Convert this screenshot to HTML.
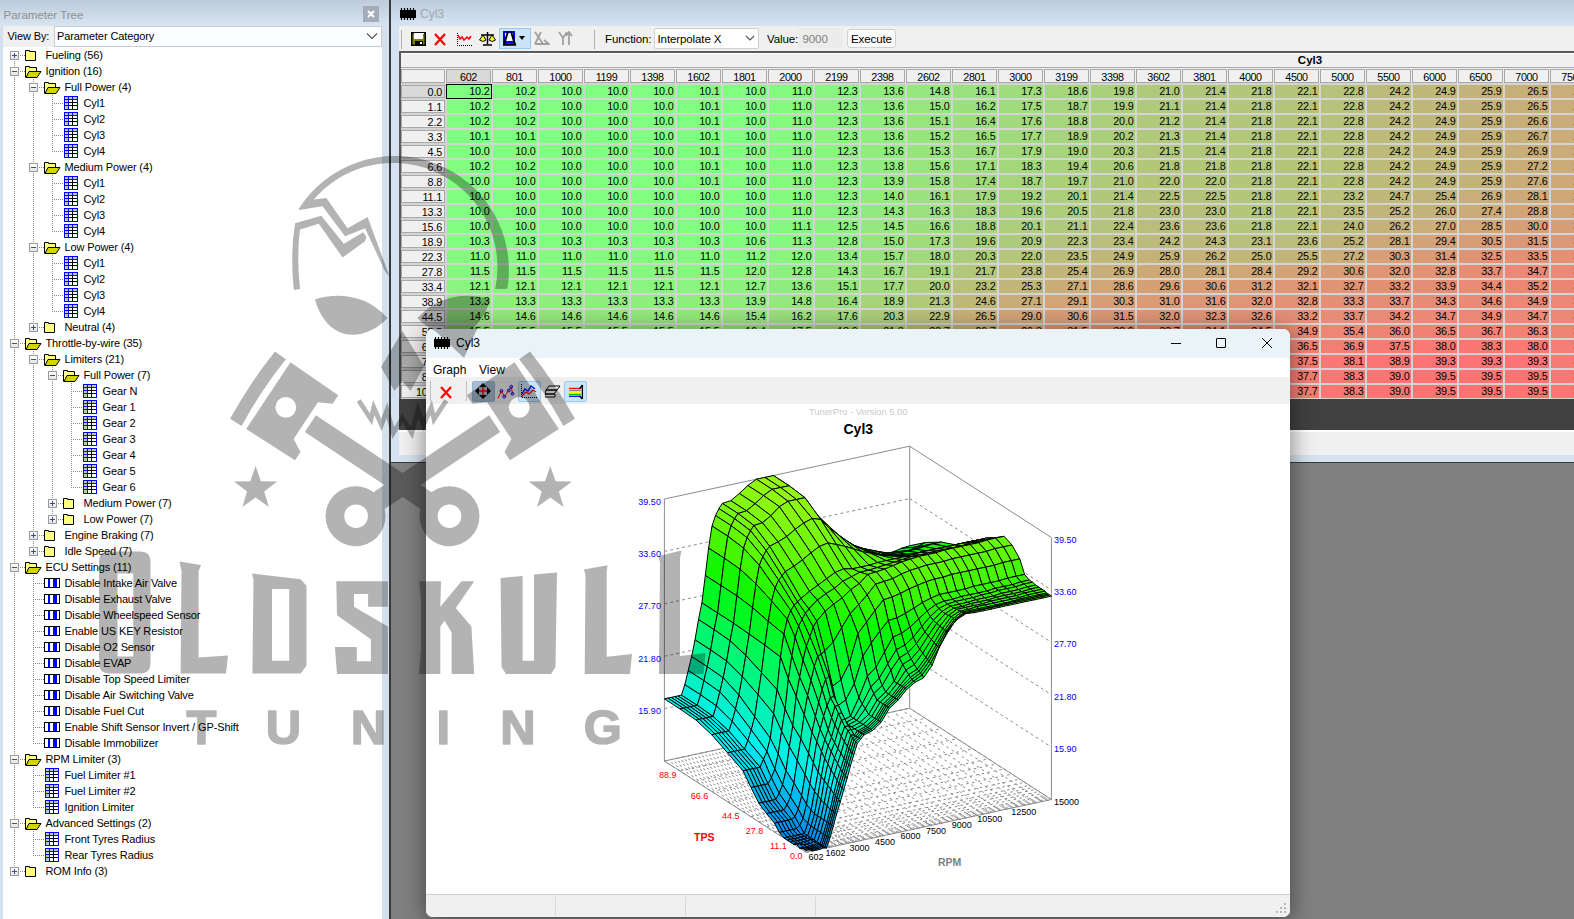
<!DOCTYPE html><html><head><meta charset="utf-8"><style>
*{margin:0;padding:0;box-sizing:content-box}
html,body{width:1574px;height:919px;overflow:hidden;background:#808080;font-family:"Liberation Sans",sans-serif}
.a{position:absolute}
.tt{position:absolute;font-size:11px;line-height:16px;white-space:nowrap;color:#000;letter-spacing:-0.12px}
.c{position:absolute;width:42.5px;height:13px;padding-right:1.5px;font-size:10.8px;line-height:13px;text-align:right;letter-spacing:-0.2px;color:#000;overflow:hidden}
.hc{position:absolute;border:1px solid #a8a8a8;font-size:10.8px;line-height:15px;text-align:center;letter-spacing:-0.4px;color:#000;background:#f0f0f0;overflow:hidden}
.hr{position:absolute;border:1px solid #a8a8a8;font-size:10.8px;line-height:12px;text-align:right;padding-right:2px;letter-spacing:-0.2px;color:#000;background:#f0f0f0;overflow:hidden}
.tb{position:absolute;white-space:nowrap}
</style></head><body><div class="a" style="left:0;top:0;width:391px;height:919px;background:#d4e0ec"></div><div class="a" style="left:0;top:0;width:389px;height:26px;background:linear-gradient(#bdcbdb,#d8e4f0)"></div><div class="tb" style="left:3.5px;top:7px;font-size:11.5px;color:#909090;line-height:16px">Parameter Tree</div><div class="a" style="left:363px;top:6px;width:16px;height:16px;background:#a3acb8"></div><svg class="a" style="left:363px;top:6px" width="16" height="16"><path d="M5 5L11 11M11 5L5 11" stroke="#fff" stroke-width="2"/></svg><div class="a" style="left:3px;top:26px;width:379px;height:21px;background:#f0f0f0"></div><div class="tb" style="left:7.5px;top:28px;font-size:11px;line-height:16px;letter-spacing:-0.1px">View By:</div><div class="a" style="left:54px;top:26px;width:326px;height:19px;background:#fcfdfe;border:1px solid #c8ccd2"></div><div class="tb" style="left:57px;top:28px;font-size:11px;line-height:16px;letter-spacing:-0.1px">Parameter Category</div><svg class="a" style="left:366px;top:32px" width="12" height="8"><path d="M1 1.5L6 6.5L11 1.5" fill="none" stroke="#505050" stroke-width="1.1"/></svg><div class="a" style="left:3px;top:47px;width:379px;height:872px;background:#fff"></div><div style="position:absolute;left:14px;top:55px;width:1px;height:16px;background:repeating-linear-gradient(#8c8c8c 0 1px,transparent 1px 2px)"></div><div style="position:absolute;left:14px;top:71px;width:1px;height:272px;background:repeating-linear-gradient(#8c8c8c 0 1px,transparent 1px 2px)"></div><div style="position:absolute;left:33px;top:77px;width:1px;height:10px;background:repeating-linear-gradient(#8c8c8c 0 1px,transparent 1px 2px)"></div><div style="position:absolute;left:33px;top:87px;width:1px;height:80px;background:repeating-linear-gradient(#8c8c8c 0 1px,transparent 1px 2px)"></div><div style="position:absolute;left:52px;top:93px;width:1px;height:10px;background:repeating-linear-gradient(#8c8c8c 0 1px,transparent 1px 2px)"></div><div style="position:absolute;left:52px;top:103px;width:1px;height:16px;background:repeating-linear-gradient(#8c8c8c 0 1px,transparent 1px 2px)"></div><div style="position:absolute;left:52px;top:119px;width:1px;height:16px;background:repeating-linear-gradient(#8c8c8c 0 1px,transparent 1px 2px)"></div><div style="position:absolute;left:52px;top:135px;width:1px;height:16px;background:repeating-linear-gradient(#8c8c8c 0 1px,transparent 1px 2px)"></div><div style="position:absolute;left:33px;top:167px;width:1px;height:80px;background:repeating-linear-gradient(#8c8c8c 0 1px,transparent 1px 2px)"></div><div style="position:absolute;left:52px;top:173px;width:1px;height:10px;background:repeating-linear-gradient(#8c8c8c 0 1px,transparent 1px 2px)"></div><div style="position:absolute;left:52px;top:183px;width:1px;height:16px;background:repeating-linear-gradient(#8c8c8c 0 1px,transparent 1px 2px)"></div><div style="position:absolute;left:52px;top:199px;width:1px;height:16px;background:repeating-linear-gradient(#8c8c8c 0 1px,transparent 1px 2px)"></div><div style="position:absolute;left:52px;top:215px;width:1px;height:16px;background:repeating-linear-gradient(#8c8c8c 0 1px,transparent 1px 2px)"></div><div style="position:absolute;left:33px;top:247px;width:1px;height:80px;background:repeating-linear-gradient(#8c8c8c 0 1px,transparent 1px 2px)"></div><div style="position:absolute;left:52px;top:253px;width:1px;height:10px;background:repeating-linear-gradient(#8c8c8c 0 1px,transparent 1px 2px)"></div><div style="position:absolute;left:52px;top:263px;width:1px;height:16px;background:repeating-linear-gradient(#8c8c8c 0 1px,transparent 1px 2px)"></div><div style="position:absolute;left:52px;top:279px;width:1px;height:16px;background:repeating-linear-gradient(#8c8c8c 0 1px,transparent 1px 2px)"></div><div style="position:absolute;left:52px;top:295px;width:1px;height:16px;background:repeating-linear-gradient(#8c8c8c 0 1px,transparent 1px 2px)"></div><div style="position:absolute;left:14px;top:343px;width:1px;height:224px;background:repeating-linear-gradient(#8c8c8c 0 1px,transparent 1px 2px)"></div><div style="position:absolute;left:33px;top:349px;width:1px;height:10px;background:repeating-linear-gradient(#8c8c8c 0 1px,transparent 1px 2px)"></div><div style="position:absolute;left:33px;top:359px;width:1px;height:176px;background:repeating-linear-gradient(#8c8c8c 0 1px,transparent 1px 2px)"></div><div style="position:absolute;left:52px;top:365px;width:1px;height:10px;background:repeating-linear-gradient(#8c8c8c 0 1px,transparent 1px 2px)"></div><div style="position:absolute;left:52px;top:375px;width:1px;height:128px;background:repeating-linear-gradient(#8c8c8c 0 1px,transparent 1px 2px)"></div><div style="position:absolute;left:71px;top:381px;width:1px;height:10px;background:repeating-linear-gradient(#8c8c8c 0 1px,transparent 1px 2px)"></div><div style="position:absolute;left:71px;top:391px;width:1px;height:16px;background:repeating-linear-gradient(#8c8c8c 0 1px,transparent 1px 2px)"></div><div style="position:absolute;left:71px;top:407px;width:1px;height:16px;background:repeating-linear-gradient(#8c8c8c 0 1px,transparent 1px 2px)"></div><div style="position:absolute;left:71px;top:423px;width:1px;height:16px;background:repeating-linear-gradient(#8c8c8c 0 1px,transparent 1px 2px)"></div><div style="position:absolute;left:71px;top:439px;width:1px;height:16px;background:repeating-linear-gradient(#8c8c8c 0 1px,transparent 1px 2px)"></div><div style="position:absolute;left:71px;top:455px;width:1px;height:16px;background:repeating-linear-gradient(#8c8c8c 0 1px,transparent 1px 2px)"></div><div style="position:absolute;left:71px;top:471px;width:1px;height:16px;background:repeating-linear-gradient(#8c8c8c 0 1px,transparent 1px 2px)"></div><div style="position:absolute;left:52px;top:503px;width:1px;height:16px;background:repeating-linear-gradient(#8c8c8c 0 1px,transparent 1px 2px)"></div><div style="position:absolute;left:33px;top:535px;width:1px;height:16px;background:repeating-linear-gradient(#8c8c8c 0 1px,transparent 1px 2px)"></div><div style="position:absolute;left:14px;top:567px;width:1px;height:192px;background:repeating-linear-gradient(#8c8c8c 0 1px,transparent 1px 2px)"></div><div style="position:absolute;left:33px;top:573px;width:1px;height:10px;background:repeating-linear-gradient(#8c8c8c 0 1px,transparent 1px 2px)"></div><div style="position:absolute;left:33px;top:583px;width:1px;height:16px;background:repeating-linear-gradient(#8c8c8c 0 1px,transparent 1px 2px)"></div><div style="position:absolute;left:33px;top:599px;width:1px;height:16px;background:repeating-linear-gradient(#8c8c8c 0 1px,transparent 1px 2px)"></div><div style="position:absolute;left:33px;top:615px;width:1px;height:16px;background:repeating-linear-gradient(#8c8c8c 0 1px,transparent 1px 2px)"></div><div style="position:absolute;left:33px;top:631px;width:1px;height:16px;background:repeating-linear-gradient(#8c8c8c 0 1px,transparent 1px 2px)"></div><div style="position:absolute;left:33px;top:647px;width:1px;height:16px;background:repeating-linear-gradient(#8c8c8c 0 1px,transparent 1px 2px)"></div><div style="position:absolute;left:33px;top:663px;width:1px;height:16px;background:repeating-linear-gradient(#8c8c8c 0 1px,transparent 1px 2px)"></div><div style="position:absolute;left:33px;top:679px;width:1px;height:16px;background:repeating-linear-gradient(#8c8c8c 0 1px,transparent 1px 2px)"></div><div style="position:absolute;left:33px;top:695px;width:1px;height:16px;background:repeating-linear-gradient(#8c8c8c 0 1px,transparent 1px 2px)"></div><div style="position:absolute;left:33px;top:711px;width:1px;height:16px;background:repeating-linear-gradient(#8c8c8c 0 1px,transparent 1px 2px)"></div><div style="position:absolute;left:33px;top:727px;width:1px;height:16px;background:repeating-linear-gradient(#8c8c8c 0 1px,transparent 1px 2px)"></div><div style="position:absolute;left:14px;top:759px;width:1px;height:64px;background:repeating-linear-gradient(#8c8c8c 0 1px,transparent 1px 2px)"></div><div style="position:absolute;left:33px;top:765px;width:1px;height:10px;background:repeating-linear-gradient(#8c8c8c 0 1px,transparent 1px 2px)"></div><div style="position:absolute;left:33px;top:775px;width:1px;height:16px;background:repeating-linear-gradient(#8c8c8c 0 1px,transparent 1px 2px)"></div><div style="position:absolute;left:33px;top:791px;width:1px;height:16px;background:repeating-linear-gradient(#8c8c8c 0 1px,transparent 1px 2px)"></div><div style="position:absolute;left:14px;top:823px;width:1px;height:48px;background:repeating-linear-gradient(#8c8c8c 0 1px,transparent 1px 2px)"></div><div style="position:absolute;left:33px;top:829px;width:1px;height:10px;background:repeating-linear-gradient(#8c8c8c 0 1px,transparent 1px 2px)"></div><div style="position:absolute;left:33px;top:839px;width:1px;height:16px;background:repeating-linear-gradient(#8c8c8c 0 1px,transparent 1px 2px)"></div><div style="position:absolute;left:14px;top:55px;width:11px;height:1px;background:repeating-linear-gradient(90deg,#8c8c8c 0 1px,transparent 1px 2px)"></div><div style="position:absolute;left:10px;top:51px;width:7px;height:7px;border:1px solid #9a9a9a;background:linear-gradient(#fff,#e6e6e6)"></div><div style="position:absolute;left:12px;top:55px;width:5px;height:1px;background:#3b4c8a"></div><div style="position:absolute;left:14px;top:53px;width:1px;height:5px;background:#3b4c8a"></div><svg style="position:absolute;left:25px;top:50px" width="11" height="11" viewBox="0 0 11 11"><path d="M1 1H4V2H10V10H1Z" fill="#ffff80"/><path d="M0.5 10.5V0.5H4.5V1.5H10.5V10.5Z" fill="none" stroke="#000" stroke-width="1"/></svg><div class="tt" style="left:45.5px;top:47px">Fueling (56)</div><div style="position:absolute;left:14px;top:71px;width:11px;height:1px;background:repeating-linear-gradient(90deg,#8c8c8c 0 1px,transparent 1px 2px)"></div><div style="position:absolute;left:10px;top:67px;width:7px;height:7px;border:1px solid #9a9a9a;background:linear-gradient(#fff,#e6e6e6)"></div><div style="position:absolute;left:12px;top:71px;width:5px;height:1px;background:#3b4c8a"></div><svg style="position:absolute;left:25px;top:66px" width="17" height="12" viewBox="0 0 17 12"><path d="M1 11V1H4V2H11V5H4L1 11Z" fill="#ffff80"/><path d="M0.5 11.5V0.5H4.5V1.5H11.5V5.5" fill="none" stroke="#000" stroke-width="1"/><path d="M1 11.5L4 5.5H16L12 11.5Z" fill="#d4d400" stroke="#000" stroke-width="1" stroke-linejoin="miter"/></svg><div class="tt" style="left:45.5px;top:63px">Ignition (16)</div><div style="position:absolute;left:33px;top:87px;width:11px;height:1px;background:repeating-linear-gradient(90deg,#8c8c8c 0 1px,transparent 1px 2px)"></div><div style="position:absolute;left:29px;top:83px;width:7px;height:7px;border:1px solid #9a9a9a;background:linear-gradient(#fff,#e6e6e6)"></div><div style="position:absolute;left:31px;top:87px;width:5px;height:1px;background:#3b4c8a"></div><svg style="position:absolute;left:44px;top:82px" width="17" height="12" viewBox="0 0 17 12"><path d="M1 11V1H4V2H11V5H4L1 11Z" fill="#ffff80"/><path d="M0.5 11.5V0.5H4.5V1.5H11.5V5.5" fill="none" stroke="#000" stroke-width="1"/><path d="M1 11.5L4 5.5H16L12 11.5Z" fill="#d4d400" stroke="#000" stroke-width="1" stroke-linejoin="miter"/></svg><div class="tt" style="left:64.5px;top:79px">Full Power (4)</div><div style="position:absolute;left:52px;top:103px;width:11px;height:1px;background:repeating-linear-gradient(90deg,#8c8c8c 0 1px,transparent 1px 2px)"></div><svg style="position:absolute;left:64px;top:96px" width="14" height="14" viewBox="0 0 14 14" shape-rendering="crispEdges"><rect x="0" y="0" width="14" height="14" fill="#0000ff"/><rect x="1" y="1" width="3" height="2" fill="#c8c8a8"/><rect x="5" y="1" width="3" height="2" fill="#c8c8a8"/><rect x="9" y="1" width="4" height="2" fill="#c8c8a8"/><rect x="1" y="4" width="3" height="2" fill="#c8c8a8"/><rect x="1" y="7" width="3" height="2" fill="#c8c8a8"/><rect x="1" y="10" width="3" height="3" fill="#c8c8a8"/><rect x="5" y="4" width="3" height="2" fill="#fff"/><rect x="9" y="4" width="4" height="2" fill="#fff"/><rect x="5" y="7" width="3" height="2" fill="#fff"/><rect x="9" y="7" width="4" height="2" fill="#fff"/><rect x="5" y="10" width="3" height="3" fill="#fff"/><rect x="9" y="10" width="4" height="3" fill="#fff"/><rect x="8" y="4" width="1" height="9" fill="#000"/><rect x="5" y="6" width="8" height="1" fill="#000"/><rect x="5" y="9" width="8" height="1" fill="#000"/></svg><div class="tt" style="left:83.5px;top:95px">Cyl1</div><div style="position:absolute;left:52px;top:119px;width:11px;height:1px;background:repeating-linear-gradient(90deg,#8c8c8c 0 1px,transparent 1px 2px)"></div><svg style="position:absolute;left:64px;top:112px" width="14" height="14" viewBox="0 0 14 14" shape-rendering="crispEdges"><rect x="0" y="0" width="14" height="14" fill="#0000ff"/><rect x="1" y="1" width="3" height="2" fill="#c8c8a8"/><rect x="5" y="1" width="3" height="2" fill="#c8c8a8"/><rect x="9" y="1" width="4" height="2" fill="#c8c8a8"/><rect x="1" y="4" width="3" height="2" fill="#c8c8a8"/><rect x="1" y="7" width="3" height="2" fill="#c8c8a8"/><rect x="1" y="10" width="3" height="3" fill="#c8c8a8"/><rect x="5" y="4" width="3" height="2" fill="#fff"/><rect x="9" y="4" width="4" height="2" fill="#fff"/><rect x="5" y="7" width="3" height="2" fill="#fff"/><rect x="9" y="7" width="4" height="2" fill="#fff"/><rect x="5" y="10" width="3" height="3" fill="#fff"/><rect x="9" y="10" width="4" height="3" fill="#fff"/><rect x="8" y="4" width="1" height="9" fill="#000"/><rect x="5" y="6" width="8" height="1" fill="#000"/><rect x="5" y="9" width="8" height="1" fill="#000"/></svg><div class="tt" style="left:83.5px;top:111px">Cyl2</div><div style="position:absolute;left:52px;top:135px;width:11px;height:1px;background:repeating-linear-gradient(90deg,#8c8c8c 0 1px,transparent 1px 2px)"></div><svg style="position:absolute;left:64px;top:128px" width="14" height="14" viewBox="0 0 14 14" shape-rendering="crispEdges"><rect x="0" y="0" width="14" height="14" fill="#0000ff"/><rect x="1" y="1" width="3" height="2" fill="#c8c8a8"/><rect x="5" y="1" width="3" height="2" fill="#c8c8a8"/><rect x="9" y="1" width="4" height="2" fill="#c8c8a8"/><rect x="1" y="4" width="3" height="2" fill="#c8c8a8"/><rect x="1" y="7" width="3" height="2" fill="#c8c8a8"/><rect x="1" y="10" width="3" height="3" fill="#c8c8a8"/><rect x="5" y="4" width="3" height="2" fill="#fff"/><rect x="9" y="4" width="4" height="2" fill="#fff"/><rect x="5" y="7" width="3" height="2" fill="#fff"/><rect x="9" y="7" width="4" height="2" fill="#fff"/><rect x="5" y="10" width="3" height="3" fill="#fff"/><rect x="9" y="10" width="4" height="3" fill="#fff"/><rect x="8" y="4" width="1" height="9" fill="#000"/><rect x="5" y="6" width="8" height="1" fill="#000"/><rect x="5" y="9" width="8" height="1" fill="#000"/></svg><div class="tt" style="left:83.5px;top:127px">Cyl3</div><div style="position:absolute;left:52px;top:151px;width:11px;height:1px;background:repeating-linear-gradient(90deg,#8c8c8c 0 1px,transparent 1px 2px)"></div><svg style="position:absolute;left:64px;top:144px" width="14" height="14" viewBox="0 0 14 14" shape-rendering="crispEdges"><rect x="0" y="0" width="14" height="14" fill="#0000ff"/><rect x="1" y="1" width="3" height="2" fill="#c8c8a8"/><rect x="5" y="1" width="3" height="2" fill="#c8c8a8"/><rect x="9" y="1" width="4" height="2" fill="#c8c8a8"/><rect x="1" y="4" width="3" height="2" fill="#c8c8a8"/><rect x="1" y="7" width="3" height="2" fill="#c8c8a8"/><rect x="1" y="10" width="3" height="3" fill="#c8c8a8"/><rect x="5" y="4" width="3" height="2" fill="#fff"/><rect x="9" y="4" width="4" height="2" fill="#fff"/><rect x="5" y="7" width="3" height="2" fill="#fff"/><rect x="9" y="7" width="4" height="2" fill="#fff"/><rect x="5" y="10" width="3" height="3" fill="#fff"/><rect x="9" y="10" width="4" height="3" fill="#fff"/><rect x="8" y="4" width="1" height="9" fill="#000"/><rect x="5" y="6" width="8" height="1" fill="#000"/><rect x="5" y="9" width="8" height="1" fill="#000"/></svg><div class="tt" style="left:83.5px;top:143px">Cyl4</div><div style="position:absolute;left:33px;top:167px;width:11px;height:1px;background:repeating-linear-gradient(90deg,#8c8c8c 0 1px,transparent 1px 2px)"></div><div style="position:absolute;left:29px;top:163px;width:7px;height:7px;border:1px solid #9a9a9a;background:linear-gradient(#fff,#e6e6e6)"></div><div style="position:absolute;left:31px;top:167px;width:5px;height:1px;background:#3b4c8a"></div><svg style="position:absolute;left:44px;top:162px" width="17" height="12" viewBox="0 0 17 12"><path d="M1 11V1H4V2H11V5H4L1 11Z" fill="#ffff80"/><path d="M0.5 11.5V0.5H4.5V1.5H11.5V5.5" fill="none" stroke="#000" stroke-width="1"/><path d="M1 11.5L4 5.5H16L12 11.5Z" fill="#d4d400" stroke="#000" stroke-width="1" stroke-linejoin="miter"/></svg><div class="tt" style="left:64.5px;top:159px">Medium Power (4)</div><div style="position:absolute;left:52px;top:183px;width:11px;height:1px;background:repeating-linear-gradient(90deg,#8c8c8c 0 1px,transparent 1px 2px)"></div><svg style="position:absolute;left:64px;top:176px" width="14" height="14" viewBox="0 0 14 14" shape-rendering="crispEdges"><rect x="0" y="0" width="14" height="14" fill="#0000ff"/><rect x="1" y="1" width="3" height="2" fill="#c8c8a8"/><rect x="5" y="1" width="3" height="2" fill="#c8c8a8"/><rect x="9" y="1" width="4" height="2" fill="#c8c8a8"/><rect x="1" y="4" width="3" height="2" fill="#c8c8a8"/><rect x="1" y="7" width="3" height="2" fill="#c8c8a8"/><rect x="1" y="10" width="3" height="3" fill="#c8c8a8"/><rect x="5" y="4" width="3" height="2" fill="#fff"/><rect x="9" y="4" width="4" height="2" fill="#fff"/><rect x="5" y="7" width="3" height="2" fill="#fff"/><rect x="9" y="7" width="4" height="2" fill="#fff"/><rect x="5" y="10" width="3" height="3" fill="#fff"/><rect x="9" y="10" width="4" height="3" fill="#fff"/><rect x="8" y="4" width="1" height="9" fill="#000"/><rect x="5" y="6" width="8" height="1" fill="#000"/><rect x="5" y="9" width="8" height="1" fill="#000"/></svg><div class="tt" style="left:83.5px;top:175px">Cyl1</div><div style="position:absolute;left:52px;top:199px;width:11px;height:1px;background:repeating-linear-gradient(90deg,#8c8c8c 0 1px,transparent 1px 2px)"></div><svg style="position:absolute;left:64px;top:192px" width="14" height="14" viewBox="0 0 14 14" shape-rendering="crispEdges"><rect x="0" y="0" width="14" height="14" fill="#0000ff"/><rect x="1" y="1" width="3" height="2" fill="#c8c8a8"/><rect x="5" y="1" width="3" height="2" fill="#c8c8a8"/><rect x="9" y="1" width="4" height="2" fill="#c8c8a8"/><rect x="1" y="4" width="3" height="2" fill="#c8c8a8"/><rect x="1" y="7" width="3" height="2" fill="#c8c8a8"/><rect x="1" y="10" width="3" height="3" fill="#c8c8a8"/><rect x="5" y="4" width="3" height="2" fill="#fff"/><rect x="9" y="4" width="4" height="2" fill="#fff"/><rect x="5" y="7" width="3" height="2" fill="#fff"/><rect x="9" y="7" width="4" height="2" fill="#fff"/><rect x="5" y="10" width="3" height="3" fill="#fff"/><rect x="9" y="10" width="4" height="3" fill="#fff"/><rect x="8" y="4" width="1" height="9" fill="#000"/><rect x="5" y="6" width="8" height="1" fill="#000"/><rect x="5" y="9" width="8" height="1" fill="#000"/></svg><div class="tt" style="left:83.5px;top:191px">Cyl2</div><div style="position:absolute;left:52px;top:215px;width:11px;height:1px;background:repeating-linear-gradient(90deg,#8c8c8c 0 1px,transparent 1px 2px)"></div><svg style="position:absolute;left:64px;top:208px" width="14" height="14" viewBox="0 0 14 14" shape-rendering="crispEdges"><rect x="0" y="0" width="14" height="14" fill="#0000ff"/><rect x="1" y="1" width="3" height="2" fill="#c8c8a8"/><rect x="5" y="1" width="3" height="2" fill="#c8c8a8"/><rect x="9" y="1" width="4" height="2" fill="#c8c8a8"/><rect x="1" y="4" width="3" height="2" fill="#c8c8a8"/><rect x="1" y="7" width="3" height="2" fill="#c8c8a8"/><rect x="1" y="10" width="3" height="3" fill="#c8c8a8"/><rect x="5" y="4" width="3" height="2" fill="#fff"/><rect x="9" y="4" width="4" height="2" fill="#fff"/><rect x="5" y="7" width="3" height="2" fill="#fff"/><rect x="9" y="7" width="4" height="2" fill="#fff"/><rect x="5" y="10" width="3" height="3" fill="#fff"/><rect x="9" y="10" width="4" height="3" fill="#fff"/><rect x="8" y="4" width="1" height="9" fill="#000"/><rect x="5" y="6" width="8" height="1" fill="#000"/><rect x="5" y="9" width="8" height="1" fill="#000"/></svg><div class="tt" style="left:83.5px;top:207px">Cyl3</div><div style="position:absolute;left:52px;top:231px;width:11px;height:1px;background:repeating-linear-gradient(90deg,#8c8c8c 0 1px,transparent 1px 2px)"></div><svg style="position:absolute;left:64px;top:224px" width="14" height="14" viewBox="0 0 14 14" shape-rendering="crispEdges"><rect x="0" y="0" width="14" height="14" fill="#0000ff"/><rect x="1" y="1" width="3" height="2" fill="#c8c8a8"/><rect x="5" y="1" width="3" height="2" fill="#c8c8a8"/><rect x="9" y="1" width="4" height="2" fill="#c8c8a8"/><rect x="1" y="4" width="3" height="2" fill="#c8c8a8"/><rect x="1" y="7" width="3" height="2" fill="#c8c8a8"/><rect x="1" y="10" width="3" height="3" fill="#c8c8a8"/><rect x="5" y="4" width="3" height="2" fill="#fff"/><rect x="9" y="4" width="4" height="2" fill="#fff"/><rect x="5" y="7" width="3" height="2" fill="#fff"/><rect x="9" y="7" width="4" height="2" fill="#fff"/><rect x="5" y="10" width="3" height="3" fill="#fff"/><rect x="9" y="10" width="4" height="3" fill="#fff"/><rect x="8" y="4" width="1" height="9" fill="#000"/><rect x="5" y="6" width="8" height="1" fill="#000"/><rect x="5" y="9" width="8" height="1" fill="#000"/></svg><div class="tt" style="left:83.5px;top:223px">Cyl4</div><div style="position:absolute;left:33px;top:247px;width:11px;height:1px;background:repeating-linear-gradient(90deg,#8c8c8c 0 1px,transparent 1px 2px)"></div><div style="position:absolute;left:29px;top:243px;width:7px;height:7px;border:1px solid #9a9a9a;background:linear-gradient(#fff,#e6e6e6)"></div><div style="position:absolute;left:31px;top:247px;width:5px;height:1px;background:#3b4c8a"></div><svg style="position:absolute;left:44px;top:242px" width="17" height="12" viewBox="0 0 17 12"><path d="M1 11V1H4V2H11V5H4L1 11Z" fill="#ffff80"/><path d="M0.5 11.5V0.5H4.5V1.5H11.5V5.5" fill="none" stroke="#000" stroke-width="1"/><path d="M1 11.5L4 5.5H16L12 11.5Z" fill="#d4d400" stroke="#000" stroke-width="1" stroke-linejoin="miter"/></svg><div class="tt" style="left:64.5px;top:239px">Low Power (4)</div><div style="position:absolute;left:52px;top:263px;width:11px;height:1px;background:repeating-linear-gradient(90deg,#8c8c8c 0 1px,transparent 1px 2px)"></div><svg style="position:absolute;left:64px;top:256px" width="14" height="14" viewBox="0 0 14 14" shape-rendering="crispEdges"><rect x="0" y="0" width="14" height="14" fill="#0000ff"/><rect x="1" y="1" width="3" height="2" fill="#c8c8a8"/><rect x="5" y="1" width="3" height="2" fill="#c8c8a8"/><rect x="9" y="1" width="4" height="2" fill="#c8c8a8"/><rect x="1" y="4" width="3" height="2" fill="#c8c8a8"/><rect x="1" y="7" width="3" height="2" fill="#c8c8a8"/><rect x="1" y="10" width="3" height="3" fill="#c8c8a8"/><rect x="5" y="4" width="3" height="2" fill="#fff"/><rect x="9" y="4" width="4" height="2" fill="#fff"/><rect x="5" y="7" width="3" height="2" fill="#fff"/><rect x="9" y="7" width="4" height="2" fill="#fff"/><rect x="5" y="10" width="3" height="3" fill="#fff"/><rect x="9" y="10" width="4" height="3" fill="#fff"/><rect x="8" y="4" width="1" height="9" fill="#000"/><rect x="5" y="6" width="8" height="1" fill="#000"/><rect x="5" y="9" width="8" height="1" fill="#000"/></svg><div class="tt" style="left:83.5px;top:255px">Cyl1</div><div style="position:absolute;left:52px;top:279px;width:11px;height:1px;background:repeating-linear-gradient(90deg,#8c8c8c 0 1px,transparent 1px 2px)"></div><svg style="position:absolute;left:64px;top:272px" width="14" height="14" viewBox="0 0 14 14" shape-rendering="crispEdges"><rect x="0" y="0" width="14" height="14" fill="#0000ff"/><rect x="1" y="1" width="3" height="2" fill="#c8c8a8"/><rect x="5" y="1" width="3" height="2" fill="#c8c8a8"/><rect x="9" y="1" width="4" height="2" fill="#c8c8a8"/><rect x="1" y="4" width="3" height="2" fill="#c8c8a8"/><rect x="1" y="7" width="3" height="2" fill="#c8c8a8"/><rect x="1" y="10" width="3" height="3" fill="#c8c8a8"/><rect x="5" y="4" width="3" height="2" fill="#fff"/><rect x="9" y="4" width="4" height="2" fill="#fff"/><rect x="5" y="7" width="3" height="2" fill="#fff"/><rect x="9" y="7" width="4" height="2" fill="#fff"/><rect x="5" y="10" width="3" height="3" fill="#fff"/><rect x="9" y="10" width="4" height="3" fill="#fff"/><rect x="8" y="4" width="1" height="9" fill="#000"/><rect x="5" y="6" width="8" height="1" fill="#000"/><rect x="5" y="9" width="8" height="1" fill="#000"/></svg><div class="tt" style="left:83.5px;top:271px">Cyl2</div><div style="position:absolute;left:52px;top:295px;width:11px;height:1px;background:repeating-linear-gradient(90deg,#8c8c8c 0 1px,transparent 1px 2px)"></div><svg style="position:absolute;left:64px;top:288px" width="14" height="14" viewBox="0 0 14 14" shape-rendering="crispEdges"><rect x="0" y="0" width="14" height="14" fill="#0000ff"/><rect x="1" y="1" width="3" height="2" fill="#c8c8a8"/><rect x="5" y="1" width="3" height="2" fill="#c8c8a8"/><rect x="9" y="1" width="4" height="2" fill="#c8c8a8"/><rect x="1" y="4" width="3" height="2" fill="#c8c8a8"/><rect x="1" y="7" width="3" height="2" fill="#c8c8a8"/><rect x="1" y="10" width="3" height="3" fill="#c8c8a8"/><rect x="5" y="4" width="3" height="2" fill="#fff"/><rect x="9" y="4" width="4" height="2" fill="#fff"/><rect x="5" y="7" width="3" height="2" fill="#fff"/><rect x="9" y="7" width="4" height="2" fill="#fff"/><rect x="5" y="10" width="3" height="3" fill="#fff"/><rect x="9" y="10" width="4" height="3" fill="#fff"/><rect x="8" y="4" width="1" height="9" fill="#000"/><rect x="5" y="6" width="8" height="1" fill="#000"/><rect x="5" y="9" width="8" height="1" fill="#000"/></svg><div class="tt" style="left:83.5px;top:287px">Cyl3</div><div style="position:absolute;left:52px;top:311px;width:11px;height:1px;background:repeating-linear-gradient(90deg,#8c8c8c 0 1px,transparent 1px 2px)"></div><svg style="position:absolute;left:64px;top:304px" width="14" height="14" viewBox="0 0 14 14" shape-rendering="crispEdges"><rect x="0" y="0" width="14" height="14" fill="#0000ff"/><rect x="1" y="1" width="3" height="2" fill="#c8c8a8"/><rect x="5" y="1" width="3" height="2" fill="#c8c8a8"/><rect x="9" y="1" width="4" height="2" fill="#c8c8a8"/><rect x="1" y="4" width="3" height="2" fill="#c8c8a8"/><rect x="1" y="7" width="3" height="2" fill="#c8c8a8"/><rect x="1" y="10" width="3" height="3" fill="#c8c8a8"/><rect x="5" y="4" width="3" height="2" fill="#fff"/><rect x="9" y="4" width="4" height="2" fill="#fff"/><rect x="5" y="7" width="3" height="2" fill="#fff"/><rect x="9" y="7" width="4" height="2" fill="#fff"/><rect x="5" y="10" width="3" height="3" fill="#fff"/><rect x="9" y="10" width="4" height="3" fill="#fff"/><rect x="8" y="4" width="1" height="9" fill="#000"/><rect x="5" y="6" width="8" height="1" fill="#000"/><rect x="5" y="9" width="8" height="1" fill="#000"/></svg><div class="tt" style="left:83.5px;top:303px">Cyl4</div><div style="position:absolute;left:33px;top:327px;width:11px;height:1px;background:repeating-linear-gradient(90deg,#8c8c8c 0 1px,transparent 1px 2px)"></div><div style="position:absolute;left:29px;top:323px;width:7px;height:7px;border:1px solid #9a9a9a;background:linear-gradient(#fff,#e6e6e6)"></div><div style="position:absolute;left:31px;top:327px;width:5px;height:1px;background:#3b4c8a"></div><div style="position:absolute;left:33px;top:325px;width:1px;height:5px;background:#3b4c8a"></div><svg style="position:absolute;left:44px;top:322px" width="11" height="11" viewBox="0 0 11 11"><path d="M1 1H4V2H10V10H1Z" fill="#ffff80"/><path d="M0.5 10.5V0.5H4.5V1.5H10.5V10.5Z" fill="none" stroke="#000" stroke-width="1"/></svg><div class="tt" style="left:64.5px;top:319px">Neutral (4)</div><div style="position:absolute;left:14px;top:343px;width:11px;height:1px;background:repeating-linear-gradient(90deg,#8c8c8c 0 1px,transparent 1px 2px)"></div><div style="position:absolute;left:10px;top:339px;width:7px;height:7px;border:1px solid #9a9a9a;background:linear-gradient(#fff,#e6e6e6)"></div><div style="position:absolute;left:12px;top:343px;width:5px;height:1px;background:#3b4c8a"></div><svg style="position:absolute;left:25px;top:338px" width="17" height="12" viewBox="0 0 17 12"><path d="M1 11V1H4V2H11V5H4L1 11Z" fill="#ffff80"/><path d="M0.5 11.5V0.5H4.5V1.5H11.5V5.5" fill="none" stroke="#000" stroke-width="1"/><path d="M1 11.5L4 5.5H16L12 11.5Z" fill="#d4d400" stroke="#000" stroke-width="1" stroke-linejoin="miter"/></svg><div class="tt" style="left:45.5px;top:335px">Throttle-by-wire (35)</div><div style="position:absolute;left:33px;top:359px;width:11px;height:1px;background:repeating-linear-gradient(90deg,#8c8c8c 0 1px,transparent 1px 2px)"></div><div style="position:absolute;left:29px;top:355px;width:7px;height:7px;border:1px solid #9a9a9a;background:linear-gradient(#fff,#e6e6e6)"></div><div style="position:absolute;left:31px;top:359px;width:5px;height:1px;background:#3b4c8a"></div><svg style="position:absolute;left:44px;top:354px" width="17" height="12" viewBox="0 0 17 12"><path d="M1 11V1H4V2H11V5H4L1 11Z" fill="#ffff80"/><path d="M0.5 11.5V0.5H4.5V1.5H11.5V5.5" fill="none" stroke="#000" stroke-width="1"/><path d="M1 11.5L4 5.5H16L12 11.5Z" fill="#d4d400" stroke="#000" stroke-width="1" stroke-linejoin="miter"/></svg><div class="tt" style="left:64.5px;top:351px">Limiters (21)</div><div style="position:absolute;left:52px;top:375px;width:11px;height:1px;background:repeating-linear-gradient(90deg,#8c8c8c 0 1px,transparent 1px 2px)"></div><div style="position:absolute;left:48px;top:371px;width:7px;height:7px;border:1px solid #9a9a9a;background:linear-gradient(#fff,#e6e6e6)"></div><div style="position:absolute;left:50px;top:375px;width:5px;height:1px;background:#3b4c8a"></div><svg style="position:absolute;left:63px;top:370px" width="17" height="12" viewBox="0 0 17 12"><path d="M1 11V1H4V2H11V5H4L1 11Z" fill="#ffff80"/><path d="M0.5 11.5V0.5H4.5V1.5H11.5V5.5" fill="none" stroke="#000" stroke-width="1"/><path d="M1 11.5L4 5.5H16L12 11.5Z" fill="#d4d400" stroke="#000" stroke-width="1" stroke-linejoin="miter"/></svg><div class="tt" style="left:83.5px;top:367px">Full Power (7)</div><div style="position:absolute;left:71px;top:391px;width:11px;height:1px;background:repeating-linear-gradient(90deg,#8c8c8c 0 1px,transparent 1px 2px)"></div><svg style="position:absolute;left:83px;top:384px" width="14" height="14" viewBox="0 0 14 14" shape-rendering="crispEdges"><rect x="0" y="0" width="14" height="14" fill="#0000ff"/><rect x="1" y="1" width="3" height="2" fill="#c8c8a8"/><rect x="5" y="1" width="3" height="2" fill="#c8c8a8"/><rect x="9" y="1" width="4" height="2" fill="#c8c8a8"/><rect x="1" y="4" width="3" height="2" fill="#c8c8a8"/><rect x="1" y="7" width="3" height="2" fill="#c8c8a8"/><rect x="1" y="10" width="3" height="3" fill="#c8c8a8"/><rect x="5" y="4" width="3" height="2" fill="#fff"/><rect x="9" y="4" width="4" height="2" fill="#fff"/><rect x="5" y="7" width="3" height="2" fill="#fff"/><rect x="9" y="7" width="4" height="2" fill="#fff"/><rect x="5" y="10" width="3" height="3" fill="#fff"/><rect x="9" y="10" width="4" height="3" fill="#fff"/><rect x="8" y="4" width="1" height="9" fill="#000"/><rect x="5" y="6" width="8" height="1" fill="#000"/><rect x="5" y="9" width="8" height="1" fill="#000"/></svg><div class="tt" style="left:102.5px;top:383px">Gear N</div><div style="position:absolute;left:71px;top:407px;width:11px;height:1px;background:repeating-linear-gradient(90deg,#8c8c8c 0 1px,transparent 1px 2px)"></div><svg style="position:absolute;left:83px;top:400px" width="14" height="14" viewBox="0 0 14 14" shape-rendering="crispEdges"><rect x="0" y="0" width="14" height="14" fill="#0000ff"/><rect x="1" y="1" width="3" height="2" fill="#c8c8a8"/><rect x="5" y="1" width="3" height="2" fill="#c8c8a8"/><rect x="9" y="1" width="4" height="2" fill="#c8c8a8"/><rect x="1" y="4" width="3" height="2" fill="#c8c8a8"/><rect x="1" y="7" width="3" height="2" fill="#c8c8a8"/><rect x="1" y="10" width="3" height="3" fill="#c8c8a8"/><rect x="5" y="4" width="3" height="2" fill="#fff"/><rect x="9" y="4" width="4" height="2" fill="#fff"/><rect x="5" y="7" width="3" height="2" fill="#fff"/><rect x="9" y="7" width="4" height="2" fill="#fff"/><rect x="5" y="10" width="3" height="3" fill="#fff"/><rect x="9" y="10" width="4" height="3" fill="#fff"/><rect x="8" y="4" width="1" height="9" fill="#000"/><rect x="5" y="6" width="8" height="1" fill="#000"/><rect x="5" y="9" width="8" height="1" fill="#000"/></svg><div class="tt" style="left:102.5px;top:399px">Gear 1</div><div style="position:absolute;left:71px;top:423px;width:11px;height:1px;background:repeating-linear-gradient(90deg,#8c8c8c 0 1px,transparent 1px 2px)"></div><svg style="position:absolute;left:83px;top:416px" width="14" height="14" viewBox="0 0 14 14" shape-rendering="crispEdges"><rect x="0" y="0" width="14" height="14" fill="#0000ff"/><rect x="1" y="1" width="3" height="2" fill="#c8c8a8"/><rect x="5" y="1" width="3" height="2" fill="#c8c8a8"/><rect x="9" y="1" width="4" height="2" fill="#c8c8a8"/><rect x="1" y="4" width="3" height="2" fill="#c8c8a8"/><rect x="1" y="7" width="3" height="2" fill="#c8c8a8"/><rect x="1" y="10" width="3" height="3" fill="#c8c8a8"/><rect x="5" y="4" width="3" height="2" fill="#fff"/><rect x="9" y="4" width="4" height="2" fill="#fff"/><rect x="5" y="7" width="3" height="2" fill="#fff"/><rect x="9" y="7" width="4" height="2" fill="#fff"/><rect x="5" y="10" width="3" height="3" fill="#fff"/><rect x="9" y="10" width="4" height="3" fill="#fff"/><rect x="8" y="4" width="1" height="9" fill="#000"/><rect x="5" y="6" width="8" height="1" fill="#000"/><rect x="5" y="9" width="8" height="1" fill="#000"/></svg><div class="tt" style="left:102.5px;top:415px">Gear 2</div><div style="position:absolute;left:71px;top:439px;width:11px;height:1px;background:repeating-linear-gradient(90deg,#8c8c8c 0 1px,transparent 1px 2px)"></div><svg style="position:absolute;left:83px;top:432px" width="14" height="14" viewBox="0 0 14 14" shape-rendering="crispEdges"><rect x="0" y="0" width="14" height="14" fill="#0000ff"/><rect x="1" y="1" width="3" height="2" fill="#c8c8a8"/><rect x="5" y="1" width="3" height="2" fill="#c8c8a8"/><rect x="9" y="1" width="4" height="2" fill="#c8c8a8"/><rect x="1" y="4" width="3" height="2" fill="#c8c8a8"/><rect x="1" y="7" width="3" height="2" fill="#c8c8a8"/><rect x="1" y="10" width="3" height="3" fill="#c8c8a8"/><rect x="5" y="4" width="3" height="2" fill="#fff"/><rect x="9" y="4" width="4" height="2" fill="#fff"/><rect x="5" y="7" width="3" height="2" fill="#fff"/><rect x="9" y="7" width="4" height="2" fill="#fff"/><rect x="5" y="10" width="3" height="3" fill="#fff"/><rect x="9" y="10" width="4" height="3" fill="#fff"/><rect x="8" y="4" width="1" height="9" fill="#000"/><rect x="5" y="6" width="8" height="1" fill="#000"/><rect x="5" y="9" width="8" height="1" fill="#000"/></svg><div class="tt" style="left:102.5px;top:431px">Gear 3</div><div style="position:absolute;left:71px;top:455px;width:11px;height:1px;background:repeating-linear-gradient(90deg,#8c8c8c 0 1px,transparent 1px 2px)"></div><svg style="position:absolute;left:83px;top:448px" width="14" height="14" viewBox="0 0 14 14" shape-rendering="crispEdges"><rect x="0" y="0" width="14" height="14" fill="#0000ff"/><rect x="1" y="1" width="3" height="2" fill="#c8c8a8"/><rect x="5" y="1" width="3" height="2" fill="#c8c8a8"/><rect x="9" y="1" width="4" height="2" fill="#c8c8a8"/><rect x="1" y="4" width="3" height="2" fill="#c8c8a8"/><rect x="1" y="7" width="3" height="2" fill="#c8c8a8"/><rect x="1" y="10" width="3" height="3" fill="#c8c8a8"/><rect x="5" y="4" width="3" height="2" fill="#fff"/><rect x="9" y="4" width="4" height="2" fill="#fff"/><rect x="5" y="7" width="3" height="2" fill="#fff"/><rect x="9" y="7" width="4" height="2" fill="#fff"/><rect x="5" y="10" width="3" height="3" fill="#fff"/><rect x="9" y="10" width="4" height="3" fill="#fff"/><rect x="8" y="4" width="1" height="9" fill="#000"/><rect x="5" y="6" width="8" height="1" fill="#000"/><rect x="5" y="9" width="8" height="1" fill="#000"/></svg><div class="tt" style="left:102.5px;top:447px">Gear 4</div><div style="position:absolute;left:71px;top:471px;width:11px;height:1px;background:repeating-linear-gradient(90deg,#8c8c8c 0 1px,transparent 1px 2px)"></div><svg style="position:absolute;left:83px;top:464px" width="14" height="14" viewBox="0 0 14 14" shape-rendering="crispEdges"><rect x="0" y="0" width="14" height="14" fill="#0000ff"/><rect x="1" y="1" width="3" height="2" fill="#c8c8a8"/><rect x="5" y="1" width="3" height="2" fill="#c8c8a8"/><rect x="9" y="1" width="4" height="2" fill="#c8c8a8"/><rect x="1" y="4" width="3" height="2" fill="#c8c8a8"/><rect x="1" y="7" width="3" height="2" fill="#c8c8a8"/><rect x="1" y="10" width="3" height="3" fill="#c8c8a8"/><rect x="5" y="4" width="3" height="2" fill="#fff"/><rect x="9" y="4" width="4" height="2" fill="#fff"/><rect x="5" y="7" width="3" height="2" fill="#fff"/><rect x="9" y="7" width="4" height="2" fill="#fff"/><rect x="5" y="10" width="3" height="3" fill="#fff"/><rect x="9" y="10" width="4" height="3" fill="#fff"/><rect x="8" y="4" width="1" height="9" fill="#000"/><rect x="5" y="6" width="8" height="1" fill="#000"/><rect x="5" y="9" width="8" height="1" fill="#000"/></svg><div class="tt" style="left:102.5px;top:463px">Gear 5</div><div style="position:absolute;left:71px;top:487px;width:11px;height:1px;background:repeating-linear-gradient(90deg,#8c8c8c 0 1px,transparent 1px 2px)"></div><svg style="position:absolute;left:83px;top:480px" width="14" height="14" viewBox="0 0 14 14" shape-rendering="crispEdges"><rect x="0" y="0" width="14" height="14" fill="#0000ff"/><rect x="1" y="1" width="3" height="2" fill="#c8c8a8"/><rect x="5" y="1" width="3" height="2" fill="#c8c8a8"/><rect x="9" y="1" width="4" height="2" fill="#c8c8a8"/><rect x="1" y="4" width="3" height="2" fill="#c8c8a8"/><rect x="1" y="7" width="3" height="2" fill="#c8c8a8"/><rect x="1" y="10" width="3" height="3" fill="#c8c8a8"/><rect x="5" y="4" width="3" height="2" fill="#fff"/><rect x="9" y="4" width="4" height="2" fill="#fff"/><rect x="5" y="7" width="3" height="2" fill="#fff"/><rect x="9" y="7" width="4" height="2" fill="#fff"/><rect x="5" y="10" width="3" height="3" fill="#fff"/><rect x="9" y="10" width="4" height="3" fill="#fff"/><rect x="8" y="4" width="1" height="9" fill="#000"/><rect x="5" y="6" width="8" height="1" fill="#000"/><rect x="5" y="9" width="8" height="1" fill="#000"/></svg><div class="tt" style="left:102.5px;top:479px">Gear 6</div><div style="position:absolute;left:52px;top:503px;width:11px;height:1px;background:repeating-linear-gradient(90deg,#8c8c8c 0 1px,transparent 1px 2px)"></div><div style="position:absolute;left:48px;top:499px;width:7px;height:7px;border:1px solid #9a9a9a;background:linear-gradient(#fff,#e6e6e6)"></div><div style="position:absolute;left:50px;top:503px;width:5px;height:1px;background:#3b4c8a"></div><div style="position:absolute;left:52px;top:501px;width:1px;height:5px;background:#3b4c8a"></div><svg style="position:absolute;left:63px;top:498px" width="11" height="11" viewBox="0 0 11 11"><path d="M1 1H4V2H10V10H1Z" fill="#ffff80"/><path d="M0.5 10.5V0.5H4.5V1.5H10.5V10.5Z" fill="none" stroke="#000" stroke-width="1"/></svg><div class="tt" style="left:83.5px;top:495px">Medium Power (7)</div><div style="position:absolute;left:52px;top:519px;width:11px;height:1px;background:repeating-linear-gradient(90deg,#8c8c8c 0 1px,transparent 1px 2px)"></div><div style="position:absolute;left:48px;top:515px;width:7px;height:7px;border:1px solid #9a9a9a;background:linear-gradient(#fff,#e6e6e6)"></div><div style="position:absolute;left:50px;top:519px;width:5px;height:1px;background:#3b4c8a"></div><div style="position:absolute;left:52px;top:517px;width:1px;height:5px;background:#3b4c8a"></div><svg style="position:absolute;left:63px;top:514px" width="11" height="11" viewBox="0 0 11 11"><path d="M1 1H4V2H10V10H1Z" fill="#ffff80"/><path d="M0.5 10.5V0.5H4.5V1.5H10.5V10.5Z" fill="none" stroke="#000" stroke-width="1"/></svg><div class="tt" style="left:83.5px;top:511px">Low Power (7)</div><div style="position:absolute;left:33px;top:535px;width:11px;height:1px;background:repeating-linear-gradient(90deg,#8c8c8c 0 1px,transparent 1px 2px)"></div><div style="position:absolute;left:29px;top:531px;width:7px;height:7px;border:1px solid #9a9a9a;background:linear-gradient(#fff,#e6e6e6)"></div><div style="position:absolute;left:31px;top:535px;width:5px;height:1px;background:#3b4c8a"></div><div style="position:absolute;left:33px;top:533px;width:1px;height:5px;background:#3b4c8a"></div><svg style="position:absolute;left:44px;top:530px" width="11" height="11" viewBox="0 0 11 11"><path d="M1 1H4V2H10V10H1Z" fill="#ffff80"/><path d="M0.5 10.5V0.5H4.5V1.5H10.5V10.5Z" fill="none" stroke="#000" stroke-width="1"/></svg><div class="tt" style="left:64.5px;top:527px">Engine Braking (7)</div><div style="position:absolute;left:33px;top:551px;width:11px;height:1px;background:repeating-linear-gradient(90deg,#8c8c8c 0 1px,transparent 1px 2px)"></div><div style="position:absolute;left:29px;top:547px;width:7px;height:7px;border:1px solid #9a9a9a;background:linear-gradient(#fff,#e6e6e6)"></div><div style="position:absolute;left:31px;top:551px;width:5px;height:1px;background:#3b4c8a"></div><div style="position:absolute;left:33px;top:549px;width:1px;height:5px;background:#3b4c8a"></div><svg style="position:absolute;left:44px;top:546px" width="11" height="11" viewBox="0 0 11 11"><path d="M1 1H4V2H10V10H1Z" fill="#ffff80"/><path d="M0.5 10.5V0.5H4.5V1.5H10.5V10.5Z" fill="none" stroke="#000" stroke-width="1"/></svg><div class="tt" style="left:64.5px;top:543px">Idle Speed (7)</div><div style="position:absolute;left:14px;top:567px;width:11px;height:1px;background:repeating-linear-gradient(90deg,#8c8c8c 0 1px,transparent 1px 2px)"></div><div style="position:absolute;left:10px;top:563px;width:7px;height:7px;border:1px solid #9a9a9a;background:linear-gradient(#fff,#e6e6e6)"></div><div style="position:absolute;left:12px;top:567px;width:5px;height:1px;background:#3b4c8a"></div><svg style="position:absolute;left:25px;top:562px" width="17" height="12" viewBox="0 0 17 12"><path d="M1 11V1H4V2H11V5H4L1 11Z" fill="#ffff80"/><path d="M0.5 11.5V0.5H4.5V1.5H11.5V5.5" fill="none" stroke="#000" stroke-width="1"/><path d="M1 11.5L4 5.5H16L12 11.5Z" fill="#d4d400" stroke="#000" stroke-width="1" stroke-linejoin="miter"/></svg><div class="tt" style="left:45.5px;top:559px">ECU Settings (11)</div><div style="position:absolute;left:33px;top:583px;width:11px;height:1px;background:repeating-linear-gradient(90deg,#8c8c8c 0 1px,transparent 1px 2px)"></div><svg style="position:absolute;left:44px;top:578px" width="16" height="10" viewBox="0 0 16 10" shape-rendering="crispEdges"><rect x="0" y="0" width="16" height="10" fill="#000"/><rect x="1" y="1" width="14" height="8" fill="#fff"/><rect x="4" y="1" width="2" height="8" fill="#0000ff"/><rect x="9" y="1" width="4" height="8" fill="#0000ff"/></svg><div class="tt" style="left:64.5px;top:575px">Disable Intake Air Valve</div><div style="position:absolute;left:33px;top:599px;width:11px;height:1px;background:repeating-linear-gradient(90deg,#8c8c8c 0 1px,transparent 1px 2px)"></div><svg style="position:absolute;left:44px;top:594px" width="16" height="10" viewBox="0 0 16 10" shape-rendering="crispEdges"><rect x="0" y="0" width="16" height="10" fill="#000"/><rect x="1" y="1" width="14" height="8" fill="#fff"/><rect x="4" y="1" width="2" height="8" fill="#0000ff"/><rect x="9" y="1" width="4" height="8" fill="#0000ff"/></svg><div class="tt" style="left:64.5px;top:591px">Disable Exhaust Valve</div><div style="position:absolute;left:33px;top:615px;width:11px;height:1px;background:repeating-linear-gradient(90deg,#8c8c8c 0 1px,transparent 1px 2px)"></div><svg style="position:absolute;left:44px;top:610px" width="16" height="10" viewBox="0 0 16 10" shape-rendering="crispEdges"><rect x="0" y="0" width="16" height="10" fill="#000"/><rect x="1" y="1" width="14" height="8" fill="#fff"/><rect x="4" y="1" width="2" height="8" fill="#0000ff"/><rect x="9" y="1" width="4" height="8" fill="#0000ff"/></svg><div class="tt" style="left:64.5px;top:607px">Disable Wheelspeed Sensor</div><div style="position:absolute;left:33px;top:631px;width:11px;height:1px;background:repeating-linear-gradient(90deg,#8c8c8c 0 1px,transparent 1px 2px)"></div><svg style="position:absolute;left:44px;top:626px" width="16" height="10" viewBox="0 0 16 10" shape-rendering="crispEdges"><rect x="0" y="0" width="16" height="10" fill="#000"/><rect x="1" y="1" width="14" height="8" fill="#fff"/><rect x="4" y="1" width="2" height="8" fill="#0000ff"/><rect x="9" y="1" width="4" height="8" fill="#0000ff"/></svg><div class="tt" style="left:64.5px;top:623px">Enable US KEY Resistor</div><div style="position:absolute;left:33px;top:647px;width:11px;height:1px;background:repeating-linear-gradient(90deg,#8c8c8c 0 1px,transparent 1px 2px)"></div><svg style="position:absolute;left:44px;top:642px" width="16" height="10" viewBox="0 0 16 10" shape-rendering="crispEdges"><rect x="0" y="0" width="16" height="10" fill="#000"/><rect x="1" y="1" width="14" height="8" fill="#fff"/><rect x="4" y="1" width="2" height="8" fill="#0000ff"/><rect x="9" y="1" width="4" height="8" fill="#0000ff"/></svg><div class="tt" style="left:64.5px;top:639px">Disable O2 Sensor</div><div style="position:absolute;left:33px;top:663px;width:11px;height:1px;background:repeating-linear-gradient(90deg,#8c8c8c 0 1px,transparent 1px 2px)"></div><svg style="position:absolute;left:44px;top:658px" width="16" height="10" viewBox="0 0 16 10" shape-rendering="crispEdges"><rect x="0" y="0" width="16" height="10" fill="#000"/><rect x="1" y="1" width="14" height="8" fill="#fff"/><rect x="4" y="1" width="2" height="8" fill="#0000ff"/><rect x="9" y="1" width="4" height="8" fill="#0000ff"/></svg><div class="tt" style="left:64.5px;top:655px">Disable EVAP</div><div style="position:absolute;left:33px;top:679px;width:11px;height:1px;background:repeating-linear-gradient(90deg,#8c8c8c 0 1px,transparent 1px 2px)"></div><svg style="position:absolute;left:44px;top:674px" width="16" height="10" viewBox="0 0 16 10" shape-rendering="crispEdges"><rect x="0" y="0" width="16" height="10" fill="#000"/><rect x="1" y="1" width="14" height="8" fill="#fff"/><rect x="4" y="1" width="2" height="8" fill="#0000ff"/><rect x="9" y="1" width="4" height="8" fill="#0000ff"/></svg><div class="tt" style="left:64.5px;top:671px">Disable Top Speed Limiter</div><div style="position:absolute;left:33px;top:695px;width:11px;height:1px;background:repeating-linear-gradient(90deg,#8c8c8c 0 1px,transparent 1px 2px)"></div><svg style="position:absolute;left:44px;top:690px" width="16" height="10" viewBox="0 0 16 10" shape-rendering="crispEdges"><rect x="0" y="0" width="16" height="10" fill="#000"/><rect x="1" y="1" width="14" height="8" fill="#fff"/><rect x="4" y="1" width="2" height="8" fill="#0000ff"/><rect x="9" y="1" width="4" height="8" fill="#0000ff"/></svg><div class="tt" style="left:64.5px;top:687px">Disable Air Switching Valve</div><div style="position:absolute;left:33px;top:711px;width:11px;height:1px;background:repeating-linear-gradient(90deg,#8c8c8c 0 1px,transparent 1px 2px)"></div><svg style="position:absolute;left:44px;top:706px" width="16" height="10" viewBox="0 0 16 10" shape-rendering="crispEdges"><rect x="0" y="0" width="16" height="10" fill="#000"/><rect x="1" y="1" width="14" height="8" fill="#fff"/><rect x="4" y="1" width="2" height="8" fill="#0000ff"/><rect x="9" y="1" width="4" height="8" fill="#0000ff"/></svg><div class="tt" style="left:64.5px;top:703px">Disable Fuel Cut</div><div style="position:absolute;left:33px;top:727px;width:11px;height:1px;background:repeating-linear-gradient(90deg,#8c8c8c 0 1px,transparent 1px 2px)"></div><svg style="position:absolute;left:44px;top:722px" width="16" height="10" viewBox="0 0 16 10" shape-rendering="crispEdges"><rect x="0" y="0" width="16" height="10" fill="#000"/><rect x="1" y="1" width="14" height="8" fill="#fff"/><rect x="4" y="1" width="2" height="8" fill="#0000ff"/><rect x="9" y="1" width="4" height="8" fill="#0000ff"/></svg><div class="tt" style="left:64.5px;top:719px">Enable Shift Sensor Invert / GP-Shift</div><div style="position:absolute;left:33px;top:743px;width:11px;height:1px;background:repeating-linear-gradient(90deg,#8c8c8c 0 1px,transparent 1px 2px)"></div><svg style="position:absolute;left:44px;top:738px" width="16" height="10" viewBox="0 0 16 10" shape-rendering="crispEdges"><rect x="0" y="0" width="16" height="10" fill="#000"/><rect x="1" y="1" width="14" height="8" fill="#fff"/><rect x="4" y="1" width="2" height="8" fill="#0000ff"/><rect x="9" y="1" width="4" height="8" fill="#0000ff"/></svg><div class="tt" style="left:64.5px;top:735px">Disable Immobilizer</div><div style="position:absolute;left:14px;top:759px;width:11px;height:1px;background:repeating-linear-gradient(90deg,#8c8c8c 0 1px,transparent 1px 2px)"></div><div style="position:absolute;left:10px;top:755px;width:7px;height:7px;border:1px solid #9a9a9a;background:linear-gradient(#fff,#e6e6e6)"></div><div style="position:absolute;left:12px;top:759px;width:5px;height:1px;background:#3b4c8a"></div><svg style="position:absolute;left:25px;top:754px" width="17" height="12" viewBox="0 0 17 12"><path d="M1 11V1H4V2H11V5H4L1 11Z" fill="#ffff80"/><path d="M0.5 11.5V0.5H4.5V1.5H11.5V5.5" fill="none" stroke="#000" stroke-width="1"/><path d="M1 11.5L4 5.5H16L12 11.5Z" fill="#d4d400" stroke="#000" stroke-width="1" stroke-linejoin="miter"/></svg><div class="tt" style="left:45.5px;top:751px">RPM Limiter (3)</div><div style="position:absolute;left:33px;top:775px;width:11px;height:1px;background:repeating-linear-gradient(90deg,#8c8c8c 0 1px,transparent 1px 2px)"></div><svg style="position:absolute;left:45px;top:768px" width="14" height="14" viewBox="0 0 14 14" shape-rendering="crispEdges"><rect x="0" y="0" width="14" height="14" fill="#0000ff"/><rect x="1" y="1" width="3" height="2" fill="#c8c8a8"/><rect x="5" y="1" width="3" height="2" fill="#c8c8a8"/><rect x="9" y="1" width="4" height="2" fill="#c8c8a8"/><rect x="1" y="4" width="3" height="2" fill="#c8c8a8"/><rect x="1" y="7" width="3" height="2" fill="#c8c8a8"/><rect x="1" y="10" width="3" height="3" fill="#c8c8a8"/><rect x="5" y="4" width="3" height="2" fill="#fff"/><rect x="9" y="4" width="4" height="2" fill="#fff"/><rect x="5" y="7" width="3" height="2" fill="#fff"/><rect x="9" y="7" width="4" height="2" fill="#fff"/><rect x="5" y="10" width="3" height="3" fill="#fff"/><rect x="9" y="10" width="4" height="3" fill="#fff"/><rect x="8" y="4" width="1" height="9" fill="#000"/><rect x="5" y="6" width="8" height="1" fill="#000"/><rect x="5" y="9" width="8" height="1" fill="#000"/></svg><div class="tt" style="left:64.5px;top:767px">Fuel Limiter #1</div><div style="position:absolute;left:33px;top:791px;width:11px;height:1px;background:repeating-linear-gradient(90deg,#8c8c8c 0 1px,transparent 1px 2px)"></div><svg style="position:absolute;left:45px;top:784px" width="14" height="14" viewBox="0 0 14 14" shape-rendering="crispEdges"><rect x="0" y="0" width="14" height="14" fill="#0000ff"/><rect x="1" y="1" width="3" height="2" fill="#c8c8a8"/><rect x="5" y="1" width="3" height="2" fill="#c8c8a8"/><rect x="9" y="1" width="4" height="2" fill="#c8c8a8"/><rect x="1" y="4" width="3" height="2" fill="#c8c8a8"/><rect x="1" y="7" width="3" height="2" fill="#c8c8a8"/><rect x="1" y="10" width="3" height="3" fill="#c8c8a8"/><rect x="5" y="4" width="3" height="2" fill="#fff"/><rect x="9" y="4" width="4" height="2" fill="#fff"/><rect x="5" y="7" width="3" height="2" fill="#fff"/><rect x="9" y="7" width="4" height="2" fill="#fff"/><rect x="5" y="10" width="3" height="3" fill="#fff"/><rect x="9" y="10" width="4" height="3" fill="#fff"/><rect x="8" y="4" width="1" height="9" fill="#000"/><rect x="5" y="6" width="8" height="1" fill="#000"/><rect x="5" y="9" width="8" height="1" fill="#000"/></svg><div class="tt" style="left:64.5px;top:783px">Fuel Limiter #2</div><div style="position:absolute;left:33px;top:807px;width:11px;height:1px;background:repeating-linear-gradient(90deg,#8c8c8c 0 1px,transparent 1px 2px)"></div><svg style="position:absolute;left:45px;top:800px" width="14" height="14" viewBox="0 0 14 14" shape-rendering="crispEdges"><rect x="0" y="0" width="14" height="14" fill="#0000ff"/><rect x="1" y="1" width="3" height="2" fill="#c8c8a8"/><rect x="5" y="1" width="3" height="2" fill="#c8c8a8"/><rect x="9" y="1" width="4" height="2" fill="#c8c8a8"/><rect x="1" y="4" width="3" height="2" fill="#c8c8a8"/><rect x="1" y="7" width="3" height="2" fill="#c8c8a8"/><rect x="1" y="10" width="3" height="3" fill="#c8c8a8"/><rect x="5" y="4" width="3" height="2" fill="#fff"/><rect x="9" y="4" width="4" height="2" fill="#fff"/><rect x="5" y="7" width="3" height="2" fill="#fff"/><rect x="9" y="7" width="4" height="2" fill="#fff"/><rect x="5" y="10" width="3" height="3" fill="#fff"/><rect x="9" y="10" width="4" height="3" fill="#fff"/><rect x="8" y="4" width="1" height="9" fill="#000"/><rect x="5" y="6" width="8" height="1" fill="#000"/><rect x="5" y="9" width="8" height="1" fill="#000"/></svg><div class="tt" style="left:64.5px;top:799px">Ignition Limiter</div><div style="position:absolute;left:14px;top:823px;width:11px;height:1px;background:repeating-linear-gradient(90deg,#8c8c8c 0 1px,transparent 1px 2px)"></div><div style="position:absolute;left:10px;top:819px;width:7px;height:7px;border:1px solid #9a9a9a;background:linear-gradient(#fff,#e6e6e6)"></div><div style="position:absolute;left:12px;top:823px;width:5px;height:1px;background:#3b4c8a"></div><svg style="position:absolute;left:25px;top:818px" width="17" height="12" viewBox="0 0 17 12"><path d="M1 11V1H4V2H11V5H4L1 11Z" fill="#ffff80"/><path d="M0.5 11.5V0.5H4.5V1.5H11.5V5.5" fill="none" stroke="#000" stroke-width="1"/><path d="M1 11.5L4 5.5H16L12 11.5Z" fill="#d4d400" stroke="#000" stroke-width="1" stroke-linejoin="miter"/></svg><div class="tt" style="left:45.5px;top:815px">Advanced Settings (2)</div><div style="position:absolute;left:33px;top:839px;width:11px;height:1px;background:repeating-linear-gradient(90deg,#8c8c8c 0 1px,transparent 1px 2px)"></div><svg style="position:absolute;left:45px;top:832px" width="14" height="14" viewBox="0 0 14 14" shape-rendering="crispEdges"><rect x="0" y="0" width="14" height="14" fill="#0000ff"/><rect x="1" y="1" width="3" height="2" fill="#c8c8a8"/><rect x="5" y="1" width="3" height="2" fill="#c8c8a8"/><rect x="9" y="1" width="4" height="2" fill="#c8c8a8"/><rect x="1" y="4" width="3" height="2" fill="#c8c8a8"/><rect x="1" y="7" width="3" height="2" fill="#c8c8a8"/><rect x="1" y="10" width="3" height="3" fill="#c8c8a8"/><rect x="5" y="4" width="3" height="2" fill="#fff"/><rect x="9" y="4" width="4" height="2" fill="#fff"/><rect x="5" y="7" width="3" height="2" fill="#fff"/><rect x="9" y="7" width="4" height="2" fill="#fff"/><rect x="5" y="10" width="3" height="3" fill="#fff"/><rect x="9" y="10" width="4" height="3" fill="#fff"/><rect x="8" y="4" width="1" height="9" fill="#000"/><rect x="5" y="6" width="8" height="1" fill="#000"/><rect x="5" y="9" width="8" height="1" fill="#000"/></svg><div class="tt" style="left:64.5px;top:831px">Front Tyres Radius</div><div style="position:absolute;left:33px;top:855px;width:11px;height:1px;background:repeating-linear-gradient(90deg,#8c8c8c 0 1px,transparent 1px 2px)"></div><svg style="position:absolute;left:45px;top:848px" width="14" height="14" viewBox="0 0 14 14" shape-rendering="crispEdges"><rect x="0" y="0" width="14" height="14" fill="#0000ff"/><rect x="1" y="1" width="3" height="2" fill="#c8c8a8"/><rect x="5" y="1" width="3" height="2" fill="#c8c8a8"/><rect x="9" y="1" width="4" height="2" fill="#c8c8a8"/><rect x="1" y="4" width="3" height="2" fill="#c8c8a8"/><rect x="1" y="7" width="3" height="2" fill="#c8c8a8"/><rect x="1" y="10" width="3" height="3" fill="#c8c8a8"/><rect x="5" y="4" width="3" height="2" fill="#fff"/><rect x="9" y="4" width="4" height="2" fill="#fff"/><rect x="5" y="7" width="3" height="2" fill="#fff"/><rect x="9" y="7" width="4" height="2" fill="#fff"/><rect x="5" y="10" width="3" height="3" fill="#fff"/><rect x="9" y="10" width="4" height="3" fill="#fff"/><rect x="8" y="4" width="1" height="9" fill="#000"/><rect x="5" y="6" width="8" height="1" fill="#000"/><rect x="5" y="9" width="8" height="1" fill="#000"/></svg><div class="tt" style="left:64.5px;top:847px">Rear Tyres Radius</div><div style="position:absolute;left:14px;top:871px;width:11px;height:1px;background:repeating-linear-gradient(90deg,#8c8c8c 0 1px,transparent 1px 2px)"></div><div style="position:absolute;left:10px;top:867px;width:7px;height:7px;border:1px solid #9a9a9a;background:linear-gradient(#fff,#e6e6e6)"></div><div style="position:absolute;left:12px;top:871px;width:5px;height:1px;background:#3b4c8a"></div><div style="position:absolute;left:14px;top:869px;width:1px;height:5px;background:#3b4c8a"></div><svg style="position:absolute;left:25px;top:866px" width="11" height="11" viewBox="0 0 11 11"><path d="M1 1H4V2H10V10H1Z" fill="#ffff80"/><path d="M0.5 10.5V0.5H4.5V1.5H10.5V10.5Z" fill="none" stroke="#000" stroke-width="1"/></svg><div class="tt" style="left:45.5px;top:863px">ROM Info (3)</div><div class="a" style="left:389px;top:0;width:2px;height:919px;background:#3a3a3a"></div><div class="a" style="left:391px;top:0;width:1183px;height:462px;background:#d6e2ef"></div><div class="a" style="left:391px;top:0;width:1183px;height:26px;background:linear-gradient(#bccbdb,#d6e4f2)"></div><svg style="position:absolute;left:400px;top:8px" width="16" height="12" viewBox="0 0 16 12"><rect x="0" y="2" width="16" height="8" fill="#000"/><path d="M1.5 0V2M4.5 0V2M7.5 0V2M10.5 0V2M13.5 0V2M1.5 10V12M4.5 10V12M7.5 10V12M10.5 10V12M13.5 10V12" stroke="#000" stroke-width="1.2"/></svg><div class="tb" style="left:420px;top:6px;font-size:12px;line-height:16px;color:#a0a8b0">Cyl3</div><div class="a" style="left:399px;top:26px;width:1175px;height:25px;background:#f0f0f0"></div><div class="a" style="left:401px;top:30px;width:1px;height:19px;background:#b0b0b0"></div><div class="a" style="left:594px;top:30px;width:1px;height:19px;background:#b0b0b0"></div><svg class="a" style="left:411px;top:32px" width="15" height="14" viewBox="0 0 15 14"><rect x="0" y="0" width="15" height="14" fill="#000"/><rect x="1.5" y="1.5" width="12" height="11" fill="#808000"/><rect x="3" y="1" width="9" height="6" fill="#fff"/><rect x="4" y="9" width="8" height="4" fill="#000"/><rect x="9" y="10" width="2" height="2" fill="#fff"/><rect x="12" y="1" width="1" height="1" fill="#fff"/></svg><svg class="a" style="left:434px;top:33px" width="12" height="13" viewBox="0 0 12 13"><path d="M1 1L11 12M11 1L1 12" stroke="#ff0000" stroke-width="2.2"/></svg><svg class="a" style="left:457px;top:33px" width="15" height="13" viewBox="0 0 15 13"><path d="M0.5 0V12.5H15" fill="none" stroke="#000" stroke-width="1" stroke-dasharray="1,1"/><path d="M1 2L3 6L5 4L7 7L10 4L12 6L14 3" fill="none" stroke="#ff0000" stroke-width="1.5"/></svg><svg class="a" style="left:479px;top:31px" width="17" height="15" viewBox="0 0 17 15"><path d="M8.5 1V13M4 14H13M2 4H15" stroke="#000" stroke-width="1.5"/><path d="M0.5 9Q4 12 7 9L4 4ZM10 9Q13 12 16.5 9L13 4Z" fill="#ffff00" stroke="#000" stroke-width="1"/></svg><div class="a" style="left:499px;top:28px;width:30px;height:19px;background:#cce4f7;border:1px solid #99c9ef"></div><svg class="a" style="left:503px;top:31px" width="25" height="15" viewBox="0 0 25 15"><rect x="1" y="1" width="10" height="10" fill="#fff" stroke="#0000ff" stroke-width="2"/><path d="M5 0.5L1 13.5H12L8 0.5" fill="none" stroke="#000" stroke-width="2"/><path d="M0 13.5H13" stroke="#000" stroke-width="2"/><path d="M16 5H22L19 9Z" fill="#000"/></svg><svg class="a" style="left:533px;top:31px" width="17" height="15" viewBox="0 0 17 15"><path d="M2 1L10 13M8 1L2 13M2 13H16L11 9" fill="none" stroke="#a0a0a0" stroke-width="1.8"/></svg><svg class="a" style="left:558px;top:31px" width="15" height="15" viewBox="0 0 15 15"><path d="M1 1L5 7V14M9 1L5 7M11 14V2M8 5L11 1L14 5" fill="none" stroke="#a0a0a0" stroke-width="1.8"/></svg><div class="tb" style="left:605px;top:31px;font-size:11.5px;line-height:16px;letter-spacing:-0.1px">Function:</div><div class="a" style="left:654px;top:28px;width:103px;height:19px;background:#fff;border:1px solid #d0d0d0;border-radius:2px"></div><div class="tb" style="left:657.5px;top:31px;font-size:11.5px;line-height:16px;letter-spacing:-0.1px">Interpolate X</div><svg class="a" style="left:745px;top:35px" width="10" height="7"><path d="M1 1L5 5L9 1" fill="none" stroke="#505050" stroke-width="1.1"/></svg><div class="tb" style="left:767px;top:31px;font-size:11.5px;line-height:16px;letter-spacing:-0.1px">Value:</div><div class="a" style="left:798px;top:28px;width:45px;height:20px;background:#ececec"></div><div class="tb" style="left:802.5px;top:31px;font-size:11.5px;line-height:16px;color:#808080;letter-spacing:-0.1px">9000</div><div class="a" style="left:847px;top:29px;width:47px;height:17px;background:#fbfbfb;border:1px solid #d0d0d0;border-radius:3px"></div><div class="tb" style="left:851px;top:31px;font-size:11.5px;line-height:16px;letter-spacing:-0.1px">Execute</div><div style="position:absolute;left:399px;top:51px;width:1175px;height:348px;background:#d4d4d4;border-top:2px solid #5a5a5a;border-left:2px solid #5a5a5a;box-sizing:border-box"></div><div style="position:absolute;left:401px;top:53px;width:1173px;height:15px;background:#f0f0f0;border-top:1px solid #fff"></div><div style="position:absolute;left:401px;top:68px;width:1173px;height:15px;background:#f0f0f0"></div><div class="a" style="left:401px;top:67px;width:1173px;height:1px;background:#a8a8a8"></div><div class="tb" style="left:1290px;top:54px;width:40px;text-align:center;font-weight:bold;font-size:11.5px">Cyl3</div><div class="hc" style="left:401px;top:69px;width:42px;height:12px"></div><div class="hc" style="left:446px;top:69px;width:43px;height:12px;background:#d9d9d9">602</div><div class="hc" style="left:492px;top:69px;width:43px;height:12px;background:#f0f0f0">801</div><div class="hc" style="left:538px;top:69px;width:43px;height:12px;background:#f0f0f0">1000</div><div class="hc" style="left:584px;top:69px;width:43px;height:12px;background:#f0f0f0">1199</div><div class="hc" style="left:630px;top:69px;width:43px;height:12px;background:#f0f0f0">1398</div><div class="hc" style="left:676px;top:69px;width:43px;height:12px;background:#f0f0f0">1602</div><div class="hc" style="left:722px;top:69px;width:43px;height:12px;background:#f0f0f0">1801</div><div class="hc" style="left:768px;top:69px;width:43px;height:12px;background:#f0f0f0">2000</div><div class="hc" style="left:814px;top:69px;width:43px;height:12px;background:#f0f0f0">2199</div><div class="hc" style="left:860px;top:69px;width:43px;height:12px;background:#f0f0f0">2398</div><div class="hc" style="left:906px;top:69px;width:43px;height:12px;background:#f0f0f0">2602</div><div class="hc" style="left:952px;top:69px;width:43px;height:12px;background:#f0f0f0">2801</div><div class="hc" style="left:998px;top:69px;width:43px;height:12px;background:#f0f0f0">3000</div><div class="hc" style="left:1044px;top:69px;width:43px;height:12px;background:#f0f0f0">3199</div><div class="hc" style="left:1090px;top:69px;width:43px;height:12px;background:#f0f0f0">3398</div><div class="hc" style="left:1136px;top:69px;width:43px;height:12px;background:#f0f0f0">3602</div><div class="hc" style="left:1182px;top:69px;width:43px;height:12px;background:#f0f0f0">3801</div><div class="hc" style="left:1228px;top:69px;width:43px;height:12px;background:#f0f0f0">4000</div><div class="hc" style="left:1274px;top:69px;width:43px;height:12px;background:#f0f0f0">4500</div><div class="hc" style="left:1320px;top:69px;width:43px;height:12px;background:#f0f0f0">5000</div><div class="hc" style="left:1366px;top:69px;width:43px;height:12px;background:#f0f0f0">5500</div><div class="hc" style="left:1412px;top:69px;width:43px;height:12px;background:#f0f0f0">6000</div><div class="hc" style="left:1458px;top:69px;width:43px;height:12px;background:#f0f0f0">6500</div><div class="hc" style="left:1504px;top:69px;width:43px;height:12px;background:#f0f0f0">7000</div><div class="hc" style="left:1550px;top:69px;width:43px;height:12px;background:#f0f0f0">7500</div><div class="hr" style="left:401px;top:85px;width:40px;height:11px;background:#d9d9d9">0.0</div><div class="c" style="left:447px;top:85px;background:#80fe7f;outline:1px solid #000;outline-offset:0px;">10.2</div><div class="c" style="left:493px;top:85px;background:#80fe7f;">10.2</div><div class="c" style="left:539px;top:85px;background:#80ff80;">10.0</div><div class="c" style="left:585px;top:85px;background:#80ff80;">10.0</div><div class="c" style="left:631px;top:85px;background:#80ff80;">10.0</div><div class="c" style="left:677px;top:85px;background:#80fe7f;">10.1</div><div class="c" style="left:723px;top:85px;background:#80ff80;">10.0</div><div class="c" style="left:769px;top:85px;background:#84fa7f;">11.0</div><div class="c" style="left:815px;top:85px;background:#89f47e;">12.3</div><div class="c" style="left:861px;top:85px;background:#8fed7e;">13.6</div><div class="c" style="left:907px;top:85px;background:#94e87d;">14.8</div><div class="c" style="left:953px;top:85px;background:#9ae27d;">16.1</div><div class="c" style="left:999px;top:85px;background:#9fdc7c;">17.3</div><div class="c" style="left:1045px;top:85px;background:#a5d67c;">18.6</div><div class="c" style="left:1091px;top:85px;background:#aad07b;">19.8</div><div class="c" style="left:1137px;top:85px;background:#afca7b;">21.0</div><div class="c" style="left:1183px;top:85px;background:#b1c87a;">21.4</div><div class="c" style="left:1229px;top:85px;background:#b2c77a;">21.8</div><div class="c" style="left:1275px;top:85px;background:#b4c57a;">22.1</div><div class="c" style="left:1321px;top:85px;background:#b7c27a;">22.8</div><div class="c" style="left:1367px;top:85px;background:#bdbb79;">24.2</div><div class="c" style="left:1413px;top:85px;background:#c0b879;">24.9</div><div class="c" style="left:1459px;top:85px;background:#c4b378;">25.9</div><div class="c" style="left:1505px;top:85px;background:#c7b078;">26.5</div><div class="c" style="left:1551px;top:85px;background:#c8af78;">26.8</div><div class="hr" style="left:401px;top:100px;width:40px;height:11px;background:#f0f0f0">1.1</div><div class="c" style="left:447px;top:100px;background:#80fe7f;">10.2</div><div class="c" style="left:493px;top:100px;background:#80fe7f;">10.2</div><div class="c" style="left:539px;top:100px;background:#80ff80;">10.0</div><div class="c" style="left:585px;top:100px;background:#80ff80;">10.0</div><div class="c" style="left:631px;top:100px;background:#80ff80;">10.0</div><div class="c" style="left:677px;top:100px;background:#80fe7f;">10.1</div><div class="c" style="left:723px;top:100px;background:#80ff80;">10.0</div><div class="c" style="left:769px;top:100px;background:#84fa7f;">11.0</div><div class="c" style="left:815px;top:100px;background:#89f47e;">12.3</div><div class="c" style="left:861px;top:100px;background:#8fed7e;">13.6</div><div class="c" style="left:907px;top:100px;background:#95e77d;">15.0</div><div class="c" style="left:953px;top:100px;background:#9ae17d;">16.2</div><div class="c" style="left:999px;top:100px;background:#a0db7c;">17.5</div><div class="c" style="left:1045px;top:100px;background:#a5d57c;">18.7</div><div class="c" style="left:1091px;top:100px;background:#aad07b;">19.9</div><div class="c" style="left:1137px;top:100px;background:#afca7b;">21.1</div><div class="c" style="left:1183px;top:100px;background:#b1c87a;">21.4</div><div class="c" style="left:1229px;top:100px;background:#b2c77a;">21.8</div><div class="c" style="left:1275px;top:100px;background:#b4c57a;">22.1</div><div class="c" style="left:1321px;top:100px;background:#b7c27a;">22.8</div><div class="c" style="left:1367px;top:100px;background:#bdbb79;">24.2</div><div class="c" style="left:1413px;top:100px;background:#c0b879;">24.9</div><div class="c" style="left:1459px;top:100px;background:#c4b378;">25.9</div><div class="c" style="left:1505px;top:100px;background:#c7b078;">26.5</div><div class="c" style="left:1551px;top:100px;background:#c9ae78;">27.0</div><div class="hr" style="left:401px;top:115px;width:40px;height:11px;background:#f0f0f0">2.2</div><div class="c" style="left:447px;top:115px;background:#80fe7f;">10.2</div><div class="c" style="left:493px;top:115px;background:#80fe7f;">10.2</div><div class="c" style="left:539px;top:115px;background:#80ff80;">10.0</div><div class="c" style="left:585px;top:115px;background:#80ff80;">10.0</div><div class="c" style="left:631px;top:115px;background:#80ff80;">10.0</div><div class="c" style="left:677px;top:115px;background:#80fe7f;">10.1</div><div class="c" style="left:723px;top:115px;background:#80ff80;">10.0</div><div class="c" style="left:769px;top:115px;background:#84fa7f;">11.0</div><div class="c" style="left:815px;top:115px;background:#89f47e;">12.3</div><div class="c" style="left:861px;top:115px;background:#8fed7e;">13.6</div><div class="c" style="left:907px;top:115px;background:#95e67d;">15.1</div><div class="c" style="left:953px;top:115px;background:#9be07d;">16.4</div><div class="c" style="left:999px;top:115px;background:#a0da7c;">17.6</div><div class="c" style="left:1045px;top:115px;background:#a5d57c;">18.8</div><div class="c" style="left:1091px;top:115px;background:#abcf7b;">20.0</div><div class="c" style="left:1137px;top:115px;background:#b0c97b;">21.2</div><div class="c" style="left:1183px;top:115px;background:#b1c87a;">21.4</div><div class="c" style="left:1229px;top:115px;background:#b2c77a;">21.8</div><div class="c" style="left:1275px;top:115px;background:#b4c57a;">22.1</div><div class="c" style="left:1321px;top:115px;background:#b7c27a;">22.8</div><div class="c" style="left:1367px;top:115px;background:#bdbb79;">24.2</div><div class="c" style="left:1413px;top:115px;background:#c0b879;">24.9</div><div class="c" style="left:1459px;top:115px;background:#c4b378;">25.9</div><div class="c" style="left:1505px;top:115px;background:#c7b078;">26.6</div><div class="c" style="left:1551px;top:115px;background:#c9ad78;">27.1</div><div class="hr" style="left:401px;top:130px;width:40px;height:11px;background:#f0f0f0">3.3</div><div class="c" style="left:447px;top:130px;background:#80fe7f;">10.1</div><div class="c" style="left:493px;top:130px;background:#80fe7f;">10.1</div><div class="c" style="left:539px;top:130px;background:#80ff80;">10.0</div><div class="c" style="left:585px;top:130px;background:#80ff80;">10.0</div><div class="c" style="left:631px;top:130px;background:#80ff80;">10.0</div><div class="c" style="left:677px;top:130px;background:#80fe7f;">10.1</div><div class="c" style="left:723px;top:130px;background:#80ff80;">10.0</div><div class="c" style="left:769px;top:130px;background:#84fa7f;">11.0</div><div class="c" style="left:815px;top:130px;background:#89f47e;">12.3</div><div class="c" style="left:861px;top:130px;background:#8fed7e;">13.6</div><div class="c" style="left:907px;top:130px;background:#96e67d;">15.2</div><div class="c" style="left:953px;top:130px;background:#9be07d;">16.5</div><div class="c" style="left:999px;top:130px;background:#a1da7c;">17.7</div><div class="c" style="left:1045px;top:130px;background:#a6d47c;">18.9</div><div class="c" style="left:1091px;top:130px;background:#abce7b;">20.2</div><div class="c" style="left:1137px;top:130px;background:#b0c97b;">21.3</div><div class="c" style="left:1183px;top:130px;background:#b1c87a;">21.4</div><div class="c" style="left:1229px;top:130px;background:#b2c77a;">21.8</div><div class="c" style="left:1275px;top:130px;background:#b4c57a;">22.1</div><div class="c" style="left:1321px;top:130px;background:#b7c27a;">22.8</div><div class="c" style="left:1367px;top:130px;background:#bdbb79;">24.2</div><div class="c" style="left:1413px;top:130px;background:#c0b879;">24.9</div><div class="c" style="left:1459px;top:130px;background:#c4b378;">25.9</div><div class="c" style="left:1505px;top:130px;background:#c7af78;">26.7</div><div class="c" style="left:1551px;top:130px;background:#caad78;">27.2</div><div class="hr" style="left:401px;top:145px;width:40px;height:11px;background:#f0f0f0">4.5</div><div class="c" style="left:447px;top:145px;background:#80ff80;">10.0</div><div class="c" style="left:493px;top:145px;background:#80ff80;">10.0</div><div class="c" style="left:539px;top:145px;background:#80ff80;">10.0</div><div class="c" style="left:585px;top:145px;background:#80ff80;">10.0</div><div class="c" style="left:631px;top:145px;background:#80ff80;">10.0</div><div class="c" style="left:677px;top:145px;background:#80fe7f;">10.1</div><div class="c" style="left:723px;top:145px;background:#80ff80;">10.0</div><div class="c" style="left:769px;top:145px;background:#84fa7f;">11.0</div><div class="c" style="left:815px;top:145px;background:#89f47e;">12.3</div><div class="c" style="left:861px;top:145px;background:#8fed7e;">13.6</div><div class="c" style="left:907px;top:145px;background:#96e57d;">15.3</div><div class="c" style="left:953px;top:145px;background:#9cdf7d;">16.7</div><div class="c" style="left:999px;top:145px;background:#a2d97c;">17.9</div><div class="c" style="left:1045px;top:145px;background:#a6d47c;">19.0</div><div class="c" style="left:1091px;top:145px;background:#acce7b;">20.3</div><div class="c" style="left:1137px;top:145px;background:#b1c87a;">21.5</div><div class="c" style="left:1183px;top:145px;background:#b1c87a;">21.4</div><div class="c" style="left:1229px;top:145px;background:#b2c77a;">21.8</div><div class="c" style="left:1275px;top:145px;background:#b4c57a;">22.1</div><div class="c" style="left:1321px;top:145px;background:#b7c27a;">22.8</div><div class="c" style="left:1367px;top:145px;background:#bdbb79;">24.2</div><div class="c" style="left:1413px;top:145px;background:#c0b879;">24.9</div><div class="c" style="left:1459px;top:145px;background:#c4b378;">25.9</div><div class="c" style="left:1505px;top:145px;background:#c8ae78;">26.9</div><div class="c" style="left:1551px;top:145px;background:#caac78;">27.3</div><div class="hr" style="left:401px;top:160px;width:40px;height:11px;background:#f0f0f0">6.6</div><div class="c" style="left:447px;top:160px;background:#80fe7f;">10.2</div><div class="c" style="left:493px;top:160px;background:#80fe7f;">10.2</div><div class="c" style="left:539px;top:160px;background:#80ff80;">10.0</div><div class="c" style="left:585px;top:160px;background:#80ff80;">10.0</div><div class="c" style="left:631px;top:160px;background:#80ff80;">10.0</div><div class="c" style="left:677px;top:160px;background:#80fe7f;">10.1</div><div class="c" style="left:723px;top:160px;background:#80ff80;">10.0</div><div class="c" style="left:769px;top:160px;background:#84fa7f;">11.0</div><div class="c" style="left:815px;top:160px;background:#89f47e;">12.3</div><div class="c" style="left:861px;top:160px;background:#90ec7e;">13.8</div><div class="c" style="left:907px;top:160px;background:#98e47d;">15.6</div><div class="c" style="left:953px;top:160px;background:#9edd7c;">17.1</div><div class="c" style="left:999px;top:160px;background:#a3d77c;">18.3</div><div class="c" style="left:1045px;top:160px;background:#a8d27b;">19.4</div><div class="c" style="left:1091px;top:160px;background:#adcc7b;">20.6</div><div class="c" style="left:1137px;top:160px;background:#b2c77a;">21.8</div><div class="c" style="left:1183px;top:160px;background:#b2c77a;">21.8</div><div class="c" style="left:1229px;top:160px;background:#b2c77a;">21.8</div><div class="c" style="left:1275px;top:160px;background:#b4c57a;">22.1</div><div class="c" style="left:1321px;top:160px;background:#b7c27a;">22.8</div><div class="c" style="left:1367px;top:160px;background:#bdbb79;">24.2</div><div class="c" style="left:1413px;top:160px;background:#c0b879;">24.9</div><div class="c" style="left:1459px;top:160px;background:#c4b378;">25.9</div><div class="c" style="left:1505px;top:160px;background:#caad78;">27.2</div><div class="c" style="left:1551px;top:160px;background:#cbab78;">27.6</div><div class="hr" style="left:401px;top:175px;width:40px;height:11px;background:#f0f0f0">8.8</div><div class="c" style="left:447px;top:175px;background:#80ff80;">10.0</div><div class="c" style="left:493px;top:175px;background:#80ff80;">10.0</div><div class="c" style="left:539px;top:175px;background:#80ff80;">10.0</div><div class="c" style="left:585px;top:175px;background:#80ff80;">10.0</div><div class="c" style="left:631px;top:175px;background:#80ff80;">10.0</div><div class="c" style="left:677px;top:175px;background:#80fe7f;">10.1</div><div class="c" style="left:723px;top:175px;background:#80ff80;">10.0</div><div class="c" style="left:769px;top:175px;background:#84fa7f;">11.0</div><div class="c" style="left:815px;top:175px;background:#89f47e;">12.3</div><div class="c" style="left:861px;top:175px;background:#90ec7e;">13.9</div><div class="c" style="left:907px;top:175px;background:#98e37d;">15.8</div><div class="c" style="left:953px;top:175px;background:#9fdb7c;">17.4</div><div class="c" style="left:999px;top:175px;background:#a5d57c;">18.7</div><div class="c" style="left:1045px;top:175px;background:#a9d07b;">19.7</div><div class="c" style="left:1091px;top:175px;background:#afca7b;">21.0</div><div class="c" style="left:1137px;top:175px;background:#b3c67a;">22.0</div><div class="c" style="left:1183px;top:175px;background:#b3c67a;">22.0</div><div class="c" style="left:1229px;top:175px;background:#b2c77a;">21.8</div><div class="c" style="left:1275px;top:175px;background:#b4c57a;">22.1</div><div class="c" style="left:1321px;top:175px;background:#b7c27a;">22.8</div><div class="c" style="left:1367px;top:175px;background:#bdbb79;">24.2</div><div class="c" style="left:1413px;top:175px;background:#c0b879;">24.9</div><div class="c" style="left:1459px;top:175px;background:#c4b378;">25.9</div><div class="c" style="left:1505px;top:175px;background:#cbab78;">27.6</div><div class="c" style="left:1551px;top:175px;background:#cda978;">28.0</div><div class="hr" style="left:401px;top:190px;width:40px;height:11px;background:#f0f0f0">11.1</div><div class="c" style="left:447px;top:190px;background:#80ff80;">10.0</div><div class="c" style="left:493px;top:190px;background:#80ff80;">10.0</div><div class="c" style="left:539px;top:190px;background:#80ff80;">10.0</div><div class="c" style="left:585px;top:190px;background:#80ff80;">10.0</div><div class="c" style="left:631px;top:190px;background:#80ff80;">10.0</div><div class="c" style="left:677px;top:190px;background:#80ff80;">10.0</div><div class="c" style="left:723px;top:190px;background:#80ff80;">10.0</div><div class="c" style="left:769px;top:190px;background:#84fa7f;">11.0</div><div class="c" style="left:815px;top:190px;background:#89f47e;">12.3</div><div class="c" style="left:861px;top:190px;background:#91ec7e;">14.0</div><div class="c" style="left:907px;top:190px;background:#9ae27d;">16.1</div><div class="c" style="left:953px;top:190px;background:#a2d97c;">17.9</div><div class="c" style="left:999px;top:190px;background:#a7d37b;">19.2</div><div class="c" style="left:1045px;top:190px;background:#abcf7b;">20.1</div><div class="c" style="left:1091px;top:190px;background:#b1c87a;">21.4</div><div class="c" style="left:1137px;top:190px;background:#b5c37a;">22.5</div><div class="c" style="left:1183px;top:190px;background:#b5c37a;">22.5</div><div class="c" style="left:1229px;top:190px;background:#b2c77a;">21.8</div><div class="c" style="left:1275px;top:190px;background:#b4c57a;">22.1</div><div class="c" style="left:1321px;top:190px;background:#b8c07a;">23.2</div><div class="c" style="left:1367px;top:190px;background:#bfb979;">24.7</div><div class="c" style="left:1413px;top:190px;background:#c2b579;">25.4</div><div class="c" style="left:1459px;top:190px;background:#c8ae78;">26.9</div><div class="c" style="left:1505px;top:190px;background:#cda978;">28.1</div><div class="c" style="left:1551px;top:190px;background:#cfa777;">28.5</div><div class="hr" style="left:401px;top:205px;width:40px;height:11px;background:#f0f0f0">13.3</div><div class="c" style="left:447px;top:205px;background:#80ff80;">10.0</div><div class="c" style="left:493px;top:205px;background:#80ff80;">10.0</div><div class="c" style="left:539px;top:205px;background:#80ff80;">10.0</div><div class="c" style="left:585px;top:205px;background:#80ff80;">10.0</div><div class="c" style="left:631px;top:205px;background:#80ff80;">10.0</div><div class="c" style="left:677px;top:205px;background:#80ff80;">10.0</div><div class="c" style="left:723px;top:205px;background:#80ff80;">10.0</div><div class="c" style="left:769px;top:205px;background:#84fa7f;">11.0</div><div class="c" style="left:815px;top:205px;background:#89f47e;">12.3</div><div class="c" style="left:861px;top:205px;background:#92ea7e;">14.3</div><div class="c" style="left:907px;top:205px;background:#9be17d;">16.3</div><div class="c" style="left:953px;top:205px;background:#a3d77c;">18.3</div><div class="c" style="left:999px;top:205px;background:#a9d17b;">19.6</div><div class="c" style="left:1045px;top:205px;background:#adcd7b;">20.5</div><div class="c" style="left:1091px;top:205px;background:#b2c77a;">21.8</div><div class="c" style="left:1137px;top:205px;background:#b7c17a;">23.0</div><div class="c" style="left:1183px;top:205px;background:#b7c17a;">23.0</div><div class="c" style="left:1229px;top:205px;background:#b2c77a;">21.8</div><div class="c" style="left:1275px;top:205px;background:#b4c57a;">22.1</div><div class="c" style="left:1321px;top:205px;background:#babe7a;">23.5</div><div class="c" style="left:1367px;top:205px;background:#c1b679;">25.2</div><div class="c" style="left:1413px;top:205px;background:#c4b378;">26.0</div><div class="c" style="left:1459px;top:205px;background:#caac78;">27.4</div><div class="c" style="left:1505px;top:205px;background:#d0a577;">28.8</div><div class="c" style="left:1551px;top:205px;background:#d2a477;">29.1</div><div class="hr" style="left:401px;top:220px;width:40px;height:11px;background:#f0f0f0">15.6</div><div class="c" style="left:447px;top:220px;background:#80ff80;">10.0</div><div class="c" style="left:493px;top:220px;background:#80ff80;">10.0</div><div class="c" style="left:539px;top:220px;background:#80ff80;">10.0</div><div class="c" style="left:585px;top:220px;background:#80ff80;">10.0</div><div class="c" style="left:631px;top:220px;background:#80ff80;">10.0</div><div class="c" style="left:677px;top:220px;background:#80ff80;">10.0</div><div class="c" style="left:723px;top:220px;background:#80ff80;">10.0</div><div class="c" style="left:769px;top:220px;background:#84f97f;">11.1</div><div class="c" style="left:815px;top:220px;background:#8af37e;">12.5</div><div class="c" style="left:861px;top:220px;background:#93e97e;">14.5</div><div class="c" style="left:907px;top:220px;background:#9cdf7d;">16.6</div><div class="c" style="left:953px;top:220px;background:#a5d57c;">18.8</div><div class="c" style="left:999px;top:220px;background:#abcf7b;">20.1</div><div class="c" style="left:1045px;top:220px;background:#afca7b;">21.1</div><div class="c" style="left:1091px;top:220px;background:#b5c47a;">22.4</div><div class="c" style="left:1137px;top:220px;background:#babe7a;">23.6</div><div class="c" style="left:1183px;top:220px;background:#babe7a;">23.6</div><div class="c" style="left:1229px;top:220px;background:#b2c77a;">21.8</div><div class="c" style="left:1275px;top:220px;background:#b4c57a;">22.1</div><div class="c" style="left:1321px;top:220px;background:#bcbc79;">24.0</div><div class="c" style="left:1367px;top:220px;background:#c5b278;">26.2</div><div class="c" style="left:1413px;top:220px;background:#c9ae78;">27.0</div><div class="c" style="left:1459px;top:220px;background:#cfa777;">28.5</div><div class="c" style="left:1505px;top:220px;background:#d6a077;">30.0</div><div class="c" style="left:1551px;top:220px;background:#d69f77;">30.2</div><div class="hr" style="left:401px;top:235px;width:40px;height:11px;background:#f0f0f0">18.9</div><div class="c" style="left:447px;top:235px;background:#81fd7f;">10.3</div><div class="c" style="left:493px;top:235px;background:#81fd7f;">10.3</div><div class="c" style="left:539px;top:235px;background:#81fd7f;">10.3</div><div class="c" style="left:585px;top:235px;background:#81fd7f;">10.3</div><div class="c" style="left:631px;top:235px;background:#81fd7f;">10.3</div><div class="c" style="left:677px;top:235px;background:#81fd7f;">10.3</div><div class="c" style="left:723px;top:235px;background:#82fc7f;">10.6</div><div class="c" style="left:769px;top:235px;background:#85f87f;">11.3</div><div class="c" style="left:815px;top:235px;background:#8cf17e;">12.8</div><div class="c" style="left:861px;top:235px;background:#95e77d;">15.0</div><div class="c" style="left:907px;top:235px;background:#9fdc7c;">17.3</div><div class="c" style="left:953px;top:235px;background:#a9d17b;">19.6</div><div class="c" style="left:999px;top:235px;background:#aecb7b;">20.9</div><div class="c" style="left:1045px;top:235px;background:#b4c47a;">22.3</div><div class="c" style="left:1091px;top:235px;background:#b9bf7a;">23.4</div><div class="c" style="left:1137px;top:235px;background:#bdbb79;">24.2</div><div class="c" style="left:1183px;top:235px;background:#bdbb79;">24.3</div><div class="c" style="left:1229px;top:235px;background:#b8c07a;">23.1</div><div class="c" style="left:1275px;top:235px;background:#babe7a;">23.6</div><div class="c" style="left:1321px;top:235px;background:#c1b679;">25.2</div><div class="c" style="left:1367px;top:235px;background:#cda978;">28.1</div><div class="c" style="left:1413px;top:235px;background:#d3a277;">29.4</div><div class="c" style="left:1459px;top:235px;background:#d89d76;">30.5</div><div class="c" style="left:1505px;top:235px;background:#dc9876;">31.5</div><div class="c" style="left:1551px;top:235px;background:#dc9876;">31.6</div><div class="hr" style="left:401px;top:250px;width:40px;height:11px;background:#f0f0f0">22.3</div><div class="c" style="left:447px;top:250px;background:#84fa7f;">11.0</div><div class="c" style="left:493px;top:250px;background:#84fa7f;">11.0</div><div class="c" style="left:539px;top:250px;background:#84fa7f;">11.0</div><div class="c" style="left:585px;top:250px;background:#84fa7f;">11.0</div><div class="c" style="left:631px;top:250px;background:#84fa7f;">11.0</div><div class="c" style="left:677px;top:250px;background:#84fa7f;">11.0</div><div class="c" style="left:723px;top:250px;background:#85f97f;">11.2</div><div class="c" style="left:769px;top:250px;background:#88f57f;">12.0</div><div class="c" style="left:815px;top:250px;background:#8eee7e;">13.4</div><div class="c" style="left:861px;top:250px;background:#98e37d;">15.7</div><div class="c" style="left:907px;top:250px;background:#a2d97c;">18.0</div><div class="c" style="left:953px;top:250px;background:#acce7b;">20.3</div><div class="c" style="left:999px;top:250px;background:#b3c67a;">22.0</div><div class="c" style="left:1045px;top:250px;background:#babe7a;">23.5</div><div class="c" style="left:1091px;top:250px;background:#c0b879;">24.9</div><div class="c" style="left:1137px;top:250px;background:#c4b378;">25.9</div><div class="c" style="left:1183px;top:250px;background:#c5b278;">26.2</div><div class="c" style="left:1229px;top:250px;background:#c0b779;">25.0</div><div class="c" style="left:1275px;top:250px;background:#c2b579;">25.5</div><div class="c" style="left:1321px;top:250px;background:#caad78;">27.2</div><div class="c" style="left:1367px;top:250px;background:#d79e77;">30.3</div><div class="c" style="left:1413px;top:250px;background:#dc9976;">31.4</div><div class="c" style="left:1459px;top:250px;background:#e09476;">32.5</div><div class="c" style="left:1505px;top:250px;background:#e58f75;">33.5</div><div class="c" style="left:1551px;top:250px;background:#e58f75;">33.6</div><div class="hr" style="left:401px;top:265px;width:40px;height:11px;background:#f0f0f0">27.8</div><div class="c" style="left:447px;top:265px;background:#86f77f;">11.5</div><div class="c" style="left:493px;top:265px;background:#86f77f;">11.5</div><div class="c" style="left:539px;top:265px;background:#86f77f;">11.5</div><div class="c" style="left:585px;top:265px;background:#86f77f;">11.5</div><div class="c" style="left:631px;top:265px;background:#86f77f;">11.5</div><div class="c" style="left:677px;top:265px;background:#86f77f;">11.5</div><div class="c" style="left:723px;top:265px;background:#88f57f;">12.0</div><div class="c" style="left:769px;top:265px;background:#8cf17e;">12.8</div><div class="c" style="left:815px;top:265px;background:#92ea7e;">14.3</div><div class="c" style="left:861px;top:265px;background:#9cdf7d;">16.7</div><div class="c" style="left:907px;top:265px;background:#a7d37b;">19.1</div><div class="c" style="left:953px;top:265px;background:#b2c77a;">21.7</div><div class="c" style="left:999px;top:265px;background:#bbbd79;">23.8</div><div class="c" style="left:1045px;top:265px;background:#c2b579;">25.4</div><div class="c" style="left:1091px;top:265px;background:#c8ae78;">26.9</div><div class="c" style="left:1137px;top:265px;background:#cda978;">28.0</div><div class="c" style="left:1183px;top:265px;background:#cda978;">28.1</div><div class="c" style="left:1229px;top:265px;background:#cfa777;">28.4</div><div class="c" style="left:1275px;top:265px;background:#d2a377;">29.2</div><div class="c" style="left:1321px;top:265px;background:#d89d76;">30.6</div><div class="c" style="left:1367px;top:265px;background:#de9676;">32.0</div><div class="c" style="left:1413px;top:265px;background:#e29275;">32.8</div><div class="c" style="left:1459px;top:265px;background:#e68e75;">33.7</div><div class="c" style="left:1505px;top:265px;background:#ea8975;">34.7</div><div class="c" style="left:1551px;top:265px;background:#ea8975;">34.8</div><div class="hr" style="left:401px;top:280px;width:40px;height:11px;background:#f0f0f0">33.4</div><div class="c" style="left:447px;top:280px;background:#89f57f;">12.1</div><div class="c" style="left:493px;top:280px;background:#89f57f;">12.1</div><div class="c" style="left:539px;top:280px;background:#89f57f;">12.1</div><div class="c" style="left:585px;top:280px;background:#89f57f;">12.1</div><div class="c" style="left:631px;top:280px;background:#89f57f;">12.1</div><div class="c" style="left:677px;top:280px;background:#89f57f;">12.1</div><div class="c" style="left:723px;top:280px;background:#8bf27e;">12.7</div><div class="c" style="left:769px;top:280px;background:#8fed7e;">13.6</div><div class="c" style="left:815px;top:280px;background:#95e67d;">15.1</div><div class="c" style="left:861px;top:280px;background:#a1da7c;">17.7</div><div class="c" style="left:907px;top:280px;background:#abcf7b;">20.0</div><div class="c" style="left:953px;top:280px;background:#b8c07a;">23.2</div><div class="c" style="left:999px;top:280px;background:#c1b679;">25.3</div><div class="c" style="left:1045px;top:280px;background:#c9ad78;">27.1</div><div class="c" style="left:1091px;top:280px;background:#d0a677;">28.6</div><div class="c" style="left:1137px;top:280px;background:#d4a177;">29.6</div><div class="c" style="left:1183px;top:280px;background:#d89d76;">30.6</div><div class="c" style="left:1229px;top:280px;background:#db9a76;">31.2</div><div class="c" style="left:1275px;top:280px;background:#df9676;">32.1</div><div class="c" style="left:1321px;top:280px;background:#e19375;">32.7</div><div class="c" style="left:1367px;top:280px;background:#e39075;">33.2</div><div class="c" style="left:1413px;top:280px;background:#e68d75;">33.9</div><div class="c" style="left:1459px;top:280px;background:#e98b75;">34.4</div><div class="c" style="left:1505px;top:280px;background:#ec8774;">35.2</div><div class="c" style="left:1551px;top:280px;background:#ec8674;">35.3</div><div class="hr" style="left:401px;top:295px;width:40px;height:11px;background:#f0f0f0">38.9</div><div class="c" style="left:447px;top:295px;background:#8eef7e;">13.3</div><div class="c" style="left:493px;top:295px;background:#8eef7e;">13.3</div><div class="c" style="left:539px;top:295px;background:#8eef7e;">13.3</div><div class="c" style="left:585px;top:295px;background:#8eef7e;">13.3</div><div class="c" style="left:631px;top:295px;background:#8eef7e;">13.3</div><div class="c" style="left:677px;top:295px;background:#8eef7e;">13.3</div><div class="c" style="left:723px;top:295px;background:#90ec7e;">13.9</div><div class="c" style="left:769px;top:295px;background:#94e87d;">14.8</div><div class="c" style="left:815px;top:295px;background:#9be07d;">16.4</div><div class="c" style="left:861px;top:295px;background:#a6d47c;">18.9</div><div class="c" style="left:907px;top:295px;background:#b0c97b;">21.3</div><div class="c" style="left:953px;top:295px;background:#beb979;">24.6</div><div class="c" style="left:999px;top:295px;background:#c9ad78;">27.1</div><div class="c" style="left:1045px;top:295px;background:#d2a477;">29.1</div><div class="c" style="left:1091px;top:295px;background:#d79e77;">30.3</div><div class="c" style="left:1137px;top:295px;background:#da9b76;">31.0</div><div class="c" style="left:1183px;top:295px;background:#dc9876;">31.6</div><div class="c" style="left:1229px;top:295px;background:#de9676;">32.0</div><div class="c" style="left:1275px;top:295px;background:#e29275;">32.8</div><div class="c" style="left:1321px;top:295px;background:#e49075;">33.3</div><div class="c" style="left:1367px;top:295px;background:#e68e75;">33.7</div><div class="c" style="left:1413px;top:295px;background:#e88b75;">34.3</div><div class="c" style="left:1459px;top:295px;background:#e98a75;">34.6</div><div class="c" style="left:1505px;top:295px;background:#eb8875;">34.9</div><div class="c" style="left:1551px;top:295px;background:#eb8875;">34.9</div><div class="hr" style="left:401px;top:310px;width:40px;height:11px;background:#f0f0f0">44.5</div><div class="c" style="left:447px;top:310px;background:#93e97d;">14.6</div><div class="c" style="left:493px;top:310px;background:#93e97d;">14.6</div><div class="c" style="left:539px;top:310px;background:#93e97d;">14.6</div><div class="c" style="left:585px;top:310px;background:#93e97d;">14.6</div><div class="c" style="left:631px;top:310px;background:#93e97d;">14.6</div><div class="c" style="left:677px;top:310px;background:#93e97d;">14.6</div><div class="c" style="left:723px;top:310px;background:#97e57d;">15.4</div><div class="c" style="left:769px;top:310px;background:#9ae17d;">16.2</div><div class="c" style="left:815px;top:310px;background:#a0da7c;">17.6</div><div class="c" style="left:861px;top:310px;background:#acce7b;">20.3</div><div class="c" style="left:907px;top:310px;background:#b7c17a;">22.9</div><div class="c" style="left:953px;top:310px;background:#c7b078;">26.5</div><div class="c" style="left:999px;top:310px;background:#d1a477;">29.0</div><div class="c" style="left:1045px;top:310px;background:#d89d76;">30.6</div><div class="c" style="left:1091px;top:310px;background:#dc9876;">31.5</div><div class="c" style="left:1137px;top:310px;background:#de9676;">32.0</div><div class="c" style="left:1183px;top:310px;background:#e09576;">32.3</div><div class="c" style="left:1229px;top:310px;background:#e19376;">32.6</div><div class="c" style="left:1275px;top:310px;background:#e39075;">33.2</div><div class="c" style="left:1321px;top:310px;background:#e68e75;">33.7</div><div class="c" style="left:1367px;top:310px;background:#e88c75;">34.2</div><div class="c" style="left:1413px;top:310px;background:#ea8975;">34.7</div><div class="c" style="left:1459px;top:310px;background:#eb8875;">34.9</div><div class="c" style="left:1505px;top:310px;background:#ea8975;">34.7</div><div class="c" style="left:1551px;top:310px;background:#ea8975;">34.7</div><div class="hr" style="left:401px;top:325px;width:40px;height:11px;background:#f0f0f0">55.5</div><div class="c" style="left:447px;top:325px;background:#97e47d;">15.5</div><div class="c" style="left:493px;top:325px;background:#97e47d;">15.5</div><div class="c" style="left:539px;top:325px;background:#97e47d;">15.5</div><div class="c" style="left:585px;top:325px;background:#97e47d;">15.5</div><div class="c" style="left:631px;top:325px;background:#97e47d;">15.5</div><div class="c" style="left:677px;top:325px;background:#97e47d;">15.5</div><div class="c" style="left:723px;top:325px;background:#9be07d;">16.4</div><div class="c" style="left:769px;top:325px;background:#a0db7c;">17.5</div><div class="c" style="left:815px;top:325px;background:#a6d47c;">18.9</div><div class="c" style="left:861px;top:325px;background:#b0c97b;">21.3</div><div class="c" style="left:907px;top:325px;background:#babd79;">23.7</div><div class="c" style="left:953px;top:325px;background:#c7af78;">26.7</div><div class="c" style="left:999px;top:325px;background:#d3a377;">29.3</div><div class="c" style="left:1045px;top:325px;background:#dc9876;">31.5</div><div class="c" style="left:1091px;top:325px;background:#e29275;">32.9</div><div class="c" style="left:1137px;top:325px;background:#e68e75;">33.7</div><div class="c" style="left:1183px;top:325px;background:#e78c75;">34.1</div><div class="c" style="left:1229px;top:325px;background:#e98a75;">34.5</div><div class="c" style="left:1275px;top:325px;background:#eb8875;">34.9</div><div class="c" style="left:1321px;top:325px;background:#ed8674;">35.4</div><div class="c" style="left:1367px;top:325px;background:#ef8374;">36.0</div><div class="c" style="left:1413px;top:325px;background:#f28174;">36.5</div><div class="c" style="left:1459px;top:325px;background:#f28074;">36.7</div><div class="c" style="left:1505px;top:325px;background:#f18274;">36.3</div><div class="c" style="left:1551px;top:325px;background:#ef8474;">35.9</div><div class="hr" style="left:401px;top:340px;width:40px;height:11px;background:#f0f0f0">66.6</div><div class="c" style="left:447px;top:340px;background:#9be07d;">16.4</div><div class="c" style="left:493px;top:340px;background:#9be07d;">16.4</div><div class="c" style="left:539px;top:340px;background:#9be07d;">16.4</div><div class="c" style="left:585px;top:340px;background:#9be07d;">16.4</div><div class="c" style="left:631px;top:340px;background:#9be07d;">16.4</div><div class="c" style="left:677px;top:340px;background:#9be07d;">16.4</div><div class="c" style="left:723px;top:340px;background:#9fdb7c;">17.4</div><div class="c" style="left:769px;top:340px;background:#a5d57c;">18.7</div><div class="c" style="left:815px;top:340px;background:#abce7b;">20.2</div><div class="c" style="left:861px;top:340px;background:#b4c57a;">22.2</div><div class="c" style="left:907px;top:340px;background:#beba79;">24.5</div><div class="c" style="left:953px;top:340px;background:#c8af78;">26.8</div><div class="c" style="left:999px;top:340px;background:#d4a177;">29.7</div><div class="c" style="left:1045px;top:340px;background:#e09576;">32.3</div><div class="c" style="left:1091px;top:340px;background:#e88b75;">34.3</div><div class="c" style="left:1137px;top:340px;background:#ec8774;">35.2</div><div class="c" style="left:1183px;top:340px;background:#ef8474;">35.8</div><div class="c" style="left:1229px;top:340px;background:#f08274;">36.2</div><div class="c" style="left:1275px;top:340px;background:#f28174;">36.5</div><div class="c" style="left:1321px;top:340px;background:#f37f74;">36.9</div><div class="c" style="left:1367px;top:340px;background:#f67c73;">37.5</div><div class="c" style="left:1413px;top:340px;background:#f87a73;">38.0</div><div class="c" style="left:1459px;top:340px;background:#f97873;">38.3</div><div class="c" style="left:1505px;top:340px;background:#f87a73;">38.0</div><div class="c" style="left:1551px;top:340px;background:#f37f74;">36.8</div><div class="hr" style="left:401px;top:355px;width:40px;height:11px;background:#f0f0f0">77.7</div><div class="c" style="left:447px;top:355px;background:#9dde7c;">16.9</div><div class="c" style="left:493px;top:355px;background:#9dde7c;">16.9</div><div class="c" style="left:539px;top:355px;background:#9dde7c;">16.9</div><div class="c" style="left:585px;top:355px;background:#9dde7c;">16.9</div><div class="c" style="left:631px;top:355px;background:#9dde7c;">16.9</div><div class="c" style="left:677px;top:355px;background:#9dde7c;">16.9</div><div class="c" style="left:723px;top:355px;background:#a2d97c;">18.0</div><div class="c" style="left:769px;top:355px;background:#a8d17b;">19.5</div><div class="c" style="left:815px;top:355px;background:#afca7b;">21.0</div><div class="c" style="left:861px;top:355px;background:#b7c27a;">22.8</div><div class="c" style="left:907px;top:355px;background:#c0b779;">25.0</div><div class="c" style="left:953px;top:355px;background:#c8ae78;">26.9</div><div class="c" style="left:999px;top:355px;background:#d5a077;">29.9</div><div class="c" style="left:1045px;top:355px;background:#e29275;">32.8</div><div class="c" style="left:1091px;top:355px;background:#ec8774;">35.1</div><div class="c" style="left:1137px;top:355px;background:#f08274;">36.2</div><div class="c" style="left:1183px;top:355px;background:#f37f74;">36.9</div><div class="c" style="left:1229px;top:355px;background:#f57c73;">37.4</div><div class="c" style="left:1275px;top:355px;background:#f67c73;">37.5</div><div class="c" style="left:1321px;top:355px;background:#f87973;">38.1</div><div class="c" style="left:1367px;top:355px;background:#fc7573;">38.9</div><div class="c" style="left:1413px;top:355px;background:#fe7373;">39.3</div><div class="c" style="left:1459px;top:355px;background:#fe7373;">39.3</div><div class="c" style="left:1505px;top:355px;background:#fe7373;">39.3</div><div class="c" style="left:1551px;top:355px;background:#f67c73;">37.5</div><div class="hr" style="left:401px;top:370px;width:40px;height:11px;background:#f0f0f0">88.9</div><div class="c" style="left:447px;top:370px;background:#9edd7c;">17.0</div><div class="c" style="left:493px;top:370px;background:#9edd7c;">17.0</div><div class="c" style="left:539px;top:370px;background:#9edd7c;">17.0</div><div class="c" style="left:585px;top:370px;background:#9edd7c;">17.0</div><div class="c" style="left:631px;top:370px;background:#9edd7c;">17.0</div><div class="c" style="left:677px;top:370px;background:#9edd7c;">17.0</div><div class="c" style="left:723px;top:370px;background:#a2d87c;">18.1</div><div class="c" style="left:769px;top:370px;background:#a9d17b;">19.6</div><div class="c" style="left:815px;top:370px;background:#afca7b;">21.1</div><div class="c" style="left:861px;top:370px;background:#b7c17a;">22.9</div><div class="c" style="left:907px;top:370px;background:#c1b779;">25.1</div><div class="c" style="left:953px;top:370px;background:#c8ae78;">26.9</div><div class="c" style="left:999px;top:370px;background:#d5a077;">29.9</div><div class="c" style="left:1045px;top:370px;background:#e29275;">32.9</div><div class="c" style="left:1091px;top:370px;background:#ec8674;">35.3</div><div class="c" style="left:1137px;top:370px;background:#f18174;">36.4</div><div class="c" style="left:1183px;top:370px;background:#f47e74;">37.1</div><div class="c" style="left:1229px;top:370px;background:#f67c73;">37.6</div><div class="c" style="left:1275px;top:370px;background:#f77b73;">37.7</div><div class="c" style="left:1321px;top:370px;background:#f97873;">38.3</div><div class="c" style="left:1367px;top:370px;background:#fc7573;">39.0</div><div class="c" style="left:1413px;top:370px;background:#ff7373;">39.5</div><div class="c" style="left:1459px;top:370px;background:#ff7373;">39.5</div><div class="c" style="left:1505px;top:370px;background:#ff7373;">39.5</div><div class="c" style="left:1551px;top:370px;background:#f97873;">38.3</div><div class="hr" style="left:401px;top:385px;width:40px;height:11px;background:#f0f0f0">100.0</div><div class="c" style="left:447px;top:385px;background:#9edd7c;">17.0</div><div class="c" style="left:493px;top:385px;background:#9edd7c;">17.0</div><div class="c" style="left:539px;top:385px;background:#9edd7c;">17.0</div><div class="c" style="left:585px;top:385px;background:#9edd7c;">17.0</div><div class="c" style="left:631px;top:385px;background:#9edd7c;">17.0</div><div class="c" style="left:677px;top:385px;background:#9edd7c;">17.0</div><div class="c" style="left:723px;top:385px;background:#a2d87c;">18.1</div><div class="c" style="left:769px;top:385px;background:#a9d17b;">19.6</div><div class="c" style="left:815px;top:385px;background:#afca7b;">21.1</div><div class="c" style="left:861px;top:385px;background:#b7c17a;">22.9</div><div class="c" style="left:907px;top:385px;background:#c1b779;">25.1</div><div class="c" style="left:953px;top:385px;background:#c8ae78;">26.9</div><div class="c" style="left:999px;top:385px;background:#d5a077;">29.9</div><div class="c" style="left:1045px;top:385px;background:#e29275;">32.9</div><div class="c" style="left:1091px;top:385px;background:#ec8674;">35.3</div><div class="c" style="left:1137px;top:385px;background:#f18174;">36.4</div><div class="c" style="left:1183px;top:385px;background:#f47e74;">37.1</div><div class="c" style="left:1229px;top:385px;background:#f67c73;">37.6</div><div class="c" style="left:1275px;top:385px;background:#f77b73;">37.7</div><div class="c" style="left:1321px;top:385px;background:#f97873;">38.3</div><div class="c" style="left:1367px;top:385px;background:#fc7573;">39.0</div><div class="c" style="left:1413px;top:385px;background:#ff7373;">39.5</div><div class="c" style="left:1459px;top:385px;background:#ff7373;">39.5</div><div class="c" style="left:1505px;top:385px;background:#ff7373;">39.5</div><div class="c" style="left:1551px;top:385px;background:#fa7873;">38.4</div><div class="a" style="left:399px;top:399px;width:1175px;height:31px;background:#404040"></div><div class="a" style="left:399px;top:430px;width:1175px;height:2px;background:#fff"></div><div class="a" style="left:399px;top:432px;width:1175px;height:23px;background:#f0f0f0"></div><div class="a" style="left:391px;top:462px;width:1183px;height:1px;background:#3a3a3a"></div><div class="a" style="left:426px;top:329px;width:864px;height:588px;border-radius:7px;box-shadow:0 3px 22px 2px rgba(0,0,0,0.42)"></div><div class="a" style="left:426px;top:329px;width:864px;height:588px;border-radius:7px;overflow:hidden;background:#fff"><div class="a" style="left:0;top:0;width:864px;height:29px;background:#eaf4f8"></div><div class="a" style="left:0;top:48px;width:864px;height:27px;background:#f0f0f0"></div><div class="a" style="left:0;top:565px;width:864px;height:1px;background:#d0d0d0"></div><div class="a" style="left:0;top:566px;width:864px;height:22px;background:#f0f0f0"></div><div class="a" style="left:129px;top:568px;width:1px;height:19px;background:#d8d8d8"></div><div class="a" style="left:259px;top:568px;width:1px;height:19px;background:#d8d8d8"></div><div class="a" style="left:389px;top:568px;width:1px;height:19px;background:#d8d8d8"></div></div><div class="a" style="left:1284px;top:903px;width:2px;height:2px;background:#b8b8b8"></div><div class="a" style="left:1284px;top:907px;width:2px;height:2px;background:#b8b8b8"></div><div class="a" style="left:1284px;top:911px;width:2px;height:2px;background:#b8b8b8"></div><div class="a" style="left:1280px;top:907px;width:2px;height:2px;background:#b8b8b8"></div><div class="a" style="left:1280px;top:911px;width:2px;height:2px;background:#b8b8b8"></div><div class="a" style="left:1276px;top:911px;width:2px;height:2px;background:#b8b8b8"></div><svg style="position:absolute;left:434px;top:337px" width="16" height="12" viewBox="0 0 16 12"><rect x="0" y="2" width="16" height="8" fill="#000"/><path d="M1.5 0V2M4.5 0V2M7.5 0V2M10.5 0V2M13.5 0V2M1.5 10V12M4.5 10V12M7.5 10V12M10.5 10V12M13.5 10V12" stroke="#000" stroke-width="1.2"/></svg><div class="tb" style="left:456px;top:335px;font-size:12px;line-height:16px;color:#000">Cyl3</div><div class="a" style="left:1171px;top:343px;width:10px;height:1px;background:#000"></div><div class="a" style="left:1216px;top:338px;width:8px;height:8px;border:1px solid #000;border-radius:1px"></div><svg class="a" style="left:1261px;top:337px" width="12" height="12"><path d="M1 1L11 11M11 1L1 11" stroke="#000" stroke-width="1"/></svg><div class="tb" style="left:433px;top:362px;font-size:12px;line-height:16px;color:#000">Graph</div><div class="tb" style="left:479px;top:362px;font-size:12px;line-height:16px;color:#000">View</div><div class="a" style="left:430px;top:381px;width:1px;height:20px;background:#c0c0c0"></div><div class="a" style="left:466px;top:381px;width:1px;height:20px;background:#c0c0c0"></div><svg class="a" style="left:440px;top:386px" width="12" height="13" viewBox="0 0 12 13"><path d="M1 1L11 12M11 1L1 12" stroke="#ff0000" stroke-width="2.2"/></svg><div class="a" style="left:472px;top:381px;width:21px;height:19px;background:#a8bcd0;border:1px solid #8fb4d8;border-radius:2px"></div><svg class="a" style="left:475px;top:383px" width="16" height="16" viewBox="0 0 16 16"><path d="M8 0L16 8L8 16L0 8Z" fill="#000"/><rect x="4" y="4" width="8" height="8" fill="#a8bcd0"/><path d="M8 4V12M4 8H12" stroke="#ff0000" stroke-width="1.5"/></svg><svg class="a" style="left:495px;top:383px" width="20" height="18" viewBox="495 383 20 18"><path d="M498,398.3L501.4,390.9L504.3,396.7L508.8,390.5L511.3,386.7L512.5,393.8" fill="none" stroke="#ff0000" stroke-width="1"/><g fill="none" stroke="#0000ff" stroke-width="1"><circle cx="501.4" cy="390.9" r="1.4"/><circle cx="504.3" cy="396.7" r="1.4"/><circle cx="508.8" cy="390.5" r="1.4"/><circle cx="511.3" cy="386.7" r="1.4"/><circle cx="512.5" cy="393.8" r="1.4"/></g></svg><div class="a" style="left:518px;top:381px;width:21px;height:19px;background:#cce4f7;border:1px solid #99c9ef;border-radius:2px"></div><svg class="a" style="left:521px;top:383px" width="16" height="15" viewBox="0 0 16 15"><path d="M0.5 1V14.5H16" fill="none" stroke="#000" stroke-dasharray="1,1"/><path d="M1 11L4 6L7 8L10 3L14 6" fill="none" stroke="#0000ff" stroke-width="1.3"/><path d="M1 13L5 9L8 11L12 7L15 9" fill="none" stroke="#ff0000" stroke-width="1.3"/></svg><svg class="a" style="left:545px;top:385px" width="16" height="13" viewBox="0 0 16 13"><path d="M4 1H15L12 5H1ZM1 5H12L9 9H0ZM0 9H10V12H0Z" fill="#fff" stroke="#000" stroke-width="1"/></svg><div class="a" style="left:564px;top:381px;width:21px;height:19px;background:#cce4f7;border:1px solid #99c9ef;border-radius:2px"></div><svg class="a" style="left:567px;top:383px" width="18" height="17" viewBox="567 383 18 17"><path d="M569,388.4H580.7" stroke="#ff0000" stroke-width="1.2"/><path d="M569,390.5H580.7" stroke="#808080" stroke-width="1.2"/><path d="M569,392.5H580.7" stroke="#ffff00" stroke-width="1.4"/><path d="M569,394.4H580.7" stroke="#00c000" stroke-width="1.2"/><path d="M569,396.3H580.7" stroke="#0000ff" stroke-width="1.2"/><path d="M582.4,385V399M582.4,385L579.5,389M582.4,399L579.5,396" fill="none" stroke="#000" stroke-width="1.3"/></svg><svg width="1574" height="919" style="position:absolute;left:0;top:0"><line x1="806.1" y1="852.3" x2="664.4" y2="761.0" stroke="#7c7c7c" stroke-width="0.9" stroke-dasharray="2.5,3.5"/><line x1="809.5" y1="851.6" x2="667.8" y2="760.3" stroke="#7c7c7c" stroke-width="0.9" stroke-dasharray="2.5,3.5"/><line x1="812.9" y1="850.8" x2="671.2" y2="759.5" stroke="#7c7c7c" stroke-width="0.9" stroke-dasharray="2.5,3.5"/><line x1="816.3" y1="850.1" x2="674.6" y2="758.8" stroke="#7c7c7c" stroke-width="0.9" stroke-dasharray="2.5,3.5"/><line x1="819.7" y1="849.4" x2="678.0" y2="758.1" stroke="#7c7c7c" stroke-width="0.9" stroke-dasharray="2.5,3.5"/><line x1="823.1" y1="848.6" x2="681.4" y2="757.3" stroke="#7c7c7c" stroke-width="0.9" stroke-dasharray="2.5,3.5"/><line x1="826.5" y1="847.9" x2="684.8" y2="756.6" stroke="#7c7c7c" stroke-width="0.9" stroke-dasharray="2.5,3.5"/><line x1="829.9" y1="847.2" x2="688.2" y2="755.9" stroke="#7c7c7c" stroke-width="0.9" stroke-dasharray="2.5,3.5"/><line x1="833.3" y1="846.4" x2="691.6" y2="755.1" stroke="#7c7c7c" stroke-width="0.9" stroke-dasharray="2.5,3.5"/><line x1="836.7" y1="845.7" x2="695.0" y2="754.4" stroke="#7c7c7c" stroke-width="0.9" stroke-dasharray="2.5,3.5"/><line x1="840.2" y1="845.0" x2="698.5" y2="753.7" stroke="#7c7c7c" stroke-width="0.9" stroke-dasharray="2.5,3.5"/><line x1="843.6" y1="844.2" x2="701.9" y2="752.9" stroke="#7c7c7c" stroke-width="0.9" stroke-dasharray="2.5,3.5"/><line x1="847.0" y1="843.5" x2="705.3" y2="752.2" stroke="#7c7c7c" stroke-width="0.9" stroke-dasharray="2.5,3.5"/><line x1="850.3" y1="842.8" x2="708.6" y2="751.5" stroke="#7c7c7c" stroke-width="0.9" stroke-dasharray="2.5,3.5"/><line x1="853.7" y1="842.0" x2="712.0" y2="750.7" stroke="#7c7c7c" stroke-width="0.9" stroke-dasharray="2.5,3.5"/><line x1="857.2" y1="841.3" x2="715.5" y2="750.0" stroke="#7c7c7c" stroke-width="0.9" stroke-dasharray="2.5,3.5"/><line x1="860.6" y1="840.6" x2="718.9" y2="749.3" stroke="#7c7c7c" stroke-width="0.9" stroke-dasharray="2.5,3.5"/><line x1="864.0" y1="839.8" x2="722.3" y2="748.5" stroke="#7c7c7c" stroke-width="0.9" stroke-dasharray="2.5,3.5"/><line x1="872.5" y1="838.0" x2="730.8" y2="746.7" stroke="#7c7c7c" stroke-width="0.9" stroke-dasharray="2.5,3.5"/><line x1="881.0" y1="836.2" x2="739.3" y2="744.9" stroke="#7c7c7c" stroke-width="0.9" stroke-dasharray="2.5,3.5"/><line x1="889.5" y1="834.3" x2="747.8" y2="743.0" stroke="#7c7c7c" stroke-width="0.9" stroke-dasharray="2.5,3.5"/><line x1="898.1" y1="832.5" x2="756.4" y2="741.2" stroke="#7c7c7c" stroke-width="0.9" stroke-dasharray="2.5,3.5"/><line x1="906.6" y1="830.7" x2="764.9" y2="739.4" stroke="#7c7c7c" stroke-width="0.9" stroke-dasharray="2.5,3.5"/><line x1="915.1" y1="828.8" x2="773.4" y2="737.5" stroke="#7c7c7c" stroke-width="0.9" stroke-dasharray="2.5,3.5"/><line x1="923.6" y1="827.0" x2="781.9" y2="735.7" stroke="#7c7c7c" stroke-width="0.9" stroke-dasharray="2.5,3.5"/><line x1="932.1" y1="825.2" x2="790.4" y2="733.9" stroke="#7c7c7c" stroke-width="0.9" stroke-dasharray="2.5,3.5"/><line x1="940.7" y1="823.3" x2="799.0" y2="732.0" stroke="#7c7c7c" stroke-width="0.9" stroke-dasharray="2.5,3.5"/><line x1="949.2" y1="821.5" x2="807.5" y2="730.2" stroke="#7c7c7c" stroke-width="0.9" stroke-dasharray="2.5,3.5"/><line x1="957.7" y1="819.7" x2="816.0" y2="728.4" stroke="#7c7c7c" stroke-width="0.9" stroke-dasharray="2.5,3.5"/><line x1="966.2" y1="817.8" x2="824.5" y2="726.5" stroke="#7c7c7c" stroke-width="0.9" stroke-dasharray="2.5,3.5"/><line x1="974.7" y1="816.0" x2="833.0" y2="724.7" stroke="#7c7c7c" stroke-width="0.9" stroke-dasharray="2.5,3.5"/><line x1="983.3" y1="814.2" x2="841.6" y2="722.9" stroke="#7c7c7c" stroke-width="0.9" stroke-dasharray="2.5,3.5"/><line x1="991.8" y1="812.3" x2="850.1" y2="721.0" stroke="#7c7c7c" stroke-width="0.9" stroke-dasharray="2.5,3.5"/><line x1="1000.3" y1="810.5" x2="858.6" y2="719.2" stroke="#7c7c7c" stroke-width="0.9" stroke-dasharray="2.5,3.5"/><line x1="1008.8" y1="808.7" x2="867.1" y2="717.4" stroke="#7c7c7c" stroke-width="0.9" stroke-dasharray="2.5,3.5"/><line x1="1017.3" y1="806.8" x2="875.6" y2="715.5" stroke="#7c7c7c" stroke-width="0.9" stroke-dasharray="2.5,3.5"/><line x1="1025.8" y1="805.0" x2="884.1" y2="713.7" stroke="#7c7c7c" stroke-width="0.9" stroke-dasharray="2.5,3.5"/><line x1="1034.4" y1="803.2" x2="892.7" y2="711.9" stroke="#7c7c7c" stroke-width="0.9" stroke-dasharray="2.5,3.5"/><line x1="1042.9" y1="801.3" x2="901.2" y2="710.0" stroke="#7c7c7c" stroke-width="0.9" stroke-dasharray="2.5,3.5"/><line x1="1051.4" y1="799.5" x2="909.7" y2="708.2" stroke="#7c7c7c" stroke-width="0.9" stroke-dasharray="2.5,3.5"/><line x1="806.1" y1="852.3" x2="1051.4" y2="799.5" stroke="#7c7c7c" stroke-width="0.9" stroke-dasharray="2.5,3.5"/><line x1="804.5" y1="851.3" x2="1049.8" y2="798.5" stroke="#7c7c7c" stroke-width="0.9" stroke-dasharray="2.5,3.5"/><line x1="803.0" y1="850.3" x2="1048.3" y2="797.5" stroke="#7c7c7c" stroke-width="0.9" stroke-dasharray="2.5,3.5"/><line x1="801.4" y1="849.3" x2="1046.7" y2="796.5" stroke="#7c7c7c" stroke-width="0.9" stroke-dasharray="2.5,3.5"/><line x1="799.7" y1="848.2" x2="1045.0" y2="795.4" stroke="#7c7c7c" stroke-width="0.9" stroke-dasharray="2.5,3.5"/><line x1="796.7" y1="846.3" x2="1042.0" y2="793.5" stroke="#7c7c7c" stroke-width="0.9" stroke-dasharray="2.5,3.5"/><line x1="793.6" y1="844.3" x2="1038.9" y2="791.5" stroke="#7c7c7c" stroke-width="0.9" stroke-dasharray="2.5,3.5"/><line x1="790.4" y1="842.2" x2="1035.7" y2="789.4" stroke="#7c7c7c" stroke-width="0.9" stroke-dasharray="2.5,3.5"/><line x1="787.3" y1="840.2" x2="1032.6" y2="787.4" stroke="#7c7c7c" stroke-width="0.9" stroke-dasharray="2.5,3.5"/><line x1="784.0" y1="838.1" x2="1029.3" y2="785.3" stroke="#7c7c7c" stroke-width="0.9" stroke-dasharray="2.5,3.5"/><line x1="779.3" y1="835.0" x2="1024.6" y2="782.2" stroke="#7c7c7c" stroke-width="0.9" stroke-dasharray="2.5,3.5"/><line x1="774.5" y1="831.9" x2="1019.8" y2="779.1" stroke="#7c7c7c" stroke-width="0.9" stroke-dasharray="2.5,3.5"/><line x1="766.7" y1="826.9" x2="1012.0" y2="774.1" stroke="#7c7c7c" stroke-width="0.9" stroke-dasharray="2.5,3.5"/><line x1="758.8" y1="821.8" x2="1004.1" y2="769.0" stroke="#7c7c7c" stroke-width="0.9" stroke-dasharray="2.5,3.5"/><line x1="751.0" y1="816.8" x2="996.3" y2="764.0" stroke="#7c7c7c" stroke-width="0.9" stroke-dasharray="2.5,3.5"/><line x1="743.0" y1="811.7" x2="988.3" y2="758.9" stroke="#7c7c7c" stroke-width="0.9" stroke-dasharray="2.5,3.5"/><line x1="727.5" y1="801.6" x2="972.8" y2="748.8" stroke="#7c7c7c" stroke-width="0.9" stroke-dasharray="2.5,3.5"/><line x1="711.7" y1="791.5" x2="957.0" y2="738.7" stroke="#7c7c7c" stroke-width="0.9" stroke-dasharray="2.5,3.5"/><line x1="696.0" y1="781.4" x2="941.3" y2="728.6" stroke="#7c7c7c" stroke-width="0.9" stroke-dasharray="2.5,3.5"/><line x1="680.1" y1="771.1" x2="925.4" y2="718.3" stroke="#7c7c7c" stroke-width="0.9" stroke-dasharray="2.5,3.5"/><line x1="664.4" y1="761.0" x2="909.7" y2="708.2" stroke="#7c7c7c" stroke-width="0.9" stroke-dasharray="2.5,3.5"/><line x1="664.4" y1="708.6" x2="909.7" y2="655.8" stroke="#8c8c8c" stroke-width="1" stroke-dasharray="3,3"/><line x1="909.7" y1="655.8" x2="1051.4" y2="747.1" stroke="#8c8c8c" stroke-width="1" stroke-dasharray="3,3"/><line x1="664.4" y1="656.2" x2="909.7" y2="603.4" stroke="#8c8c8c" stroke-width="1" stroke-dasharray="3,3"/><line x1="909.7" y1="603.4" x2="1051.4" y2="694.7" stroke="#8c8c8c" stroke-width="1" stroke-dasharray="3,3"/><line x1="664.4" y1="603.8" x2="909.7" y2="551.0" stroke="#8c8c8c" stroke-width="1" stroke-dasharray="3,3"/><line x1="909.7" y1="551.0" x2="1051.4" y2="642.3" stroke="#8c8c8c" stroke-width="1" stroke-dasharray="3,3"/><line x1="664.4" y1="551.4" x2="909.7" y2="498.6" stroke="#8c8c8c" stroke-width="1" stroke-dasharray="3,3"/><line x1="909.7" y1="498.6" x2="1051.4" y2="589.9" stroke="#8c8c8c" stroke-width="1" stroke-dasharray="3,3"/><line x1="664.4" y1="761.0" x2="664.4" y2="499.0" stroke="#8c8c8c" stroke-width="1"/><line x1="909.7" y1="708.2" x2="909.7" y2="446.2" stroke="#8c8c8c" stroke-width="1"/><line x1="1051.4" y1="799.5" x2="1051.4" y2="537.5" stroke="#8c8c8c" stroke-width="1"/><line x1="664.4" y1="499.0" x2="909.7" y2="446.2" stroke="#8c8c8c" stroke-width="1"/><line x1="909.7" y1="446.2" x2="1051.4" y2="537.5" stroke="#8c8c8c" stroke-width="1"/><line x1="909.7" y1="708.2" x2="1051.4" y2="799.5" stroke="#8c8c8c" stroke-width="1"/><line x1="664.4" y1="761.0" x2="909.7" y2="708.2" stroke="#8c8c8c" stroke-width="1"/><line x1="806.1" y1="852.3" x2="664.4" y2="761.0" stroke="#8c8c8c" stroke-width="1"/><line x1="806.1" y1="852.3" x2="1051.4" y2="799.5" stroke="#8c8c8c" stroke-width="1"/><g stroke="#000" stroke-width="1" stroke-linejoin="round"><path d="M916.9,547.0L925.4,542.5L909.7,545.7L901.2,548.4Z" fill="#00f716"/><path d="M908.4,550.6L916.9,547.0L901.2,548.4L892.7,552.0Z" fill="#00f71a"/><path d="M899.9,553.3L908.4,550.6L892.7,552.0L884.1,553.8Z" fill="#00f71c"/><path d="M891.4,555.1L899.9,553.3L884.1,553.8L875.6,552.1Z" fill="#00f71b"/><path d="M882.8,556.1L891.4,555.1L875.6,552.1L867.1,549.5Z" fill="#00f716"/><path d="M874.3,556.1L882.8,556.1L867.1,549.5L858.6,547.8Z" fill="#00f711"/><path d="M932.8,543.9L941.3,542.1L925.4,542.5L916.9,547.0Z" fill="#01f700"/><path d="M865.8,554.4L874.3,556.1L858.6,547.8L850.1,544.3Z" fill="#00f70a"/><path d="M924.3,546.6L932.8,543.9L916.9,547.0L908.4,550.6Z" fill="#00f700"/><path d="M857.3,550.9L865.8,554.4L850.1,544.3L841.6,539.9Z" fill="#00f700"/><path d="M915.7,549.3L924.3,546.6L908.4,550.6L899.9,553.3Z" fill="#00f703"/><path d="M848.8,546.6L857.3,550.9L841.6,539.9L833.0,534.6Z" fill="#0cf700"/><path d="M907.2,551.2L915.7,549.3L899.9,553.3L891.4,555.1Z" fill="#00f704"/><path d="M840.2,540.4L848.8,546.6L833.0,534.6L824.5,528.5Z" fill="#1bf700"/><path d="M898.7,553.0L907.2,551.2L891.4,555.1L882.8,556.1Z" fill="#00f703"/><path d="M831.7,531.6L840.2,540.4L824.5,528.5L816.0,519.7Z" fill="#2ef700"/><path d="M890.2,553.1L898.7,553.0L882.8,556.1L874.3,556.1Z" fill="#00f701"/><path d="M823.2,521.9L831.7,531.6L816.0,519.7L807.5,509.9Z" fill="#46f701"/><path d="M948.5,546.9L957.0,545.1L941.3,542.1L932.8,543.9Z" fill="#15f700"/><path d="M881.7,552.2L890.2,553.1L874.3,556.1L865.8,554.4Z" fill="#03f700"/><path d="M814.7,513.0L823.2,521.9L807.5,509.9L799.0,501.1Z" fill="#5df705"/><path d="M940.0,549.6L948.5,546.9L932.8,543.9L924.3,546.6Z" fill="#14f700"/><path d="M873.2,550.5L881.7,552.2L865.8,554.4L857.3,550.9Z" fill="#0bf700"/><path d="M806.2,504.2L814.7,513.0L799.0,501.1L790.4,492.3Z" fill="#6ef709"/><path d="M931.5,551.5L940.0,549.6L924.3,546.6L915.7,549.3Z" fill="#13f700"/><path d="M864.6,548.8L873.2,550.5L857.3,550.9L848.8,546.6Z" fill="#14f700"/><path d="M797.7,494.5L806.2,504.2L790.4,492.3L781.9,483.5Z" fill="#7ef70d"/><path d="M923.0,553.3L931.5,551.5L915.7,549.3L907.2,551.2Z" fill="#12f700"/><path d="M856.1,546.2L864.6,548.8L848.8,546.6L840.2,540.4Z" fill="#20f700"/><path d="M789.1,485.7L797.7,494.5L781.9,483.5L773.4,475.5Z" fill="#8df711"/><path d="M914.4,555.1L923.0,553.3L907.2,551.2L898.7,553.0Z" fill="#12f700"/><path d="M847.6,542.7L856.1,546.2L840.2,540.4L831.7,531.6Z" fill="#2ef700"/><path d="M780.6,487.5L789.1,485.7L773.4,475.5L764.9,477.4Z" fill="#94f713"/><path d="M905.9,556.1L914.4,555.1L898.7,553.0L890.2,553.1Z" fill="#13f700"/><path d="M839.1,537.4L847.6,542.7L831.7,531.6L823.2,521.9Z" fill="#40f700"/><path d="M964.2,542.8L972.8,541.0L957.0,545.1L948.5,546.9Z" fill="#2bf700"/><path d="M772.1,489.3L780.6,487.5L764.9,477.4L756.4,479.2Z" fill="#94f713"/><path d="M897.4,556.1L905.9,556.1L890.2,553.1L881.7,552.2Z" fill="#17f700"/><path d="M830.6,530.4L839.1,537.4L823.2,521.9L814.7,513.0Z" fill="#56f704"/><path d="M955.7,544.7L964.2,542.8L948.5,546.9L940.0,549.6Z" fill="#2af700"/><path d="M763.6,495.6L772.1,489.3L756.4,479.2L747.8,485.5Z" fill="#91f712"/><path d="M888.9,555.3L897.4,556.1L881.7,552.2L873.2,550.5Z" fill="#1cf700"/><path d="M822.0,519.8L830.6,530.4L814.7,513.0L806.2,504.2Z" fill="#68f708"/><path d="M947.2,546.5L955.7,544.7L940.0,549.6L931.5,551.5Z" fill="#2af700"/><path d="M755.1,503.7L763.6,495.6L747.8,485.5L739.3,493.5Z" fill="#8af710"/><path d="M880.4,554.5L888.9,555.3L873.2,550.5L864.6,548.8Z" fill="#23f700"/><path d="M813.5,511.8L822.0,519.8L806.2,504.2L797.7,494.5Z" fill="#78f70c"/><path d="M938.7,548.3L947.2,546.5L931.5,551.5L923.0,553.3Z" fill="#2af700"/><path d="M746.5,510.8L755.1,503.7L739.3,493.5L730.8,500.7Z" fill="#81f70e"/><path d="M871.8,552.8L880.4,554.5L864.6,548.8L856.1,546.2Z" fill="#2af700"/><path d="M805.0,497.7L813.5,511.8L797.7,494.5L789.1,485.7Z" fill="#8af710"/><path d="M930.2,550.2L938.7,548.3L923.0,553.3L914.4,555.1Z" fill="#2af700"/><path d="M738.0,513.5L746.5,510.8L730.8,500.7L722.3,503.4Z" fill="#7df70d"/><path d="M863.3,550.2L871.8,552.8L856.1,546.2L847.6,542.7Z" fill="#33f700"/><path d="M796.5,499.5L805.0,497.7L789.1,485.7L780.6,487.5Z" fill="#93f713"/><path d="M921.6,552.0L930.2,550.2L914.4,555.1L905.9,556.1Z" fill="#2af700"/><path d="M734.6,518.7L738.0,513.5L722.3,503.4L718.9,508.6Z" fill="#79f70c"/><path d="M731.2,525.7L734.6,518.7L718.9,508.6L715.5,515.5Z" fill="#71f70a"/><path d="M854.8,545.8L863.3,550.2L847.6,542.7L839.1,537.4Z" fill="#3ff700"/><path d="M979.8,539.6L988.3,537.7L972.8,541.0L964.2,542.8Z" fill="#48f701"/><path d="M727.8,536.2L731.2,525.7L715.5,515.5L712.0,526.0Z" fill="#65f707"/><path d="M788.0,501.3L796.5,499.5L780.6,487.5L772.1,489.3Z" fill="#93f713"/><path d="M913.1,553.8L921.6,552.0L905.9,556.1L897.4,556.1Z" fill="#2bf700"/><path d="M724.4,558.2L727.8,536.2L712.0,526.0L708.6,548.1Z" fill="#47f701"/><path d="M846.3,540.5L854.8,545.8L839.1,537.4L830.6,530.4Z" fill="#50f703"/><path d="M971.3,541.4L979.8,539.6L964.2,542.8L955.7,544.7Z" fill="#48f701"/><path d="M721.0,585.6L724.4,558.2L708.6,548.1L705.3,575.5Z" fill="#15f700"/><path d="M779.4,506.7L788.0,501.3L772.1,489.3L763.6,495.6Z" fill="#90f712"/><path d="M904.6,554.8L913.1,553.8L897.4,556.1L888.9,555.3Z" fill="#2ef700"/><path d="M717.6,613.0L721.0,585.6L705.3,575.5L701.9,602.8Z" fill="#00f720"/><path d="M714.2,629.7L717.6,613.0L701.9,602.8L698.5,619.6Z" fill="#00f74b"/><path d="M837.8,534.3L846.3,540.5L830.6,530.4L822.0,519.8Z" fill="#61f706"/><path d="M962.8,543.2L971.3,541.4L955.7,544.7L947.2,546.5Z" fill="#48f701"/><path d="M710.7,650.0L714.2,629.7L698.5,619.6L695.0,639.8Z" fill="#00f66f"/><path d="M770.9,515.7L779.4,506.7L763.6,495.6L755.1,503.7Z" fill="#89f710"/><path d="M896.1,555.7L904.6,554.8L888.9,555.3L880.4,554.5Z" fill="#32f700"/><path d="M707.3,666.7L710.7,650.0L695.0,639.8L691.6,656.6Z" fill="#00f491"/><path d="M829.2,528.2L837.8,534.3L822.0,519.8L813.5,511.8Z" fill="#70f70a"/><path d="M954.3,545.1L962.8,543.2L947.2,546.5L938.7,548.3Z" fill="#48f701"/><path d="M703.9,680.7L707.3,666.7L691.6,656.6L688.2,670.6Z" fill="#00f3ad"/><path d="M762.4,522.8L770.9,515.7L755.1,503.7L746.5,510.8Z" fill="#80f70e"/><path d="M887.6,555.8L896.1,555.7L880.4,554.5L871.8,552.8Z" fill="#36f700"/><path d="M700.6,694.8L703.9,680.7L688.2,670.6L684.8,684.7Z" fill="#00f2c6"/><path d="M697.2,705.3L700.6,694.8L684.8,684.7L681.4,695.2Z" fill="#00f1db"/><path d="M820.7,519.4L829.2,528.2L813.5,511.8L805.0,497.7Z" fill="#80f70e"/><path d="M945.8,546.9L954.3,545.1L938.7,548.3L930.2,550.2Z" fill="#48f701"/><path d="M987.8,539.3L996.3,537.5L988.3,537.7L979.8,539.6Z" fill="#5cf705"/><path d="M693.7,706.0L697.2,705.3L681.4,695.2L678.0,695.9Z" fill="#00f0e4"/><path d="M753.9,525.5L762.4,522.8L746.5,510.8L738.0,513.5Z" fill="#7bf70d"/><path d="M879.1,555.0L887.6,555.8L871.8,552.8L863.3,550.2Z" fill="#3df700"/><path d="M690.3,706.8L693.7,706.0L678.0,695.9L674.6,696.6Z" fill="#00f0e4"/><path d="M812.2,518.5L820.7,519.4L805.0,497.7L796.5,499.5Z" fill="#8bf711"/><path d="M937.2,548.7L945.8,546.9L930.2,550.2L921.6,552.0Z" fill="#48f701"/><path d="M750.5,530.7L753.9,525.5L738.0,513.5L734.6,518.7Z" fill="#77f70c"/><path d="M979.2,541.2L987.8,539.3L979.8,539.6L971.3,541.4Z" fill="#5cf705"/><path d="M686.9,707.5L690.3,706.8L674.6,696.6L671.2,697.4Z" fill="#00f0e4"/><path d="M870.5,553.2L879.1,555.0L863.3,550.2L854.8,545.8Z" fill="#46f701"/><path d="M747.1,537.7L750.5,530.7L734.6,518.7L731.2,525.7Z" fill="#70f70a"/><path d="M683.5,708.2L686.9,707.5L671.2,697.4L667.8,698.1Z" fill="#00f0e4"/><path d="M743.6,548.2L747.1,537.7L731.2,525.7L727.8,536.2Z" fill="#63f707"/><path d="M680.1,709.0L683.5,708.2L667.8,698.1L664.4,698.8Z" fill="#00f0e4"/><path d="M803.7,523.0L812.2,518.5L796.5,499.5L788.0,501.3Z" fill="#8bf711"/><path d="M928.7,550.6L937.2,548.7L921.6,552.0L913.1,553.8Z" fill="#48f701"/><path d="M970.7,543.0L979.2,541.2L971.3,541.4L962.8,543.2Z" fill="#5cf705"/><path d="M740.2,569.3L743.6,548.2L727.8,536.2L724.4,558.2Z" fill="#45f701"/><path d="M862.0,551.5L870.5,553.2L854.8,545.8L846.3,540.5Z" fill="#52f703"/><path d="M736.9,595.8L740.2,569.3L724.4,558.2L721.0,585.6Z" fill="#14f700"/><path d="M995.6,538.1L1004.1,536.3L996.3,537.5L987.8,539.3Z" fill="#65f707"/><path d="M795.2,529.3L803.7,523.0L788.0,501.3L779.4,506.7Z" fill="#87f710"/><path d="M920.2,552.4L928.7,550.6L913.1,553.8L904.6,554.8Z" fill="#48f701"/><path d="M733.5,623.2L736.9,595.8L721.0,585.6L717.6,613.0Z" fill="#00f720"/><path d="M962.2,545.7L970.7,543.0L962.8,543.2L954.3,545.1Z" fill="#5cf705"/><path d="M853.5,548.9L862.0,551.5L846.3,540.5L837.8,534.3Z" fill="#5df705"/><path d="M730.1,640.8L733.5,623.2L717.6,613.0L714.2,629.7Z" fill="#00f74c"/><path d="M987.0,540.0L995.6,538.1L987.8,539.3L979.2,541.2Z" fill="#65f707"/><path d="M726.6,661.1L730.1,640.8L714.2,629.7L710.7,650.0Z" fill="#00f66f"/><path d="M786.7,536.5L795.2,529.3L779.4,506.7L770.9,515.7Z" fill="#7ff70e"/><path d="M911.7,555.1L920.2,552.4L904.6,554.8L896.1,555.7Z" fill="#49f702"/><path d="M953.7,547.6L962.2,545.7L954.3,545.1L945.8,546.9Z" fill="#5bf705"/><path d="M723.2,677.8L726.6,661.1L710.7,650.0L707.3,666.7Z" fill="#00f492"/><path d="M845.0,546.3L853.5,548.9L837.8,534.3L829.2,528.2Z" fill="#67f708"/><path d="M719.8,691.9L723.2,677.8L707.3,666.7L703.9,680.7Z" fill="#00f3ad"/><path d="M978.5,542.7L987.0,540.0L979.2,541.2L970.7,543.0Z" fill="#64f707"/><path d="M778.1,541.8L786.7,536.5L770.9,515.7L762.4,522.8Z" fill="#77f70c"/><path d="M903.2,556.9L911.7,555.1L896.1,555.7L887.6,555.8Z" fill="#4af702"/><path d="M716.4,705.9L719.8,691.9L703.9,680.7L700.6,694.8Z" fill="#00f2c6"/><path d="M945.2,549.4L953.7,547.6L945.8,546.9L937.2,548.7Z" fill="#5bf705"/><path d="M836.5,544.6L845.0,546.3L829.2,528.2L820.7,519.4Z" fill="#71f70a"/><path d="M713.0,716.4L716.4,705.9L700.6,694.8L697.2,705.3Z" fill="#00f1dc"/><path d="M1003.5,546.8L1012.0,545.0L1004.1,536.3L995.6,538.1Z" fill="#67f708"/><path d="M970.0,544.5L978.5,542.7L970.7,543.0L962.2,545.7Z" fill="#64f707"/><path d="M709.6,717.2L713.0,716.4L697.2,705.3L693.7,706.0Z" fill="#00f0e5"/><path d="M769.6,546.3L778.1,541.8L762.4,522.8L753.9,525.5Z" fill="#73f70b"/><path d="M894.6,558.8L903.2,556.9L887.6,555.8L879.1,555.0Z" fill="#4df702"/><path d="M936.6,551.2L945.2,549.4L937.2,548.7L928.7,550.6Z" fill="#5bf705"/><path d="M706.2,717.9L709.6,717.2L693.7,706.0L690.3,706.8Z" fill="#00f0e5"/><path d="M827.9,542.9L836.5,544.6L820.7,519.4L812.2,518.5Z" fill="#78f70c"/><path d="M995.0,548.6L1003.5,546.8L995.6,538.1L987.0,540.0Z" fill="#67f708"/><path d="M766.2,550.6L769.6,546.3L753.9,525.5L750.5,530.7Z" fill="#6ff709"/><path d="M702.8,718.6L706.2,717.9L690.3,706.8L686.9,707.5Z" fill="#00f0e5"/><path d="M961.5,546.4L970.0,544.5L962.2,545.7L953.7,547.6Z" fill="#63f707"/><path d="M886.1,560.6L894.6,558.8L879.1,555.0L870.5,553.2Z" fill="#50f703"/><path d="M762.8,556.7L766.2,550.6L750.5,530.7L747.1,537.7Z" fill="#67f708"/><path d="M699.4,719.3L702.8,718.6L686.9,707.5L683.5,708.2Z" fill="#00f0e5"/><path d="M928.1,553.1L936.6,551.2L928.7,550.6L920.2,552.4Z" fill="#5bf705"/><path d="M759.4,565.4L762.8,556.7L747.1,537.7L743.6,548.2Z" fill="#5cf705"/><path d="M819.4,546.5L827.9,542.9L812.2,518.5L803.7,523.0Z" fill="#79f70c"/><path d="M696.0,720.1L699.4,719.3L683.5,708.2L680.1,709.0Z" fill="#00f0e5"/><path d="M986.5,551.4L995.0,548.6L987.0,540.0L978.5,542.7Z" fill="#66f707"/><path d="M756.0,583.9L759.4,565.4L743.6,548.2L740.2,569.3Z" fill="#3df700"/><path d="M953.0,548.2L961.5,546.4L953.7,547.6L945.2,549.4Z" fill="#63f707"/><path d="M877.6,562.5L886.1,560.6L870.5,553.2L862.0,551.5Z" fill="#54f703"/><path d="M919.6,554.9L928.1,553.1L920.2,552.4L911.7,555.1Z" fill="#5bf705"/><path d="M752.6,607.7L756.0,583.9L740.2,569.3L736.9,595.8Z" fill="#11f700"/><path d="M1011.3,560.7L1019.8,558.9L1012.0,545.0L1003.5,546.8Z" fill="#5df705"/><path d="M810.9,552.8L819.4,546.5L803.7,523.0L795.2,529.3Z" fill="#74f70b"/><path d="M977.9,553.2L986.5,551.4L978.5,542.7L970.0,544.5Z" fill="#65f707"/><path d="M749.2,634.2L752.6,607.7L736.9,595.8L733.5,623.2Z" fill="#00f722"/><path d="M944.4,550.0L953.0,548.2L945.2,549.4L936.6,551.2Z" fill="#63f707"/><path d="M869.1,565.2L877.6,562.5L862.0,551.5L853.5,548.9Z" fill="#58f704"/><path d="M745.8,655.4L749.2,634.2L733.5,623.2L730.1,640.8Z" fill="#00f74f"/><path d="M911.1,556.7L919.6,554.9L911.7,555.1L903.2,556.9Z" fill="#5bf705"/><path d="M1002.8,562.5L1011.3,560.7L1003.5,546.8L995.0,548.6Z" fill="#5df705"/><path d="M742.3,676.6L745.8,655.4L730.1,640.8L726.6,661.1Z" fill="#00f675"/><path d="M802.4,559.9L810.9,552.8L795.2,529.3L786.7,536.5Z" fill="#6df709"/><path d="M969.4,555.0L977.9,553.2L970.0,544.5L961.5,546.4Z" fill="#65f707"/><path d="M738.9,695.0L742.3,676.6L726.6,661.1L723.2,677.8Z" fill="#00f498"/><path d="M935.9,552.8L944.4,550.0L936.6,551.2L928.1,553.1Z" fill="#63f707"/><path d="M860.6,567.0L869.1,565.2L853.5,548.9L845.0,546.3Z" fill="#5cf705"/><path d="M902.6,559.5L911.1,556.7L903.2,556.9L894.6,558.8Z" fill="#5af704"/><path d="M735.5,709.1L738.9,695.0L723.2,677.8L719.8,691.9Z" fill="#00f3b5"/><path d="M994.2,565.3L1002.8,562.5L995.0,548.6L986.5,551.4Z" fill="#5df705"/><path d="M793.9,566.2L802.4,559.9L786.7,536.5L778.1,541.8Z" fill="#66f707"/><path d="M1016.1,576.3L1024.6,574.4L1019.8,558.9L1011.3,560.7Z" fill="#47f701"/><path d="M960.9,556.9L969.4,555.0L961.5,546.4L953.0,548.2Z" fill="#65f707"/><path d="M732.2,721.4L735.5,709.1L719.8,691.9L716.4,705.9Z" fill="#00f1cd"/><path d="M927.4,554.6L935.9,552.8L928.1,553.1L919.6,554.9Z" fill="#63f707"/><path d="M852.0,568.8L860.6,567.0L845.0,546.3L836.5,544.6Z" fill="#5ff706"/><path d="M728.8,731.0L732.2,721.4L716.4,705.9L713.0,716.4Z" fill="#00f0e1"/><path d="M894.1,562.2L902.6,559.5L894.6,558.8L886.1,560.6Z" fill="#59f704"/><path d="M985.7,567.1L994.2,565.3L986.5,551.4L977.9,553.2Z" fill="#5cf705"/><path d="M725.3,731.7L728.8,731.0L713.0,716.4L709.6,717.2Z" fill="#00f0e9"/><path d="M785.3,571.6L793.9,566.2L778.1,541.8L769.6,546.3Z" fill="#60f706"/><path d="M1007.6,578.1L1016.1,576.3L1011.3,560.7L1002.8,562.5Z" fill="#47f701"/><path d="M952.4,558.7L960.9,556.9L953.0,548.2L944.4,550.0Z" fill="#65f707"/><path d="M721.9,732.5L725.3,731.7L709.6,717.2L706.2,717.9Z" fill="#00f0e9"/><path d="M918.9,556.4L927.4,554.6L919.6,554.9L911.1,556.7Z" fill="#63f707"/><path d="M843.5,568.9L852.0,568.8L836.5,544.6L827.9,542.9Z" fill="#62f706"/><path d="M885.5,564.9L894.1,562.2L886.1,560.6L877.6,562.5Z" fill="#59f704"/><path d="M782.0,575.9L785.3,571.6L769.6,546.3L766.2,550.6Z" fill="#5bf705"/><path d="M718.5,733.2L721.9,732.5L706.2,717.9L702.8,718.6Z" fill="#00f0e9"/><path d="M1020.8,581.9L1029.3,580.1L1024.6,574.4L1016.1,576.3Z" fill="#36f700"/><path d="M977.2,568.9L985.7,567.1L977.9,553.2L969.4,555.0Z" fill="#5cf705"/><path d="M778.6,580.1L782.0,575.9L766.2,550.6L762.8,556.7Z" fill="#53f703"/><path d="M999.1,580.8L1007.6,578.1L1002.8,562.5L994.2,565.3Z" fill="#46f701"/><path d="M943.9,561.4L952.4,558.7L944.4,550.0L935.9,552.8Z" fill="#65f707"/><path d="M715.1,733.9L718.5,733.2L702.8,718.6L699.4,719.3Z" fill="#00f0e9"/><path d="M910.4,559.1L918.9,556.4L911.1,556.7L902.6,559.5Z" fill="#62f706"/><path d="M775.1,588.0L778.6,580.1L762.8,556.7L759.4,565.4Z" fill="#45f701"/><path d="M835.0,572.5L843.5,568.9L827.9,542.9L819.4,546.5Z" fill="#63f707"/><path d="M711.7,734.7L715.1,733.9L699.4,719.3L696.0,720.1Z" fill="#00f0e9"/><path d="M877.0,567.6L885.5,564.9L877.6,562.5L869.1,565.2Z" fill="#57f704"/><path d="M1012.3,584.7L1020.8,581.9L1016.1,576.3L1007.6,578.1Z" fill="#36f700"/><path d="M771.7,601.2L775.1,588.0L759.4,565.4L756.0,583.9Z" fill="#2df700"/><path d="M968.7,570.8L977.2,568.9L969.4,555.0L960.9,556.9Z" fill="#5cf705"/><path d="M990.5,582.6L999.1,580.8L994.2,565.3L985.7,567.1Z" fill="#45f701"/><path d="M935.3,563.3L943.9,561.4L935.9,552.8L927.4,554.6Z" fill="#64f707"/><path d="M1024.0,584.0L1032.6,582.2L1029.3,580.1L1020.8,581.9Z" fill="#34f700"/><path d="M768.3,621.4L771.7,601.2L756.0,583.9L752.6,607.7Z" fill="#08f700"/><path d="M901.8,561.9L910.4,559.1L902.6,559.5L894.1,562.2Z" fill="#61f706"/><path d="M826.5,578.8L835.0,572.5L819.4,546.5L810.9,552.8Z" fill="#5ef705"/><path d="M868.5,570.3L877.0,567.6L869.1,565.2L860.6,567.0Z" fill="#56f704"/><path d="M764.9,645.2L768.3,621.4L752.6,607.7L749.2,634.2Z" fill="#00f725"/><path d="M1003.7,586.5L1012.3,584.7L1007.6,578.1L999.1,580.8Z" fill="#35f700"/><path d="M960.2,572.6L968.7,570.8L960.9,556.9L952.4,558.7Z" fill="#5cf705"/><path d="M761.5,672.6L764.9,645.2L749.2,634.2L745.8,655.4Z" fill="#00f755"/><path d="M982.0,584.5L990.5,582.6L985.7,567.1L977.2,568.9Z" fill="#45f701"/><path d="M926.8,565.1L935.3,563.3L927.4,554.6L918.9,556.4Z" fill="#64f707"/><path d="M1015.5,586.8L1024.0,584.0L1020.8,581.9L1012.3,584.7Z" fill="#33f700"/><path d="M1027.2,586.9L1035.7,585.1L1032.6,582.2L1024.0,584.0Z" fill="#33f700"/><path d="M893.3,565.5L901.8,561.9L894.1,562.2L885.5,564.9Z" fill="#5ff706"/><path d="M758.1,694.7L761.5,672.6L745.8,655.4L742.3,676.6Z" fill="#00f581"/><path d="M818.0,585.1L826.5,578.8L810.9,552.8L802.4,559.9Z" fill="#56f704"/><path d="M860.0,572.2L868.5,570.3L860.6,567.0L852.0,568.8Z" fill="#55f704"/><path d="M995.2,588.3L1003.7,586.5L999.1,580.8L990.5,582.6Z" fill="#35f700"/><path d="M754.7,716.7L758.1,694.7L742.3,676.6L738.9,695.0Z" fill="#00f3a8"/><path d="M951.7,574.4L960.2,572.6L952.4,558.7L943.9,561.4Z" fill="#5cf705"/><path d="M973.5,586.3L982.0,584.5L977.2,568.9L968.7,570.8Z" fill="#45f701"/><path d="M918.3,567.8L926.8,565.1L918.9,556.4L910.4,559.1Z" fill="#63f707"/><path d="M1007.0,588.6L1015.5,586.8L1012.3,584.7L1003.7,586.5Z" fill="#32f700"/><path d="M751.3,729.9L754.7,716.7L738.9,695.0L735.5,709.1Z" fill="#00f2c6"/><path d="M1018.6,589.6L1027.2,586.9L1024.0,584.0L1015.5,586.8Z" fill="#32f700"/><path d="M884.8,569.1L893.3,565.5L885.5,564.9L877.0,567.6Z" fill="#5df705"/><path d="M1030.4,589.0L1038.9,587.2L1035.7,585.1L1027.2,586.9Z" fill="#32f700"/><path d="M809.5,591.3L818.0,585.1L802.4,559.9L793.9,566.2Z" fill="#4bf702"/><path d="M851.5,576.7L860.0,572.2L852.0,568.8L843.5,568.9Z" fill="#55f703"/><path d="M747.9,740.4L751.3,729.9L735.5,709.1L732.2,721.4Z" fill="#00f1dc"/><path d="M986.7,591.0L995.2,588.3L990.5,582.6L982.0,584.5Z" fill="#34f700"/><path d="M943.1,577.2L951.7,574.4L943.9,561.4L935.3,563.3Z" fill="#5bf705"/><path d="M744.5,749.1L747.9,740.4L732.2,721.4L728.8,731.0Z" fill="#00f0ed"/><path d="M965.0,589.0L973.5,586.3L968.7,570.8L960.2,572.6Z" fill="#44f701"/><path d="M909.8,570.5L918.3,567.8L910.4,559.1L901.8,561.9Z" fill="#62f706"/><path d="M998.5,590.4L1007.0,588.6L1003.7,586.5L995.2,588.3Z" fill="#32f700"/><path d="M1010.1,591.5L1018.6,589.6L1015.5,586.8L1007.0,588.6Z" fill="#31f700"/><path d="M876.3,571.8L884.8,569.1L877.0,567.6L868.5,570.3Z" fill="#5bf705"/><path d="M1021.9,591.7L1030.4,589.0L1027.2,586.9L1018.6,589.6Z" fill="#31f700"/><path d="M741.0,749.9L744.5,749.1L728.8,731.0L725.3,731.7Z" fill="#00eaef"/><path d="M800.9,598.5L809.5,591.3L793.9,566.2L785.3,571.6Z" fill="#41f700"/><path d="M1033.5,591.0L1042.0,589.2L1038.9,587.2L1030.4,589.0Z" fill="#32f700"/><path d="M842.9,581.2L851.5,576.7L843.5,568.9L835.0,572.5Z" fill="#52f703"/><path d="M978.2,592.9L986.7,591.0L982.0,584.5L973.5,586.3Z" fill="#34f700"/><path d="M737.6,750.6L741.0,749.9L725.3,731.7L721.9,732.5Z" fill="#00eaef"/><path d="M934.6,579.0L943.1,577.2L935.3,563.3L926.8,565.1Z" fill="#5bf705"/><path d="M956.5,590.9L965.0,589.0L960.2,572.6L951.7,574.4Z" fill="#44f701"/><path d="M901.3,574.1L909.8,570.5L901.8,561.9L893.3,565.5Z" fill="#60f706"/><path d="M797.5,601.9L800.9,598.5L785.3,571.6L782.0,575.9Z" fill="#39f700"/><path d="M990.0,593.1L998.5,590.4L995.2,588.3L986.7,591.0Z" fill="#31f700"/><path d="M734.2,751.3L737.6,750.6L721.9,732.5L718.5,733.2Z" fill="#00eaef"/><path d="M1001.6,593.3L1010.1,591.5L1007.0,588.6L998.5,590.4Z" fill="#31f700"/><path d="M867.8,574.5L876.3,571.8L868.5,570.3L860.0,572.2Z" fill="#5af704"/><path d="M1013.4,593.6L1021.9,591.7L1018.6,589.6L1010.1,591.5Z" fill="#30f700"/><path d="M1025.0,592.9L1033.5,591.0L1030.4,589.0L1021.9,591.7Z" fill="#31f700"/><path d="M794.2,605.3L797.5,601.9L782.0,575.9L778.6,580.1Z" fill="#32f700"/><path d="M834.4,588.3L842.9,581.2L835.0,572.5L826.5,578.8Z" fill="#49f702"/><path d="M1036.5,593.0L1045.0,591.1L1042.0,589.2L1033.5,591.0Z" fill="#32f700"/><path d="M730.8,752.1L734.2,751.3L718.5,733.2L715.1,733.9Z" fill="#00eaef"/><path d="M969.7,594.7L978.2,592.9L973.5,586.3L965.0,589.0Z" fill="#33f700"/><path d="M926.1,581.7L934.6,579.0L926.8,565.1L918.3,567.8Z" fill="#5af704"/><path d="M790.7,610.5L794.2,605.3L778.6,580.1L775.1,588.0Z" fill="#29f700"/><path d="M727.5,752.8L730.8,752.1L715.1,733.9L711.7,734.7Z" fill="#00eaef"/><path d="M948.0,592.7L956.5,590.9L951.7,574.4L943.1,577.2Z" fill="#43f701"/><path d="M892.7,578.6L901.3,574.1L893.3,565.5L884.8,569.1Z" fill="#5df705"/><path d="M981.4,595.0L990.0,593.1L986.7,591.0L978.2,592.9Z" fill="#30f700"/><path d="M993.1,596.0L1001.6,593.3L998.5,590.4L990.0,593.1Z" fill="#30f700"/><path d="M859.3,583.5L867.8,574.5L860.0,572.2L851.5,576.7Z" fill="#55f703"/><path d="M787.3,619.2L790.7,610.5L775.1,588.0L771.7,601.2Z" fill="#19f700"/><path d="M1004.9,595.4L1013.4,593.6L1010.1,591.5L1001.6,593.3Z" fill="#30f700"/><path d="M1038.2,594.9L1046.7,593.1L1045.0,591.1L1036.5,593.0Z" fill="#31f700"/><path d="M1016.5,595.6L1025.0,592.9L1021.9,591.7L1013.4,593.6Z" fill="#30f700"/><path d="M825.9,593.7L834.4,588.3L826.5,578.8L818.0,585.1Z" fill="#3ff700"/><path d="M1028.0,594.8L1036.5,593.0L1033.5,591.0L1025.0,592.9Z" fill="#32f700"/><path d="M783.9,634.1L787.3,619.2L771.7,601.2L768.3,621.4Z" fill="#00f702"/><path d="M961.1,596.5L969.7,594.7L965.0,589.0L956.5,590.9Z" fill="#33f700"/><path d="M917.6,585.3L926.1,581.7L918.3,567.8L909.8,570.5Z" fill="#58f704"/><path d="M1039.8,595.9L1048.3,594.1L1046.7,593.1L1038.2,594.9Z" fill="#30f700"/><path d="M939.4,594.5L948.0,592.7L943.1,577.2L934.6,579.0Z" fill="#43f701"/><path d="M884.2,581.4L892.7,578.6L884.8,569.1L876.3,571.8Z" fill="#5bf705"/><path d="M780.5,657.1L783.9,634.1L768.3,621.4L764.9,645.2Z" fill="#00f72a"/><path d="M972.9,597.7L981.4,595.0L978.2,592.9L969.7,594.7Z" fill="#30f700"/><path d="M984.6,597.9L993.1,596.0L990.0,593.1L981.4,595.0Z" fill="#2ff700"/><path d="M850.7,589.7L859.3,583.5L851.5,576.7L842.9,581.2Z" fill="#4bf702"/><path d="M996.3,597.3L1004.9,595.4L1001.6,593.3L993.1,596.0Z" fill="#30f700"/><path d="M1029.7,596.8L1038.2,594.9L1036.5,593.0L1028.0,594.8Z" fill="#31f700"/><path d="M1008.0,597.4L1016.5,595.6L1013.4,593.6L1004.9,595.4Z" fill="#30f700"/><path d="M1041.3,596.9L1049.8,595.1L1048.3,594.1L1039.8,595.9Z" fill="#30f700"/><path d="M777.1,689.8L780.5,657.1L764.9,645.2L761.5,672.6Z" fill="#00f75e"/><path d="M817.4,600.0L825.9,593.7L818.0,585.1L809.5,591.3Z" fill="#36f700"/><path d="M1019.5,597.5L1028.0,594.8L1025.0,592.9L1016.5,595.6Z" fill="#31f700"/><path d="M952.6,599.3L961.1,596.5L956.5,590.9L948.0,592.7Z" fill="#32f700"/><path d="M909.1,588.9L917.6,585.3L909.8,570.5L901.3,574.1Z" fill="#54f703"/><path d="M773.6,713.6L777.1,689.8L761.5,672.6L758.1,694.7Z" fill="#00f590"/><path d="M1031.2,597.8L1039.8,595.9L1038.2,594.9L1029.7,596.8Z" fill="#30f700"/><path d="M1042.9,598.0L1051.4,596.1L1049.8,595.1L1041.3,596.9Z" fill="#30f700"/><path d="M930.9,598.1L939.4,594.5L934.6,579.0L926.1,581.7Z" fill="#41f700"/><path d="M875.7,584.1L884.2,581.4L876.3,571.8L867.8,574.5Z" fill="#59f704"/><path d="M964.4,599.5L972.9,597.7L969.7,594.7L961.1,596.5Z" fill="#2ff700"/><path d="M976.0,599.7L984.6,597.9L981.4,595.0L972.9,597.7Z" fill="#2ff700"/><path d="M842.2,597.8L850.7,589.7L842.9,581.2L834.4,588.3Z" fill="#40f700"/><path d="M770.3,738.3L773.6,713.6L758.1,694.7L754.7,716.7Z" fill="#00f2ba"/><path d="M987.8,600.0L996.3,597.3L993.1,596.0L984.6,597.9Z" fill="#2ff700"/><path d="M1021.2,598.6L1029.7,596.8L1028.0,594.8L1019.5,597.5Z" fill="#30f700"/><path d="M999.5,599.3L1008.0,597.4L1004.9,595.4L996.3,597.3Z" fill="#30f700"/><path d="M1032.8,598.8L1041.3,596.9L1039.8,595.9L1031.2,597.8Z" fill="#30f700"/><path d="M808.9,608.9L817.4,600.0L809.5,591.3L800.9,598.5Z" fill="#2bf700"/><path d="M1010.9,599.3L1019.5,597.5L1016.5,595.6L1008.0,597.4Z" fill="#30f700"/><path d="M766.9,751.5L770.3,738.3L754.7,716.7L751.3,729.9Z" fill="#00f1db"/><path d="M944.1,601.1L952.6,599.3L948.0,592.7L939.4,594.5Z" fill="#32f700"/><path d="M900.5,593.4L909.1,588.9L901.3,574.1L892.7,578.6Z" fill="#4ff703"/><path d="M1022.7,599.6L1031.2,597.8L1029.7,596.8L1021.2,598.6Z" fill="#30f700"/><path d="M1034.4,599.8L1042.9,598.0L1041.3,596.9L1032.8,598.8Z" fill="#30f700"/><path d="M922.4,602.6L930.9,598.1L926.1,581.7L917.6,585.3Z" fill="#3df700"/><path d="M867.2,594.8L875.7,584.1L867.8,574.5L859.3,583.5Z" fill="#4ff703"/><path d="M763.5,759.3L766.9,751.5L751.3,729.9L747.9,740.4Z" fill="#00f0ee"/><path d="M955.9,601.4L964.4,599.5L961.1,596.5L952.6,599.3Z" fill="#2ff700"/><path d="M967.5,602.4L976.0,599.7L972.9,597.7L964.4,599.5Z" fill="#2ef700"/><path d="M805.5,613.2L808.9,608.9L800.9,598.5L797.5,601.9Z" fill="#22f700"/><path d="M833.7,604.1L842.2,597.8L834.4,588.3L825.9,593.7Z" fill="#36f700"/><path d="M979.3,601.8L987.8,600.0L984.6,597.9L976.0,599.7Z" fill="#2ef700"/><path d="M1012.6,601.3L1021.2,598.6L1019.5,597.5L1010.9,599.3Z" fill="#30f700"/><path d="M990.9,601.1L999.5,599.3L996.3,597.3L987.8,600.0Z" fill="#30f700"/><path d="M1024.3,600.6L1032.8,598.8L1031.2,597.8L1022.7,599.6Z" fill="#30f700"/><path d="M760.1,767.2L763.5,759.3L747.9,740.4L744.5,749.1Z" fill="#00e2ef"/><path d="M1002.4,601.2L1010.9,599.3L1008.0,597.4L999.5,599.3Z" fill="#30f700"/><path d="M802.1,619.3L805.5,613.2L797.5,601.9L794.2,605.3Z" fill="#1bf700"/><path d="M935.6,604.7L944.1,601.1L939.4,594.5L930.9,598.1Z" fill="#30f700"/><path d="M892.0,597.0L900.5,593.4L892.7,578.6L884.2,581.4Z" fill="#4bf702"/><path d="M756.6,767.9L760.1,767.2L744.5,749.1L741.0,749.9Z" fill="#00dbee"/><path d="M1014.2,601.4L1022.7,599.6L1021.2,598.6L1012.6,601.3Z" fill="#30f700"/><path d="M1025.8,601.6L1034.4,599.8L1032.8,598.8L1024.3,600.6Z" fill="#30f700"/><path d="M798.6,626.2L802.1,619.3L794.2,605.3L790.7,610.5Z" fill="#11f700"/><path d="M913.9,608.0L922.4,602.6L917.6,585.3L909.1,588.9Z" fill="#38f700"/><path d="M858.7,604.6L867.2,594.8L859.3,583.5L850.7,589.7Z" fill="#3ff700"/><path d="M947.4,604.1L955.9,601.4L952.6,599.3L944.1,601.1Z" fill="#2ef700"/><path d="M959.0,604.3L967.5,602.4L964.4,599.5L955.9,601.4Z" fill="#2df700"/><path d="M825.2,611.2L833.7,604.1L825.9,593.7L817.4,600.0Z" fill="#2df700"/><path d="M753.2,768.6L756.6,767.9L741.0,749.9L737.6,750.6Z" fill="#00dbee"/><path d="M970.8,603.6L979.3,601.8L976.0,599.7L967.5,602.4Z" fill="#2ef700"/><path d="M1004.1,603.2L1012.6,601.3L1010.9,599.3L1002.4,601.2Z" fill="#2ff700"/><path d="M795.2,637.6L798.6,626.2L790.7,610.5L787.3,619.2Z" fill="#02f700"/><path d="M982.4,603.8L990.9,601.1L987.8,600.0L979.3,601.8Z" fill="#2ff700"/><path d="M1015.8,602.4L1024.3,600.6L1022.7,599.6L1014.2,601.4Z" fill="#30f700"/><path d="M993.9,603.0L1002.4,601.2L999.5,599.3L990.9,601.1Z" fill="#30f700"/><path d="M749.8,769.4L753.2,768.6L737.6,750.6L734.2,751.3Z" fill="#00dbee"/><path d="M927.1,611.0L935.6,604.7L930.9,598.1L922.4,602.6Z" fill="#2bf700"/><path d="M883.5,599.8L892.0,597.0L884.2,581.4L875.7,584.1Z" fill="#48f701"/><path d="M791.8,656.1L795.2,637.6L787.3,619.2L783.9,634.1Z" fill="#00f716"/><path d="M1005.7,603.3L1014.2,601.4L1012.6,601.3L1004.1,603.2Z" fill="#2ff700"/><path d="M1017.3,603.5L1025.8,601.6L1024.3,600.6L1015.8,602.4Z" fill="#30f700"/><path d="M905.4,613.4L913.9,608.0L909.1,588.9L900.5,593.4Z" fill="#32f700"/><path d="M850.2,613.6L858.7,604.6L850.7,589.7L842.2,597.8Z" fill="#31f700"/><path d="M746.4,770.1L749.8,769.4L734.2,751.3L730.8,752.1Z" fill="#00dbee"/><path d="M938.8,608.6L947.4,604.1L944.1,601.1L935.6,604.7Z" fill="#2bf700"/><path d="M950.5,606.1L959.0,604.3L955.9,601.4L947.4,604.1Z" fill="#2df700"/><path d="M788.4,679.1L791.8,656.1L783.9,634.1L780.5,657.1Z" fill="#00f73d"/><path d="M816.7,621.1L825.2,611.2L817.4,600.0L808.9,608.9Z" fill="#20f700"/><path d="M962.3,606.4L970.8,603.6L967.5,602.4L959.0,604.3Z" fill="#2df700"/><path d="M995.6,605.0L1004.1,603.2L1002.4,601.2L993.9,603.0Z" fill="#2ff700"/><path d="M973.9,605.6L982.4,603.8L979.3,601.8L970.8,603.6Z" fill="#2ef700"/><path d="M1007.2,604.3L1015.8,602.4L1014.2,601.4L1005.7,603.3Z" fill="#30f700"/><path d="M743.0,770.8L746.4,770.1L730.8,752.1L727.5,752.8Z" fill="#00dbee"/><path d="M985.4,604.8L993.9,603.0L990.9,601.1L982.4,603.8Z" fill="#30f700"/><path d="M785.1,709.1L788.4,679.1L780.5,657.1L777.1,689.8Z" fill="#00f672"/><path d="M918.6,619.0L927.1,611.0L922.4,602.6L913.9,608.0Z" fill="#22f700"/><path d="M875.0,610.5L883.5,599.8L875.7,584.1L867.2,594.8Z" fill="#3df700"/><path d="M997.2,606.0L1005.7,603.3L1004.1,603.2L995.6,605.0Z" fill="#2ff700"/><path d="M813.3,627.1L816.7,621.1L808.9,608.9L805.5,613.2Z" fill="#14f700"/><path d="M1008.8,605.3L1017.3,603.5L1015.8,602.4L1007.2,604.3Z" fill="#30f700"/><path d="M781.6,731.2L785.1,709.1L777.1,689.8L773.6,713.6Z" fill="#00f3a4"/><path d="M896.8,617.9L905.4,613.4L900.5,593.4L892.0,597.0Z" fill="#2df700"/><path d="M841.6,627.8L850.2,613.6L842.2,597.8L833.7,604.1Z" fill="#22f700"/><path d="M930.3,616.6L938.8,608.6L935.6,604.7L927.1,611.0Z" fill="#23f700"/><path d="M942.0,611.5L950.5,606.1L947.4,604.1L938.8,608.6Z" fill="#29f700"/><path d="M953.7,608.2L962.3,606.4L959.0,604.3L950.5,606.1Z" fill="#2cf700"/><path d="M987.1,606.8L995.6,605.0L993.9,603.0L985.4,604.8Z" fill="#2ff700"/><path d="M809.9,636.7L813.3,627.1L805.5,613.2L802.1,619.3Z" fill="#08f700"/><path d="M778.2,754.1L781.6,731.2L773.6,713.6L770.3,738.3Z" fill="#00f1cf"/><path d="M965.4,607.5L973.9,605.6L970.8,603.6L962.3,606.4Z" fill="#2ef700"/><path d="M998.7,606.1L1007.2,604.3L1005.7,603.3L997.2,606.0Z" fill="#30f700"/><path d="M976.9,606.7L985.4,604.8L982.4,603.8L973.9,605.6Z" fill="#2ff700"/><path d="M910.0,627.1L918.6,619.0L913.9,608.0L905.4,613.4Z" fill="#18f700"/><path d="M806.4,646.4L809.9,636.7L802.1,619.3L798.6,626.2Z" fill="#00f706"/><path d="M866.5,622.1L875.0,610.5L867.2,594.8L858.7,604.6Z" fill="#2bf700"/><path d="M774.8,769.0L778.2,754.1L770.3,738.3L766.9,751.5Z" fill="#00f0f0"/><path d="M988.7,607.8L997.2,606.0L995.6,605.0L987.1,606.8Z" fill="#2ef700"/><path d="M1000.3,607.1L1008.8,605.3L1007.2,604.3L998.7,606.1Z" fill="#30f700"/><path d="M888.3,620.6L896.8,617.9L892.0,597.0L883.5,599.8Z" fill="#2af700"/><path d="M833.1,642.1L841.6,627.8L833.7,604.1L825.2,611.2Z" fill="#10f700"/><path d="M921.8,626.5L930.3,616.6L927.1,611.0L918.6,619.0Z" fill="#17f700"/><path d="M803.0,660.4L806.4,646.4L798.6,626.2L795.2,637.6Z" fill="#00f71a"/><path d="M933.4,620.4L942.0,611.5L938.8,608.6L930.3,616.6Z" fill="#1ff700"/><path d="M771.4,777.8L774.8,769.0L766.9,751.5L763.5,759.3Z" fill="#00dcee"/><path d="M945.2,613.6L953.7,608.2L950.5,606.1L942.0,611.5Z" fill="#29f700"/><path d="M978.6,608.7L987.1,606.8L985.4,604.8L976.9,606.7Z" fill="#2ff700"/><path d="M956.9,609.3L965.4,607.5L962.3,606.4L953.7,608.2Z" fill="#2df700"/><path d="M990.2,607.9L998.7,606.1L997.2,606.0L988.7,607.8Z" fill="#2ff700"/><path d="M968.4,609.4L976.9,606.7L973.9,605.6L965.4,607.5Z" fill="#2ff700"/><path d="M799.6,677.1L803.0,660.4L795.2,637.6L791.8,656.1Z" fill="#00f737"/><path d="M768.0,783.8L771.4,777.8L763.5,759.3L760.1,767.2Z" fill="#00cfee"/><path d="M901.5,633.4L910.0,627.1L905.4,613.4L896.8,617.9Z" fill="#0ff700"/><path d="M857.9,633.7L866.5,622.1L858.7,604.6L850.2,613.6Z" fill="#19f700"/><path d="M980.1,609.7L988.7,607.8L987.1,606.8L978.6,608.7Z" fill="#2ef700"/><path d="M796.2,696.5L799.6,677.1L791.8,656.1L788.4,679.1Z" fill="#00f75c"/><path d="M991.8,609.0L1000.3,607.1L998.7,606.1L990.2,607.9Z" fill="#30f700"/><path d="M764.5,784.6L768.0,783.8L760.1,767.2L756.6,767.9Z" fill="#00c9ee"/><path d="M879.8,631.3L888.3,620.6L883.5,599.8L875.0,610.5Z" fill="#20f700"/><path d="M824.6,651.0L833.1,642.1L825.2,611.2L816.7,621.1Z" fill="#00f700"/><path d="M913.3,637.2L921.8,626.5L918.6,619.0L910.0,627.1Z" fill="#08f700"/><path d="M924.9,632.0L933.4,620.4L930.3,616.6L921.8,626.5Z" fill="#0ff700"/><path d="M936.7,623.4L945.2,613.6L942.0,611.5L933.4,620.4Z" fill="#1df700"/><path d="M970.1,610.5L978.6,608.7L976.9,606.7L968.4,609.4Z" fill="#2ff700"/><path d="M792.8,725.7L796.2,696.5L788.4,679.1L785.1,709.1Z" fill="#00f58c"/><path d="M761.1,785.3L764.5,784.6L756.6,767.9L753.2,768.6Z" fill="#00c9ee"/><path d="M948.3,615.6L956.9,609.3L953.7,608.2L945.2,613.6Z" fill="#29f700"/><path d="M981.7,609.8L990.2,607.9L988.7,607.8L980.1,609.7Z" fill="#2ff700"/><path d="M959.8,611.2L968.4,609.4L965.4,607.5L956.9,609.3Z" fill="#2ef700"/><path d="M893.0,637.0L901.5,633.4L896.8,617.9L888.3,620.6Z" fill="#0af700"/><path d="M821.2,654.4L824.6,651.0L816.7,621.1L813.3,627.1Z" fill="#00f70b"/><path d="M789.4,746.8L792.8,725.7L785.1,709.1L781.6,731.2Z" fill="#00f2bb"/><path d="M849.4,663.1L857.9,633.7L850.2,613.6L841.6,627.8Z" fill="#00f703"/><path d="M757.8,786.0L761.1,785.3L753.2,768.6L749.8,769.4Z" fill="#00c9ee"/><path d="M971.6,611.5L980.1,609.7L978.6,608.7L970.1,610.5Z" fill="#2ef700"/><path d="M983.3,610.8L991.8,609.0L990.2,607.9L981.7,609.8Z" fill="#30f700"/><path d="M871.3,643.0L879.8,631.3L875.0,610.5L866.5,622.1Z" fill="#0df700"/><path d="M904.8,645.2L913.3,637.2L910.0,627.1L901.5,633.4Z" fill="#00f705"/><path d="M817.8,656.1L821.2,654.4L813.3,627.1L809.9,636.7Z" fill="#00f714"/><path d="M786.0,770.7L789.4,746.8L781.6,731.2L778.2,754.1Z" fill="#00f0e4"/><path d="M916.4,643.6L924.9,632.0L921.8,626.5L913.3,637.2Z" fill="#00f702"/><path d="M754.4,786.7L757.8,786.0L749.8,769.4L746.4,770.1Z" fill="#00c9ee"/><path d="M928.2,635.9L936.7,623.4L933.4,620.4L924.9,632.0Z" fill="#0bf700"/><path d="M961.5,612.3L970.1,610.5L968.4,609.4L959.8,611.2Z" fill="#2ef700"/><path d="M939.8,626.3L948.3,615.6L945.2,613.6L936.7,623.4Z" fill="#1cf700"/><path d="M973.2,611.6L981.7,609.8L980.1,609.7L971.6,611.5Z" fill="#2ff700"/><path d="M951.3,616.6L959.8,611.2L956.9,609.3L948.3,615.6Z" fill="#2af700"/><path d="M814.3,666.6L817.8,656.1L809.9,636.7L806.4,646.4Z" fill="#00f722"/><path d="M782.6,784.7L786.0,770.7L778.2,754.1L774.8,769.0Z" fill="#00daee"/><path d="M751.0,787.5L754.4,786.7L746.4,770.1L743.0,770.8Z" fill="#00c9ee"/><path d="M884.5,652.1L893.0,637.0L888.3,620.6L879.8,631.3Z" fill="#00f701"/><path d="M840.9,680.0L849.4,663.1L841.6,627.8L833.1,642.1Z" fill="#00f725"/><path d="M963.1,613.3L971.6,611.5L970.1,610.5L961.5,612.3Z" fill="#2ef700"/><path d="M811.0,680.6L814.3,666.6L806.4,646.4L803.0,660.4Z" fill="#00f739"/><path d="M779.2,793.4L782.6,784.7L774.8,769.0L771.4,777.8Z" fill="#00c6ed"/><path d="M974.7,612.6L983.3,610.8L981.7,609.8L973.2,611.6Z" fill="#30f700"/><path d="M862.8,656.3L871.3,643.0L866.5,622.1L857.9,633.7Z" fill="#00f707"/><path d="M896.3,649.7L904.8,645.2L901.5,633.4L893.0,637.0Z" fill="#00f70c"/><path d="M907.9,652.6L916.4,643.6L913.3,637.2L904.8,645.2Z" fill="#00f712"/><path d="M919.7,649.3L928.2,635.9L924.9,632.0L916.4,643.6Z" fill="#00f709"/><path d="M953.0,618.6L961.5,612.3L959.8,611.2L951.3,616.6Z" fill="#2af700"/><path d="M807.6,695.6L811.0,680.6L803.0,660.4L799.6,677.1Z" fill="#00f756"/><path d="M775.8,799.5L779.2,793.4L771.4,777.8L768.0,783.8Z" fill="#00b9ed"/><path d="M931.3,639.7L939.8,626.3L936.7,623.4L928.2,635.9Z" fill="#09f700"/><path d="M964.7,613.4L973.2,611.6L971.6,611.5L963.1,613.3Z" fill="#2ff700"/><path d="M942.8,628.2L951.3,616.6L948.3,615.6L939.8,626.3Z" fill="#1cf700"/><path d="M876.0,667.3L884.5,652.1L879.8,631.3L871.3,643.0Z" fill="#00f718"/><path d="M804.2,714.9L807.6,695.6L799.6,677.1L796.2,696.5Z" fill="#00f677"/><path d="M772.3,800.2L775.8,799.5L768.0,783.8L764.5,784.6Z" fill="#00b4ec"/><path d="M832.4,686.3L840.9,680.0L833.1,642.1L824.6,651.0Z" fill="#00f739"/><path d="M954.6,619.6L963.1,613.3L961.5,612.3L953.0,618.6Z" fill="#2af700"/><path d="M966.2,613.6L974.7,612.6L973.2,611.6L964.7,613.4Z" fill="#30f700"/><path d="M854.2,683.9L862.8,656.3L857.9,633.7L849.4,663.1Z" fill="#00f72d"/><path d="M887.7,664.0L896.3,649.7L893.0,637.0L884.5,652.1Z" fill="#00f71b"/><path d="M800.8,738.8L804.2,714.9L796.2,696.5L792.8,725.7Z" fill="#00f4a2"/><path d="M768.9,801.0L772.3,800.2L764.5,784.6L761.1,785.3Z" fill="#00b4ec"/><path d="M899.4,658.0L907.9,652.6L904.8,645.2L896.3,649.7Z" fill="#00f71c"/><path d="M911.2,659.1L919.7,649.3L916.4,643.6L907.9,652.6Z" fill="#00f71b"/><path d="M944.5,630.2L953.0,618.6L951.3,616.6L942.8,628.2Z" fill="#1cf700"/><path d="M922.8,653.1L931.3,639.7L928.2,635.9L919.7,649.3Z" fill="#00f70d"/><path d="M956.1,619.7L964.7,613.4L963.1,613.3L954.6,619.6Z" fill="#2bf700"/><path d="M829.0,676.3L832.4,686.3L824.6,651.0L821.2,654.4Z" fill="#00f73b"/><path d="M934.3,642.5L942.8,628.2L939.8,626.3L931.3,639.7Z" fill="#07f700"/><path d="M797.3,760.8L800.8,738.8L792.8,725.7L789.4,746.8Z" fill="#00f1cd"/><path d="M765.6,801.7L768.9,801.0L761.1,785.3L757.8,786.0Z" fill="#00b4ec"/><path d="M867.4,676.2L876.0,667.3L871.3,643.0L862.8,656.3Z" fill="#00f72d"/><path d="M825.6,679.7L829.0,676.3L821.2,654.4L817.8,656.1Z" fill="#00f738"/><path d="M946.1,631.2L954.6,619.6L953.0,618.6L944.5,630.2Z" fill="#1bf700"/><path d="M793.9,782.9L797.3,760.8L789.4,746.8L786.0,770.7Z" fill="#00eaef"/><path d="M762.2,802.4L765.6,801.7L757.8,786.0L754.4,786.7Z" fill="#00b4ec"/><path d="M957.7,619.0L966.2,613.6L964.7,613.4L956.1,619.7Z" fill="#2df700"/><path d="M845.7,700.0L854.2,683.9L849.4,663.1L840.9,680.0Z" fill="#00f756"/><path d="M879.2,678.3L887.7,664.0L884.5,652.1L876.0,667.3Z" fill="#00f735"/><path d="M890.9,670.4L899.4,658.0L896.3,649.7L887.7,664.0Z" fill="#00f72b"/><path d="M822.1,689.4L825.6,679.7L817.8,656.1L814.3,666.6Z" fill="#00f743"/><path d="M902.6,664.5L911.2,659.1L907.9,652.6L899.4,658.0Z" fill="#00f726"/><path d="M936.0,645.4L944.5,630.2L942.8,628.2L934.3,642.5Z" fill="#05f700"/><path d="M790.5,796.9L793.9,782.9L786.0,770.7L782.6,784.7Z" fill="#00c9ee"/><path d="M758.8,803.2L762.2,802.4L754.4,786.7L751.0,787.5Z" fill="#00b4ec"/><path d="M914.3,664.7L922.8,653.1L919.7,649.3L911.2,659.1Z" fill="#00f722"/><path d="M947.6,632.2L956.1,619.7L954.6,619.6L946.1,631.2Z" fill="#1cf700"/><path d="M925.8,657.6L934.3,642.5L931.3,639.7L922.8,653.1Z" fill="#00f711"/><path d="M858.9,697.6L867.4,676.2L862.8,656.3L854.2,683.9Z" fill="#00f74d"/><path d="M818.7,702.5L822.1,689.4L814.3,666.6L811.0,680.6Z" fill="#00f75a"/><path d="M787.1,804.8L790.5,796.9L782.6,784.7L779.2,793.4Z" fill="#00b6ec"/><path d="M937.5,646.4L946.1,631.2L944.5,630.2L936.0,645.4Z" fill="#04f700"/><path d="M949.2,627.9L957.7,619.0L956.1,619.7L947.6,632.2Z" fill="#20f700"/><path d="M837.2,706.2L845.7,700.0L840.9,680.0L832.4,686.3Z" fill="#00f669"/><path d="M870.7,687.2L879.2,678.3L876.0,667.3L867.4,676.2Z" fill="#00f749"/><path d="M815.4,716.6L818.7,702.5L811.0,680.6L807.6,695.6Z" fill="#00f674"/><path d="M783.7,809.9L787.1,804.8L779.2,793.4L775.8,799.5Z" fill="#00aaec"/><path d="M882.3,685.6L890.9,670.4L887.7,664.0L879.2,678.3Z" fill="#00f743"/><path d="M894.1,681.4L902.6,664.5L899.4,658.0L890.9,670.4Z" fill="#00f737"/><path d="M927.5,659.6L936.0,645.4L934.3,642.5L925.8,657.6Z" fill="#00f714"/><path d="M905.8,670.1L914.3,664.7L911.2,659.1L902.6,664.5Z" fill="#00f72e"/><path d="M939.1,647.4L947.6,632.2L946.1,631.2L937.5,646.4Z" fill="#04f700"/><path d="M812.0,732.4L815.4,716.6L807.6,695.6L804.2,714.9Z" fill="#00f492"/><path d="M917.2,669.2L925.8,657.6L922.8,653.1L914.3,664.7Z" fill="#00f727"/><path d="M780.3,810.7L783.7,809.9L775.8,799.5L772.3,800.2Z" fill="#00a6ec"/><path d="M850.4,716.3L858.9,697.6L854.2,683.9L845.7,700.0Z" fill="#00f673"/><path d="M833.8,696.3L837.2,706.2L832.4,686.3L829.0,676.3Z" fill="#00f763"/><path d="M808.6,753.6L812.0,732.4L804.2,714.9L800.8,738.8Z" fill="#00f3b6"/><path d="M929.0,661.5L937.5,646.4L936.0,645.4L927.5,659.6Z" fill="#00f716"/><path d="M776.9,811.4L780.3,810.7L772.3,800.2L768.9,801.0Z" fill="#00a6ec"/><path d="M940.7,643.9L949.2,627.9L947.6,632.2L939.1,647.4Z" fill="#09f700"/><path d="M862.2,704.1L870.7,687.2L867.4,676.2L858.9,697.6Z" fill="#00f762"/><path d="M830.4,697.9L833.8,696.3L829.0,676.3L825.6,679.7Z" fill="#00f75a"/><path d="M873.8,693.6L882.3,685.6L879.2,678.3L870.7,687.2Z" fill="#00f757"/><path d="M805.1,774.7L808.6,753.6L800.8,738.8L797.3,760.8Z" fill="#00f0de"/><path d="M885.6,692.1L894.1,681.4L890.9,670.4L882.3,685.6Z" fill="#00f74f"/><path d="M918.9,671.2L927.5,659.6L925.8,657.6L917.2,669.2Z" fill="#00f72b"/><path d="M773.5,812.1L776.9,811.4L768.9,801.0L765.6,801.7Z" fill="#00a6ec"/><path d="M897.2,683.4L905.8,670.1L902.6,664.5L894.1,681.4Z" fill="#00f73f"/><path d="M930.6,663.4L939.1,647.4L937.5,646.4L929.0,661.5Z" fill="#00f717"/><path d="M908.7,674.6L917.2,669.2L914.3,664.7L905.8,670.1Z" fill="#00f735"/><path d="M827.0,705.8L830.4,697.9L825.6,679.7L822.1,689.4Z" fill="#00f764"/><path d="M841.9,720.8L850.4,716.3L845.7,700.0L837.2,706.2Z" fill="#00f586"/><path d="M801.7,795.9L805.1,774.7L797.3,760.8L793.9,782.9Z" fill="#00dbee"/><path d="M770.1,812.9L773.5,812.1L765.6,801.7L762.2,802.4Z" fill="#00a6ec"/><path d="M920.5,673.1L929.0,661.5L927.5,659.6L918.9,671.2Z" fill="#00f72d"/><path d="M823.6,716.3L827.0,705.8L822.1,689.4L818.7,702.5Z" fill="#00f677"/><path d="M932.1,665.3L940.7,643.9L939.1,647.4L930.6,663.4Z" fill="#00f715"/><path d="M853.7,718.4L862.2,704.1L858.9,697.6L850.4,716.3Z" fill="#00f581"/><path d="M798.3,809.1L801.7,795.9L793.9,782.9L790.5,796.9Z" fill="#00bbed"/><path d="M766.7,813.6L770.1,812.9L762.2,802.4L758.8,803.2Z" fill="#00a6ec"/><path d="M865.3,708.8L873.8,693.6L870.7,687.2L862.2,704.1Z" fill="#00f66c"/><path d="M820.2,729.4L823.6,716.3L818.7,702.5L815.4,716.6Z" fill="#00f58e"/><path d="M877.1,700.2L885.6,692.1L882.3,685.6L873.8,693.6Z" fill="#00f761"/><path d="M910.4,677.5L918.9,671.2L917.2,669.2L908.7,674.6Z" fill="#00f739"/><path d="M838.5,705.5L841.9,720.8L837.2,706.2L833.8,696.3Z" fill="#00f67c"/><path d="M888.7,694.1L897.2,683.4L894.1,681.4L885.6,692.1Z" fill="#00f756"/><path d="M922.1,675.0L930.6,663.4L929.0,661.5L920.5,673.1Z" fill="#00f72e"/><path d="M794.9,816.9L798.3,809.1L790.5,796.9L787.1,804.8Z" fill="#00a9ec"/><path d="M900.2,685.3L908.7,674.6L905.8,670.1L897.2,683.4Z" fill="#00f743"/><path d="M816.8,741.7L820.2,729.4L815.4,716.6L812.0,732.4Z" fill="#00f3a7"/><path d="M835.1,706.3L838.5,705.5L833.8,696.3L830.4,697.9Z" fill="#00f670"/><path d="M791.5,819.4L794.9,816.9L787.1,804.8L783.7,809.9Z" fill="#009feb"/><path d="M912.0,679.4L920.5,673.1L918.9,671.2L910.4,677.5Z" fill="#00f73b"/><path d="M923.6,677.8L932.1,665.3L930.6,663.4L922.1,675.0Z" fill="#00f731"/><path d="M845.1,722.9L853.7,718.4L850.4,716.3L841.9,720.8Z" fill="#00f492"/><path d="M813.4,762.9L816.8,741.7L812.0,732.4L808.6,753.6Z" fill="#00f2c6"/><path d="M831.6,717.7L835.1,706.3L830.4,697.9L827.0,705.8Z" fill="#00f679"/><path d="M856.8,720.4L865.3,708.8L862.2,704.1L853.7,718.4Z" fill="#00f584"/><path d="M788.1,820.1L791.5,819.4L783.7,809.9L780.3,810.7Z" fill="#009deb"/><path d="M868.6,714.5L877.1,700.2L873.8,693.6L865.3,708.8Z" fill="#00f673"/><path d="M901.9,686.4L910.4,677.5L908.7,674.6L900.2,685.3Z" fill="#00f745"/><path d="M880.2,702.2L888.7,694.1L885.6,692.1L877.1,700.2Z" fill="#00f765"/><path d="M913.5,681.3L922.1,675.0L920.5,673.1L912.0,679.4Z" fill="#00f73d"/><path d="M891.7,696.1L900.2,685.3L897.2,683.4L888.7,694.1Z" fill="#00f756"/><path d="M809.9,784.1L813.4,762.9L808.6,753.6L805.1,774.7Z" fill="#00f0ec"/><path d="M828.2,730.0L831.6,717.7L827.0,705.8L823.6,716.3Z" fill="#00f58c"/><path d="M784.7,820.9L788.1,820.1L780.3,810.7L776.9,811.4Z" fill="#009deb"/><path d="M841.8,713.0L845.1,722.9L841.9,720.8L838.5,705.5Z" fill="#00f587"/><path d="M903.5,687.4L912.0,679.4L910.4,677.5L901.9,686.4Z" fill="#00f746"/><path d="M806.5,804.3L809.9,784.1L805.1,774.7L801.7,795.9Z" fill="#00ceee"/><path d="M824.8,739.6L828.2,730.0L823.6,716.3L820.2,729.4Z" fill="#00f4a0"/><path d="M915.1,682.3L923.6,677.8L922.1,675.0L913.5,681.3Z" fill="#00f73f"/><path d="M781.3,821.6L784.7,820.9L776.9,811.4L773.5,812.1Z" fill="#009deb"/><path d="M838.4,713.7L841.8,713.0L838.5,705.5L835.1,706.3Z" fill="#00f67b"/><path d="M848.3,724.9L856.8,720.4L853.7,718.4L845.1,722.9Z" fill="#00f492"/><path d="M803.1,818.4L806.5,804.3L801.7,795.9L798.3,809.1Z" fill="#00afec"/><path d="M860.0,722.5L868.6,714.5L865.3,708.8L856.8,720.4Z" fill="#00f587"/><path d="M893.4,697.2L901.9,686.4L900.2,685.3L891.7,696.1Z" fill="#00f756"/><path d="M821.5,751.8L824.8,739.6L820.2,729.4L816.8,741.7Z" fill="#00f3b5"/><path d="M871.7,716.5L880.2,702.2L877.1,700.2L868.6,714.5Z" fill="#00f677"/><path d="M905.0,688.5L913.5,681.3L912.0,679.4L903.5,687.4Z" fill="#00f747"/><path d="M777.9,822.3L781.3,821.6L773.5,812.1L770.1,812.9Z" fill="#009deb"/><path d="M883.2,704.1L891.7,696.1L888.7,694.1L880.2,702.2Z" fill="#00f765"/><path d="M834.9,725.1L838.4,713.7L835.1,706.3L831.6,717.7Z" fill="#00f585"/><path d="M799.7,825.3L803.1,818.4L798.3,809.1L794.9,816.9Z" fill="#009deb"/><path d="M818.1,772.1L821.5,751.8L816.8,741.7L813.4,762.9Z" fill="#00f1d2"/><path d="M774.5,823.1L777.9,822.3L770.1,812.9L766.7,813.6Z" fill="#009deb"/><path d="M844.9,719.4L848.3,724.9L845.1,722.9L841.8,713.0Z" fill="#00f58c"/><path d="M894.9,698.2L903.5,687.4L901.9,686.4L893.4,697.2Z" fill="#00f756"/><path d="M831.5,737.4L834.9,725.1L831.6,717.7L828.2,730.0Z" fill="#00f49a"/><path d="M906.6,689.5L915.1,682.3L913.5,681.3L905.0,688.5Z" fill="#00f748"/><path d="M796.4,828.7L799.7,825.3L794.9,816.9L791.5,819.4Z" fill="#0095eb"/><path d="M814.6,791.5L818.1,772.1L813.4,762.9L809.9,784.1Z" fill="#00e9ef"/><path d="M841.5,720.1L844.9,719.4L841.8,713.0L838.4,713.7Z" fill="#00f584"/><path d="M851.5,727.0L860.0,722.5L856.8,720.4L848.3,724.9Z" fill="#00f492"/><path d="M884.9,705.2L893.4,697.2L891.7,696.1L883.2,704.1Z" fill="#00f765"/><path d="M828.1,746.1L831.5,737.4L828.2,730.0L824.8,739.6Z" fill="#00f3ad"/><path d="M863.2,724.5L871.7,716.5L868.6,714.5L860.0,722.5Z" fill="#00f589"/><path d="M896.5,699.2L905.0,688.5L903.5,687.4L894.9,698.2Z" fill="#00f756"/><path d="M874.7,718.4L883.2,704.1L880.2,702.2L871.7,716.5Z" fill="#00f677"/><path d="M792.9,829.5L796.4,828.7L791.5,819.4L788.1,820.1Z" fill="#0093eb"/><path d="M811.2,810.0L814.6,791.5L809.9,784.1L806.5,804.3Z" fill="#00c5ed"/><path d="M838.0,730.7L841.5,720.1L838.4,713.7L834.9,725.1Z" fill="#00f58e"/><path d="M824.7,758.4L828.1,746.1L824.8,739.6L821.5,751.8Z" fill="#00f2c0"/><path d="M886.4,706.2L894.9,698.2L893.4,697.2L884.9,705.2Z" fill="#00f765"/><path d="M789.5,830.2L792.9,829.5L788.1,820.1L784.7,820.9Z" fill="#0093eb"/><path d="M807.8,823.2L811.2,810.0L806.5,804.3L803.1,818.4Z" fill="#00a8ec"/><path d="M898.1,700.2L906.6,689.5L905.0,688.5L896.5,699.2Z" fill="#00f756"/><path d="M848.1,726.0L851.5,727.0L848.3,724.9L844.9,719.4Z" fill="#00f490"/><path d="M834.6,742.9L838.0,730.7L834.9,725.1L831.5,737.4Z" fill="#00f4a3"/><path d="M821.3,776.9L824.7,758.4L821.5,751.8L818.1,772.1Z" fill="#00f1dc"/><path d="M786.1,830.9L789.5,830.2L784.7,820.9L781.3,821.6Z" fill="#0093eb"/><path d="M876.4,719.5L884.9,705.2L883.2,704.1L874.7,718.4Z" fill="#00f677"/><path d="M804.4,833.7L807.8,823.2L803.1,818.4L799.7,825.3Z" fill="#0094eb"/><path d="M844.7,726.7L848.1,726.0L844.9,719.4L841.5,720.1Z" fill="#00f58c"/><path d="M854.6,729.0L863.2,724.5L860.0,722.5L851.5,727.0Z" fill="#00f492"/><path d="M888.0,707.2L896.5,699.2L894.9,698.2L886.4,706.2Z" fill="#00f765"/><path d="M831.2,751.7L834.6,742.9L831.5,737.4L828.1,746.1Z" fill="#00f3b5"/><path d="M866.1,726.4L874.7,718.4L871.7,716.5L863.2,724.5Z" fill="#00f589"/><path d="M817.9,795.4L821.3,776.9L818.1,772.1L814.6,791.5Z" fill="#00e2ef"/><path d="M782.7,831.7L786.1,830.9L781.3,821.6L777.9,822.3Z" fill="#0093eb"/><path d="M801.0,834.4L804.4,833.7L799.7,825.3L796.4,828.7Z" fill="#008cea"/><path d="M841.3,736.3L844.7,726.7L841.5,720.1L838.0,730.7Z" fill="#00f495"/><path d="M827.8,763.9L831.2,751.7L828.1,746.1L824.7,758.4Z" fill="#00f2c7"/><path d="M877.9,720.5L886.4,706.2L884.9,705.2L876.4,719.5Z" fill="#00f677"/><path d="M814.5,813.9L817.9,795.4L814.6,791.5L811.2,810.0Z" fill="#00c0ed"/><path d="M889.5,708.2L898.1,700.2L896.5,699.2L888.0,707.2Z" fill="#00f765"/><path d="M779.3,832.4L782.7,831.7L777.9,822.3L774.5,823.1Z" fill="#0093eb"/><path d="M851.2,729.7L854.6,729.0L851.5,727.0L848.1,726.0Z" fill="#00f493"/><path d="M797.6,835.1L801.0,834.4L796.4,828.7L792.9,829.5Z" fill="#008bea"/><path d="M837.9,748.6L841.3,736.3L838.0,730.7L834.6,742.9Z" fill="#00f3a9"/><path d="M824.4,780.7L827.8,763.9L824.7,758.4L821.3,776.9Z" fill="#00f0e2"/><path d="M867.8,727.5L876.4,719.5L874.7,718.4L866.1,726.4Z" fill="#00f589"/><path d="M811.1,826.1L814.5,813.9L811.2,810.0L807.8,823.2Z" fill="#00a4ec"/><path d="M879.5,721.5L888.0,707.2L886.4,706.2L877.9,720.5Z" fill="#00f677"/><path d="M857.6,730.9L866.1,726.4L863.2,724.5L854.6,729.0Z" fill="#00f492"/><path d="M847.9,730.5L851.2,729.7L848.1,726.0L844.7,726.7Z" fill="#00f492"/><path d="M794.2,835.9L797.6,835.1L792.9,829.5L789.5,830.2Z" fill="#008bea"/><path d="M834.5,758.2L837.9,748.6L834.6,742.9L831.2,751.7Z" fill="#00f2bc"/><path d="M821.0,800.1L824.4,780.7L821.3,776.9L817.9,795.4Z" fill="#00ddef"/><path d="M807.7,835.8L811.1,826.1L807.8,823.2L804.4,833.7Z" fill="#0091eb"/><path d="M869.4,728.5L877.9,720.5L876.4,719.5L867.8,727.5Z" fill="#00f589"/><path d="M844.4,741.9L847.9,730.5L844.7,726.7L841.3,736.3Z" fill="#00f49c"/><path d="M790.8,836.6L794.2,835.9L789.5,830.2L786.1,830.9Z" fill="#008bea"/><path d="M881.0,722.5L889.5,708.2L888.0,707.2L879.5,721.5Z" fill="#00f677"/><path d="M831.1,770.5L834.5,758.2L831.2,751.7L827.8,763.9Z" fill="#00f1cf"/><path d="M817.6,815.9L821.0,800.1L817.9,795.4L814.5,813.9Z" fill="#00bded"/><path d="M804.3,836.5L807.7,835.8L804.4,833.7L801.0,834.4Z" fill="#0088ea"/><path d="M854.2,735.2L857.6,730.9L854.6,729.0L851.2,729.7Z" fill="#00f496"/><path d="M859.3,732.0L867.8,727.5L866.1,726.4L857.6,730.9Z" fill="#00f492"/><path d="M841.0,753.3L844.4,741.9L841.3,736.3L837.9,748.6Z" fill="#00f3b0"/><path d="M787.4,837.3L790.8,836.6L786.1,830.9L782.7,831.7Z" fill="#008bea"/><path d="M827.7,785.4L831.1,770.5L827.8,763.9L824.4,780.7Z" fill="#00f0e7"/><path d="M871.0,729.5L879.5,721.5L877.9,720.5L869.4,728.5Z" fill="#00f589"/><path d="M814.2,828.2L817.6,815.9L814.5,813.9L811.1,826.1Z" fill="#00a3ec"/><path d="M800.8,837.2L804.3,836.5L801.0,834.4L797.6,835.1Z" fill="#0088ea"/><path d="M850.8,735.1L854.2,735.2L851.2,729.7L847.9,730.5Z" fill="#00f497"/><path d="M837.6,763.8L841.0,753.3L837.9,748.6L834.5,758.2Z" fill="#00f2c3"/><path d="M784.0,838.1L787.4,837.3L782.7,831.7L779.3,832.4Z" fill="#008bea"/><path d="M824.2,803.0L827.7,785.4L824.4,780.7L821.0,800.1Z" fill="#00daee"/><path d="M810.8,837.8L814.2,828.2L811.1,826.1L807.7,835.8Z" fill="#0090eb"/><path d="M860.9,733.0L869.4,728.5L867.8,727.5L859.3,732.0Z" fill="#00f492"/><path d="M797.4,838.0L800.8,837.2L797.6,835.1L794.2,835.9Z" fill="#0088ea"/><path d="M872.5,730.5L881.0,722.5L879.5,721.5L871.0,729.5Z" fill="#00f589"/><path d="M847.4,746.5L850.8,735.1L847.9,730.5L844.4,741.9Z" fill="#00f4a1"/><path d="M855.9,736.3L859.3,732.0L857.6,730.9L854.2,735.2Z" fill="#00f498"/><path d="M834.2,775.2L837.6,763.8L834.5,758.2L831.1,770.5Z" fill="#00f1d6"/><path d="M820.8,818.0L824.2,803.0L821.0,800.1L817.6,815.9Z" fill="#00bbed"/><path d="M807.4,838.5L810.8,837.8L807.7,835.8L804.3,836.5Z" fill="#0088ea"/><path d="M794.0,838.7L797.4,838.0L794.2,835.9L790.8,836.6Z" fill="#0088ea"/><path d="M844.0,758.7L847.4,746.5L844.4,741.9L841.0,753.3Z" fill="#00f3b5"/><path d="M852.5,737.9L855.9,736.3L854.2,735.2L850.8,735.1Z" fill="#00f49b"/><path d="M862.4,734.0L871.0,729.5L869.4,728.5L860.9,733.0Z" fill="#00f492"/><path d="M830.8,789.2L834.2,775.2L831.1,770.5L827.7,785.4Z" fill="#00f0ec"/><path d="M857.5,737.3L860.9,733.0L859.3,732.0L855.9,736.3Z" fill="#00f498"/><path d="M817.4,830.3L820.8,818.0L817.6,815.9L814.2,828.2Z" fill="#00a3ec"/><path d="M803.9,839.2L807.4,838.5L804.3,836.5L800.8,837.2Z" fill="#0088ea"/><path d="M790.6,839.4L794.0,838.7L790.8,836.6L787.4,837.3Z" fill="#0088ea"/><path d="M840.6,769.2L844.0,758.7L841.0,753.3L837.6,763.8Z" fill="#00f2c9"/><path d="M849.1,748.4L852.5,737.9L850.8,735.1L847.4,746.5Z" fill="#00f3a5"/><path d="M827.3,805.9L830.8,789.2L827.7,785.4L824.2,803.0Z" fill="#00d7ee"/><path d="M864.0,735.0L872.5,730.5L871.0,729.5L862.4,734.0Z" fill="#00f492"/><path d="M854.1,739.8L857.5,737.3L855.9,736.3L852.5,737.9Z" fill="#00f49c"/><path d="M814.1,839.9L817.4,830.3L814.2,828.2L810.8,837.8Z" fill="#0090eb"/><path d="M800.5,840.0L803.9,839.2L800.8,837.2L797.4,838.0Z" fill="#0088ea"/><path d="M859.0,738.3L862.4,734.0L860.9,733.0L857.5,737.3Z" fill="#00f498"/><path d="M787.3,840.2L790.6,839.4L787.4,837.3L784.0,838.1Z" fill="#0088ea"/><path d="M837.2,780.6L840.6,769.2L837.6,763.8L834.2,775.2Z" fill="#00f1dc"/><path d="M845.7,760.7L849.1,748.4L847.4,746.5L844.0,758.7Z" fill="#00f2b9"/><path d="M824.0,820.0L827.3,805.9L824.2,803.0L820.8,818.0Z" fill="#00bbed"/><path d="M850.6,751.2L854.1,739.8L852.5,737.9L849.1,748.4Z" fill="#00f3a7"/><path d="M810.7,839.7L814.1,839.9L810.8,837.8L807.4,838.5Z" fill="#0089ea"/><path d="M797.2,840.7L800.5,840.0L797.4,838.0L794.0,838.7Z" fill="#0088ea"/><path d="M855.7,741.7L859.0,738.3L857.5,737.3L854.1,739.8Z" fill="#00f49d"/><path d="M833.8,793.8L837.2,780.6L834.2,775.2L830.8,789.2Z" fill="#00eeef"/><path d="M842.3,772.1L845.7,760.7L844.0,758.7L840.6,769.2Z" fill="#00f1cd"/><path d="M860.6,739.3L864.0,735.0L862.4,734.0L859.0,738.3Z" fill="#00f498"/><path d="M820.6,832.3L824.0,820.0L820.8,818.0L817.4,830.3Z" fill="#00a3ec"/><path d="M847.2,762.6L850.6,751.2L849.1,748.4L845.7,760.7Z" fill="#00f2bb"/><path d="M807.2,841.3L810.7,839.7L807.4,838.5L803.9,839.2Z" fill="#0089ea"/><path d="M793.8,841.4L797.2,840.7L794.0,838.7L790.6,839.4Z" fill="#0088ea"/><path d="M852.2,753.1L855.7,741.7L854.1,739.8L850.6,751.2Z" fill="#00f3a9"/><path d="M830.3,809.6L833.8,793.8L830.8,789.2L827.3,805.9Z" fill="#00d3ee"/><path d="M838.9,783.5L842.3,772.1L840.6,769.2L837.2,780.6Z" fill="#00f0e1"/><path d="M857.2,743.6L860.6,739.3L859.0,738.3L855.7,741.7Z" fill="#00f49e"/><path d="M817.2,841.9L820.6,832.3L817.4,830.3L814.1,839.9Z" fill="#0090eb"/><path d="M843.8,774.0L847.2,762.6L845.7,760.7L842.3,772.1Z" fill="#00f1d0"/><path d="M803.8,842.1L807.2,841.3L803.9,839.2L800.5,840.0Z" fill="#0088ea"/><path d="M790.4,842.2L793.8,841.4L790.6,839.4L787.3,840.2Z" fill="#0088ea"/><path d="M848.8,764.5L852.2,753.1L850.6,751.2L847.2,762.6Z" fill="#00f2bd"/><path d="M826.9,821.9L830.3,809.6L827.3,805.9L824.0,820.0Z" fill="#00b9ed"/><path d="M835.5,795.8L838.9,783.5L837.2,780.6L833.8,793.8Z" fill="#00eaef"/><path d="M853.7,755.0L857.2,743.6L855.7,741.7L852.2,753.1Z" fill="#00f3ab"/><path d="M813.8,841.7L817.2,841.9L814.1,839.9L810.7,839.7Z" fill="#0089ea"/><path d="M840.4,785.4L843.8,774.0L842.3,772.1L838.9,783.5Z" fill="#00f0e3"/><path d="M800.4,842.8L803.8,842.1L800.5,840.0L797.2,840.7Z" fill="#0088ea"/><path d="M845.4,775.9L848.8,764.5L847.2,762.6L843.8,774.0Z" fill="#00f1d1"/><path d="M823.5,834.2L826.9,821.9L824.0,820.0L820.6,832.3Z" fill="#00a3ec"/><path d="M832.0,810.7L835.5,795.8L833.8,793.8L830.3,809.6Z" fill="#00d1ee"/><path d="M850.3,766.4L853.7,755.0L852.2,753.1L848.8,764.5Z" fill="#00f2bf"/><path d="M810.3,843.4L813.8,841.7L810.7,839.7L807.2,841.3Z" fill="#0089ea"/><path d="M837.1,797.7L840.4,785.4L838.9,783.5L835.5,795.8Z" fill="#00e8ef"/><path d="M797.0,843.5L800.4,842.8L797.2,840.7L793.8,841.4Z" fill="#0088ea"/><path d="M842.0,788.2L845.4,775.9L843.8,774.0L840.4,785.4Z" fill="#00f0e5"/><path d="M820.2,843.8L823.5,834.2L820.6,832.3L817.2,841.9Z" fill="#0090eb"/><path d="M828.6,823.0L832.0,810.7L830.3,809.6L826.9,821.9Z" fill="#00b8ed"/><path d="M847.0,778.7L850.3,766.4L848.8,764.5L845.4,775.9Z" fill="#00f1d3"/><path d="M806.9,844.1L810.3,843.4L807.2,841.3L803.8,842.1Z" fill="#0088ea"/><path d="M833.6,811.7L837.1,797.7L835.5,795.8L832.0,810.7Z" fill="#00d0ee"/><path d="M793.6,844.3L797.0,843.5L793.8,841.4L790.4,842.2Z" fill="#0088ea"/><path d="M838.6,799.6L842.0,788.2L840.4,785.4L837.1,797.7Z" fill="#00e6ef"/><path d="M816.8,843.6L820.2,843.8L817.2,841.9L813.8,841.7Z" fill="#0089ea"/><path d="M825.2,835.3L828.6,823.0L826.9,821.9L823.5,834.2Z" fill="#00a3ec"/><path d="M843.6,790.1L847.0,778.7L845.4,775.9L842.0,788.2Z" fill="#00f0e8"/><path d="M803.5,844.8L806.9,844.1L803.8,842.1L800.4,842.8Z" fill="#0088ea"/><path d="M830.2,824.0L833.6,811.7L832.0,810.7L828.6,823.0Z" fill="#00b8ed"/><path d="M835.1,812.7L838.6,799.6L837.1,797.7L833.6,811.7Z" fill="#00cfee"/><path d="M813.3,845.3L816.8,843.6L813.8,841.7L810.3,843.4Z" fill="#0089ea"/><path d="M821.9,844.9L825.2,835.3L823.5,834.2L820.2,843.8Z" fill="#0090eb"/><path d="M840.2,802.3L843.6,790.1L842.0,788.2L838.6,799.6Z" fill="#00e3ef"/><path d="M800.1,843.8L803.5,844.8L800.4,842.8L797.0,843.5Z" fill="#0089ea"/><path d="M826.8,836.3L830.2,824.0L828.6,823.0L825.2,835.3Z" fill="#00a3ec"/><path d="M831.7,825.0L835.1,812.7L833.6,811.7L830.2,824.0Z" fill="#00b8ed"/><path d="M809.9,846.0L813.3,845.3L810.3,843.4L806.9,844.1Z" fill="#0088ea"/><path d="M818.5,844.7L821.9,844.9L820.2,843.8L816.8,843.6Z" fill="#0089ea"/><path d="M836.7,813.7L840.2,802.3L838.6,799.6L835.1,812.7Z" fill="#00ceee"/><path d="M796.7,844.5L800.1,843.8L797.0,843.5L793.6,844.3Z" fill="#008aea"/><path d="M823.4,845.9L826.8,836.3L825.2,835.3L821.9,844.9Z" fill="#0090eb"/><path d="M828.4,837.3L831.7,825.0L830.2,824.0L826.8,836.3Z" fill="#00a3ec"/><path d="M806.5,846.7L809.9,846.0L806.9,844.1L803.5,844.8Z" fill="#0088ea"/><path d="M815.0,846.4L818.5,844.7L816.8,843.6L813.3,845.3Z" fill="#0089ea"/><path d="M833.3,826.0L836.7,813.7L835.1,812.7L831.7,825.0Z" fill="#00b8ed"/><path d="M820.0,845.7L823.4,845.9L821.9,844.9L818.5,844.7Z" fill="#0089ea"/><path d="M825.0,846.9L828.4,837.3L826.8,836.3L823.4,845.9Z" fill="#0090eb"/><path d="M803.1,847.5L806.5,846.7L803.5,844.8L800.1,843.8Z" fill="#0089ea"/><path d="M811.6,847.1L815.0,846.4L813.3,845.3L809.9,846.0Z" fill="#0088ea"/><path d="M829.9,838.3L833.3,826.0L831.7,825.0L828.4,837.3Z" fill="#00a3ec"/><path d="M816.5,847.4L820.0,845.7L818.5,844.7L815.0,846.4Z" fill="#0089ea"/><path d="M821.6,846.7L825.0,846.9L823.4,845.9L820.0,845.7Z" fill="#0089ea"/><path d="M799.7,848.2L803.1,847.5L800.1,843.8L796.7,844.5Z" fill="#008aea"/><path d="M808.2,847.8L811.6,847.1L809.9,846.0L806.5,846.7Z" fill="#0088ea"/><path d="M826.5,847.9L829.9,838.3L828.4,837.3L825.0,846.9Z" fill="#0090eb"/><path d="M813.2,848.1L816.5,847.4L815.0,846.4L811.6,847.1Z" fill="#0088ea"/><path d="M818.1,848.4L821.6,846.7L820.0,845.7L816.5,847.4Z" fill="#0089ea"/><path d="M804.8,847.7L808.2,847.8L806.5,846.7L803.1,847.5Z" fill="#0089ea"/><path d="M823.1,847.7L826.5,847.9L825.0,846.9L821.6,846.7Z" fill="#0089ea"/><path d="M809.8,848.8L813.2,848.1L811.6,847.1L808.2,847.8Z" fill="#0088ea"/><path d="M814.7,849.1L818.1,848.4L816.5,847.4L813.2,848.1Z" fill="#0088ea"/><path d="M801.4,848.4L804.8,847.7L803.1,847.5L799.7,848.2Z" fill="#0089ea"/><path d="M819.7,849.4L823.1,847.7L821.6,846.7L818.1,848.4Z" fill="#0089ea"/><path d="M806.4,847.8L809.8,848.8L808.2,847.8L804.8,847.7Z" fill="#008aea"/><path d="M811.3,849.8L814.7,849.1L813.2,848.1L809.8,848.8Z" fill="#0088ea"/><path d="M816.3,850.1L819.7,849.4L818.1,848.4L814.7,849.1Z" fill="#0088ea"/><path d="M803.0,848.5L806.4,847.8L804.8,847.7L801.4,848.4Z" fill="#008bea"/><path d="M807.9,848.8L811.3,849.8L809.8,848.8L806.4,847.8Z" fill="#008aea"/><path d="M812.9,850.8L816.3,850.1L814.7,849.1L811.3,849.8Z" fill="#0088ea"/><path d="M804.5,849.5L807.9,848.8L806.4,847.8L803.0,848.5Z" fill="#008cea"/><path d="M809.5,849.8L812.9,850.8L811.3,849.8L807.9,848.8Z" fill="#008aea"/><path d="M806.1,850.5L809.5,849.8L807.9,848.8L804.5,849.5Z" fill="#008cea"/></g><text x="660.9" y="504.5" font-family="Liberation Sans" font-size="9" fill="#0000ff" text-anchor="end">39.50</text><text x="1053.9" y="542.5" font-family="Liberation Sans" font-size="9" fill="#0000ff">39.50</text><text x="660.9" y="556.9" font-family="Liberation Sans" font-size="9" fill="#0000ff" text-anchor="end">33.60</text><text x="1053.9" y="594.9" font-family="Liberation Sans" font-size="9" fill="#0000ff">33.60</text><text x="660.9" y="609.3" font-family="Liberation Sans" font-size="9" fill="#0000ff" text-anchor="end">27.70</text><text x="1053.9" y="647.3" font-family="Liberation Sans" font-size="9" fill="#0000ff">27.70</text><text x="660.9" y="661.7" font-family="Liberation Sans" font-size="9" fill="#0000ff" text-anchor="end">21.80</text><text x="1053.9" y="699.7" font-family="Liberation Sans" font-size="9" fill="#0000ff">21.80</text><text x="660.9" y="714.1" font-family="Liberation Sans" font-size="9" fill="#0000ff" text-anchor="end">15.90</text><text x="1053.9" y="752.1" font-family="Liberation Sans" font-size="9" fill="#0000ff">15.90</text><text x="802.6" y="859.3" font-family="Liberation Sans" font-size="9" fill="#ff0000" text-anchor="end">0.0</text><text x="786.9" y="849.2" font-family="Liberation Sans" font-size="9" fill="#ff0000" text-anchor="end">11.1</text><text x="763.2" y="833.9" font-family="Liberation Sans" font-size="9" fill="#ff0000" text-anchor="end">27.8</text><text x="739.5" y="818.7" font-family="Liberation Sans" font-size="9" fill="#ff0000" text-anchor="end">44.5</text><text x="708.2" y="798.5" font-family="Liberation Sans" font-size="9" fill="#ff0000" text-anchor="end">66.6</text><text x="676.6" y="778.1" font-family="Liberation Sans" font-size="9" fill="#ff0000" text-anchor="end">88.9</text><text x="808.6" y="859.8" font-family="Liberation Sans" font-size="9" fill="#000000">602</text><text x="825.6" y="856.0" font-family="Liberation Sans" font-size="9" fill="#000000">1602</text><text x="849.5" y="850.7" font-family="Liberation Sans" font-size="9" fill="#000000">3000</text><text x="875.0" y="845.0" font-family="Liberation Sans" font-size="9" fill="#000000">4500</text><text x="900.6" y="839.3" font-family="Liberation Sans" font-size="9" fill="#000000">6000</text><text x="926.1" y="833.5" font-family="Liberation Sans" font-size="9" fill="#000000">7500</text><text x="951.7" y="827.8" font-family="Liberation Sans" font-size="9" fill="#000000">9000</text><text x="977.2" y="822.1" font-family="Liberation Sans" font-size="9" fill="#000000">10500</text><text x="1011.3" y="814.5" font-family="Liberation Sans" font-size="9" fill="#000000">12500</text><text x="1053.9" y="805.0" font-family="Liberation Sans" font-size="9" fill="#000000">15000</text><text x="694" y="841" font-family="Liberation Sans" font-size="10.5" font-weight="bold" fill="#ff0000">TPS</text><text x="938" y="866" font-family="Liberation Sans" font-size="10.5" font-weight="bold" fill="#808080">RPM</text><text x="809" y="415" font-family="Liberation Sans" font-size="9.3" fill="#c8c8c8">TunerPro - Version 5.00</text><text x="843.5" y="434" font-family="Liberation Sans" font-size="14" font-weight="bold" fill="#000">Cyl3</text></svg><svg class="a" style="left:0;top:0;pointer-events:none" width="1574" height="919"><defs><mask id="wm" maskUnits="userSpaceOnUse" x="0" y="0" width="1574" height="919"><rect x="0" y="0" width="1574" height="919" fill="#fff"/><circle cx="285.8" cy="407.3" r="10.4" fill="#000"/><circle cx="519.2" cy="407.3" r="10.4" fill="#000"/><circle cx="449.5" cy="516.2" r="11.8" fill="#000"/><circle cx="356.1" cy="516.2" r="11.8" fill="#000"/></mask></defs><g opacity="0.3" mask="url(#wm)" fill="#000"><path d="M298.3,209.6A114,114 0 0 1 507.4,288.8L495.2,289A104.4,104.4 0 0 0 306.5,209Z"/><path d="M298.8,210L310,200L326.3,198.1L347.6,228.2L367.6,216.9L389.5,276.4L385.1,271.4L365.1,228.2L345.1,236.3L322.5,206.3Z"/><path d="M295,223.2L321.3,215.7L343.8,243.8L363.2,232.3L366.4,237L365.1,241.3L342.6,257.6L318.8,223.8L300,229.4Q296.5,255 300,288.9L293.8,290.1Q290,255 295,223.2Z"/><path d="M315,299.4C335,293 365,293 387.5,318C370,337 345,340 330,326C322,318 317,308 315,299.4Z"/><path d="M315,299.4C335,293 365,293 387.5,318C370,337 345,340 330,326C322,318 317,308 315,299.4Z" transform="translate(805,0) scale(-1,1)"/><path d="M431,327L477,329L464,358Z"/><path d="M402.5,331L424,366L410.5,391L402.5,381L394.5,391L381,367Z"/><path d="M358.7,400.5L371,419.3L373.8,407.5L381.4,425L387,410.3L393.3,433L402.5,418L411.7,433L418,410.3L423.6,425L431.2,407.5L434,419.3L446.3,400.5" fill="none" stroke="#000" stroke-width="4.8" stroke-linejoin="miter" stroke-miterlimit="6"/><path d="M-21,-40L37,-39L37,-29L24,-22L24,22L37,29L37,39L-21,40ZM-40,-40.5Q-43.5,0 -40,40.5L-26.5,40Q-30,0 -26.5,-40ZM29.5,-10L173,-10L173,10L29.5,10ZM226.6,0A30,30 0 1 1 166.6,0A30,30 0 1 1 226.6,0Z" transform="translate(285.8,407.3) rotate(33.64)"/><path d="M-21,-40L37,-39L37,-29L24,-22L24,22L37,29L37,39L-21,40ZM-40,-40.5Q-43.5,0 -40,40.5L-26.5,40Q-30,0 -26.5,-40ZM29.5,-10L173,-10L173,10L29.5,10ZM226.6,0A30,30 0 1 1 166.6,0A30,30 0 1 1 226.6,0Z" transform="translate(519.2,407.3) scale(-1,1) rotate(33.64)"/><path d="M255.6,465.9L260.9,481.3L277.2,481.6L264.2,491.4L268.9,507.0L255.6,497.6L242.3,507.0L247.0,491.4L234.0,481.6L250.3,481.3Z"/><path d="M550.3,465.9L555.6,481.3L571.9,481.6L558.9,491.4L563.6,507.0L550.3,497.6L537.0,507.0L541.7,491.4L528.7,481.6L545.0,481.3Z"/><path d="M109,551.5L140.5,551.5Q150.5,551.5 150.5,561.5L150.5,663Q150.5,673.5 140.5,673.5L109,673.5Q99,673.5 99,663L99,561.5Q99,551.5 109,551.5Z M117.5,573.5L117.5,656.5L133.3,656.5L133.3,573.5Z" fill-rule="evenodd"/><path d="M179.5,561.5L201,565L198.6,571L198.6,657.5L228,655.5L226,673.5L180.6,673.5L181.5,571Z" fill-rule="evenodd"/><path d="M252,573.5L300.6,579.2L306.5,585.7L306.5,665.7L300.6,673.5L252.4,673.5L253.5,580Z M272,589L272,660.8L289.2,660.8L289.2,589Z" fill-rule="evenodd"/><path d="M336.3,581.2L387.9,581.2L387.9,606.7L368.1,606.7L368.1,594L354,594L354,606.7L387.9,626.5L387.9,673.9L337,673.9L334.9,647L356.8,647L356.8,661.2L370.9,661.2L370.9,639.2L337,615.2Z" fill-rule="evenodd"/><path d="M419.1,581.2L441,581.2L440.3,606.7L461.5,581.2L474.2,581.2L455.8,608.1L471.4,626.5L474.2,673.9L451.6,673.9L451.6,632.2L444.5,620.8L440.3,626.5L440.3,673.9L419.1,673.9L421,650L421,600Z" fill-rule="evenodd"/><path d="M500.6,578L522.6,576L522.6,660.8L534,660.8L534,574.6L557,572.6L555.5,667L551,673.9L506,673.9L501.5,667Z" fill-rule="evenodd"/><path d="M583.9,569.4L607.5,565.3L606.7,572L606.7,656.7L632,654L630,673.9L584.7,673.9L585.5,575Z" fill-rule="evenodd"/><path d="M658,556.3L681.5,550.6L680,558L680,656L705.5,653L703.5,674L659,674L660,562Z" fill-rule="evenodd"/><text x="201.4" y="744.3" text-anchor="middle" font-family="Liberation Sans" font-weight="bold" font-size="49" stroke="#000" stroke-width="1.6" stroke-linejoin="round">T</text><text x="283.5" y="744.3" text-anchor="middle" font-family="Liberation Sans" font-weight="bold" font-size="49" stroke="#000" stroke-width="1.6" stroke-linejoin="round">U</text><text x="368.5" y="744.3" text-anchor="middle" font-family="Liberation Sans" font-weight="bold" font-size="49" stroke="#000" stroke-width="1.6" stroke-linejoin="round">N</text><text x="443.2" y="744.3" text-anchor="middle" font-family="Liberation Sans" font-weight="bold" font-size="49" stroke="#000" stroke-width="1.6" stroke-linejoin="round">I</text><text x="517.9" y="744.3" text-anchor="middle" font-family="Liberation Sans" font-weight="bold" font-size="49" stroke="#000" stroke-width="1.6" stroke-linejoin="round">N</text><text x="602.7" y="744.3" text-anchor="middle" font-family="Liberation Sans" font-weight="bold" font-size="49" stroke="#000" stroke-width="1.6" stroke-linejoin="round">G</text></g></svg></body></html>
